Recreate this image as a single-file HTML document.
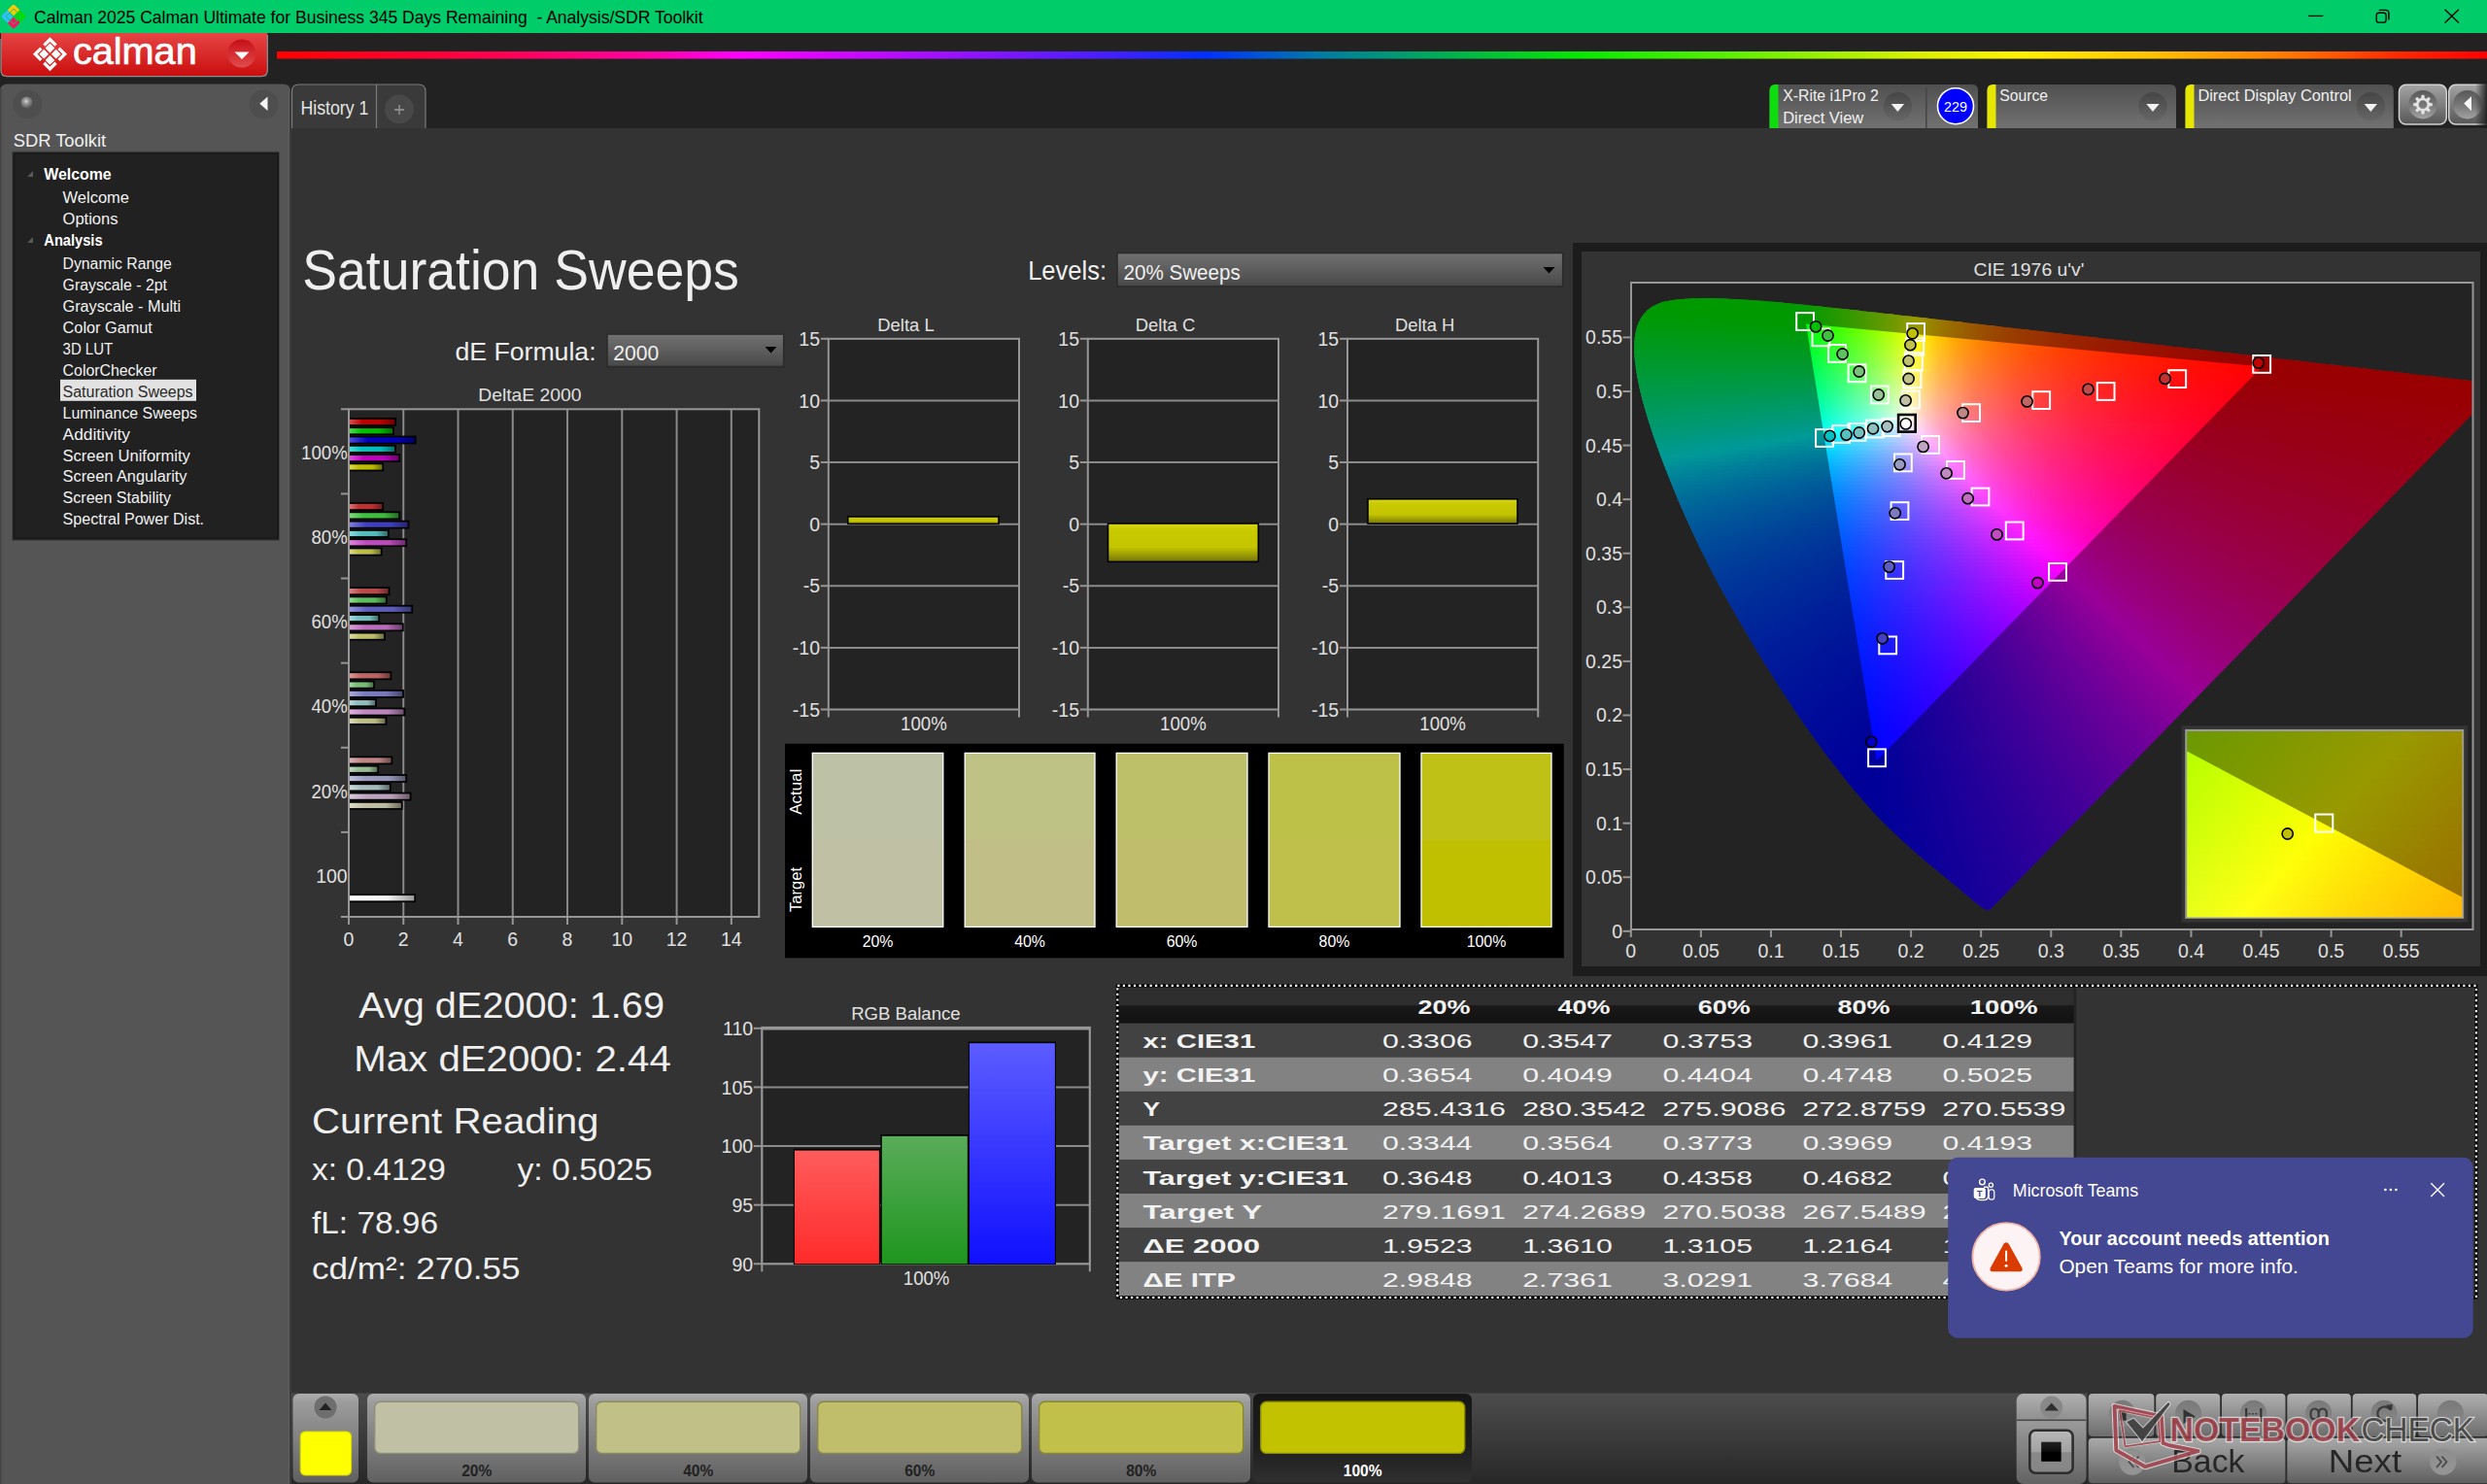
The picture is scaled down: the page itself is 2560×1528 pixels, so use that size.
<!DOCTYPE html>
<html><head><meta charset="utf-8"><title>Calman</title>
<style>html,body{margin:0;padding:0;background:#333;overflow:hidden}svg{display:block}text{font-family:"Liberation Sans",sans-serif;white-space:pre}</style>
</head><body>
<svg width="2560" height="1528" viewBox="0 0 2560 1528">
<defs><linearGradient id="spec" x1="0" y1="0" x2="1" y2="0"><stop offset="0" stop-color="#ff0000"/><stop offset="0.1" stop-color="#ff0050"/><stop offset="0.17" stop-color="#ff00a8"/><stop offset="0.21" stop-color="#ff00ff"/><stop offset="0.3" stop-color="#a010ff"/><stop offset="0.38" stop-color="#4020ff"/><stop offset="0.42" stop-color="#0030ff"/><stop offset="0.47" stop-color="#0078a8"/><stop offset="0.53" stop-color="#00b050"/><stop offset="0.59" stop-color="#08e800"/><stop offset="0.66" stop-color="#60f000"/><stop offset="0.74" stop-color="#d8f000"/><stop offset="0.79" stop-color="#fff000"/><stop offset="0.85" stop-color="#ffc000"/><stop offset="0.91" stop-color="#ff7800"/><stop offset="0.96" stop-color="#ff2800"/><stop offset="1" stop-color="#ff0000"/></linearGradient>
<linearGradient id="logo" x1="0" y1="0" x2="0" y2="1"><stop offset="0" stop-color="#e64444"/><stop offset="0.5" stop-color="#d92a2a"/><stop offset="1" stop-color="#c90d0d"/></linearGradient>
<linearGradient id="ddc" x1="0" y1="0" x2="0" y2="1"><stop offset="0" stop-color="#c60e18"/><stop offset="1" stop-color="#e24c4c"/></linearGradient>
<linearGradient id="ddcir" x1="0" y1="0" x2="0" y2="1"><stop offset="0" stop-color="#464646"/><stop offset="1" stop-color="#666666"/></linearGradient>
<linearGradient id="pan" x1="0" y1="0" x2="0" y2="1"><stop offset="0" stop-color="#505050"/><stop offset="1" stop-color="#727272"/></linearGradient>
<linearGradient id="gbtn" x1="0" y1="0" x2="0" y2="1"><stop offset="0" stop-color="#a4a4a4"/><stop offset="0.5" stop-color="#7e7e7e"/><stop offset="1" stop-color="#565656"/></linearGradient>
<linearGradient id="gcir" x1="0" y1="0" x2="0" y2="1"><stop offset="0" stop-color="#585858"/><stop offset="0.5" stop-color="#767676"/><stop offset="1" stop-color="#a2a2a2"/></linearGradient>
<linearGradient id="edge" x1="0" y1="0" x2="1" y2="0"><stop offset="0" stop-color="#222" stop-opacity="0"/><stop offset="1" stop-color="#1c1c1c" stop-opacity="0.9"/></linearGradient>
<radialGradient id="knob" cx="0.45" cy="0.4" r="0.6"><stop offset="0" stop-color="#d8d8d8"/><stop offset="0.35" stop-color="#9a9a9a"/><stop offset="1" stop-color="#585858"/></radialGradient>
<linearGradient id="dd" x1="0" y1="0" x2="0" y2="1"><stop offset="0" stop-color="#727272"/><stop offset="1" stop-color="#484848"/></linearGradient>
<linearGradient id="b0" x1="0" y1="0" x2="1" y2="0"><stop offset="0" stop-color="#dc4c4c"/><stop offset="0.28" stop-color="#c00000"/><stop offset="0.7" stop-color="#ba0000"/><stop offset="1" stop-color="#6f0000"/></linearGradient>
<linearGradient id="b1" x1="0" y1="0" x2="1" y2="0"><stop offset="0" stop-color="#4cdc4c"/><stop offset="0.28" stop-color="#00c000"/><stop offset="0.7" stop-color="#00ba00"/><stop offset="1" stop-color="#006f00"/></linearGradient>
<linearGradient id="b2" x1="0" y1="0" x2="1" y2="0"><stop offset="0" stop-color="#4c4cdc"/><stop offset="0.28" stop-color="#0000c0"/><stop offset="0.7" stop-color="#0000ba"/><stop offset="1" stop-color="#00006f"/></linearGradient>
<linearGradient id="b3" x1="0" y1="0" x2="1" y2="0"><stop offset="0" stop-color="#4cdcdc"/><stop offset="0.28" stop-color="#00c0c0"/><stop offset="0.7" stop-color="#00baba"/><stop offset="1" stop-color="#006f6f"/></linearGradient>
<linearGradient id="b4" x1="0" y1="0" x2="1" y2="0"><stop offset="0" stop-color="#dc4cdc"/><stop offset="0.28" stop-color="#c000c0"/><stop offset="0.7" stop-color="#ba00ba"/><stop offset="1" stop-color="#6f006f"/></linearGradient>
<linearGradient id="b5" x1="0" y1="0" x2="1" y2="0"><stop offset="0" stop-color="#dcdc4c"/><stop offset="0.28" stop-color="#c0c000"/><stop offset="0.7" stop-color="#baba00"/><stop offset="1" stop-color="#6f6f00"/></linearGradient>
<linearGradient id="b6" x1="0" y1="0" x2="1" y2="0"><stop offset="0" stop-color="#dc7272"/><stop offset="0.28" stop-color="#c03131"/><stop offset="0.7" stop-color="#ba3030"/><stop offset="1" stop-color="#6f1d1d"/></linearGradient>
<linearGradient id="b7" x1="0" y1="0" x2="1" y2="0"><stop offset="0" stop-color="#7ddc7d"/><stop offset="0.28" stop-color="#40c040"/><stop offset="0.7" stop-color="#3eba3e"/><stop offset="1" stop-color="#256f25"/></linearGradient>
<linearGradient id="b8" x1="0" y1="0" x2="1" y2="0"><stop offset="0" stop-color="#7d7ddc"/><stop offset="0.28" stop-color="#4040c0"/><stop offset="0.7" stop-color="#3e3eba"/><stop offset="1" stop-color="#25256f"/></linearGradient>
<linearGradient id="b9" x1="0" y1="0" x2="1" y2="0"><stop offset="0" stop-color="#8cdcdc"/><stop offset="0.28" stop-color="#55c0c0"/><stop offset="0.7" stop-color="#52baba"/><stop offset="1" stop-color="#316f6f"/></linearGradient>
<linearGradient id="b10" x1="0" y1="0" x2="1" y2="0"><stop offset="0" stop-color="#dc86dc"/><stop offset="0.28" stop-color="#c04cc0"/><stop offset="0.7" stop-color="#ba4aba"/><stop offset="1" stop-color="#6f2c6f"/></linearGradient>
<linearGradient id="b11" x1="0" y1="0" x2="1" y2="0"><stop offset="0" stop-color="#dcdc86"/><stop offset="0.28" stop-color="#c0c04c"/><stop offset="0.7" stop-color="#baba4a"/><stop offset="1" stop-color="#6f6f2c"/></linearGradient>
<linearGradient id="b12" x1="0" y1="0" x2="1" y2="0"><stop offset="0" stop-color="#dc8484"/><stop offset="0.28" stop-color="#c04a4a"/><stop offset="0.7" stop-color="#ba4848"/><stop offset="1" stop-color="#6f2b2b"/></linearGradient>
<linearGradient id="b13" x1="0" y1="0" x2="1" y2="0"><stop offset="0" stop-color="#93dc93"/><stop offset="0.28" stop-color="#5ec05e"/><stop offset="0.7" stop-color="#5bba5b"/><stop offset="1" stop-color="#366f36"/></linearGradient>
<linearGradient id="b14" x1="0" y1="0" x2="1" y2="0"><stop offset="0" stop-color="#9393dc"/><stop offset="0.28" stop-color="#5e5ec0"/><stop offset="0.7" stop-color="#5b5bba"/><stop offset="1" stop-color="#37376f"/></linearGradient>
<linearGradient id="b15" x1="0" y1="0" x2="1" y2="0"><stop offset="0" stop-color="#a5dcdc"/><stop offset="0.28" stop-color="#76c0c0"/><stop offset="0.7" stop-color="#73baba"/><stop offset="1" stop-color="#456f6f"/></linearGradient>
<linearGradient id="b16" x1="0" y1="0" x2="1" y2="0"><stop offset="0" stop-color="#dc9edc"/><stop offset="0.28" stop-color="#c06dc0"/><stop offset="0.7" stop-color="#ba6aba"/><stop offset="1" stop-color="#6f3f6f"/></linearGradient>
<linearGradient id="b17" x1="0" y1="0" x2="1" y2="0"><stop offset="0" stop-color="#dcdc9e"/><stop offset="0.28" stop-color="#c0c06d"/><stop offset="0.7" stop-color="#baba6a"/><stop offset="1" stop-color="#6f6f3f"/></linearGradient>
<linearGradient id="b18" x1="0" y1="0" x2="1" y2="0"><stop offset="0" stop-color="#dc9898"/><stop offset="0.28" stop-color="#c06565"/><stop offset="0.7" stop-color="#ba6262"/><stop offset="1" stop-color="#6f3a3a"/></linearGradient>
<linearGradient id="b19" x1="0" y1="0" x2="1" y2="0"><stop offset="0" stop-color="#a8dca8"/><stop offset="0.28" stop-color="#7ac07a"/><stop offset="0.7" stop-color="#77ba77"/><stop offset="1" stop-color="#476f47"/></linearGradient>
<linearGradient id="b20" x1="0" y1="0" x2="1" y2="0"><stop offset="0" stop-color="#a8a8dc"/><stop offset="0.28" stop-color="#7b7bc0"/><stop offset="0.7" stop-color="#7777ba"/><stop offset="1" stop-color="#47476f"/></linearGradient>
<linearGradient id="b21" x1="0" y1="0" x2="1" y2="0"><stop offset="0" stop-color="#b9dcdc"/><stop offset="0.28" stop-color="#91c0c0"/><stop offset="0.7" stop-color="#8dbaba"/><stop offset="1" stop-color="#546f6f"/></linearGradient>
<linearGradient id="b22" x1="0" y1="0" x2="1" y2="0"><stop offset="0" stop-color="#dcb3dc"/><stop offset="0.28" stop-color="#c089c0"/><stop offset="0.7" stop-color="#ba85ba"/><stop offset="1" stop-color="#6f506f"/></linearGradient>
<linearGradient id="b23" x1="0" y1="0" x2="1" y2="0"><stop offset="0" stop-color="#dcdcb3"/><stop offset="0.28" stop-color="#c0c089"/><stop offset="0.7" stop-color="#baba85"/><stop offset="1" stop-color="#6f6f4f"/></linearGradient>
<linearGradient id="b24" x1="0" y1="0" x2="1" y2="0"><stop offset="0" stop-color="#dcb2b2"/><stop offset="0.28" stop-color="#c08787"/><stop offset="0.7" stop-color="#ba8383"/><stop offset="1" stop-color="#6f4e4e"/></linearGradient>
<linearGradient id="b25" x1="0" y1="0" x2="1" y2="0"><stop offset="0" stop-color="#c0dcc0"/><stop offset="0.28" stop-color="#99c099"/><stop offset="0.7" stop-color="#95ba95"/><stop offset="1" stop-color="#596f59"/></linearGradient>
<linearGradient id="b26" x1="0" y1="0" x2="1" y2="0"><stop offset="0" stop-color="#c0c0dc"/><stop offset="0.28" stop-color="#9a9ac0"/><stop offset="0.7" stop-color="#9595ba"/><stop offset="1" stop-color="#59596f"/></linearGradient>
<linearGradient id="b27" x1="0" y1="0" x2="1" y2="0"><stop offset="0" stop-color="#ccdcdc"/><stop offset="0.28" stop-color="#a9c0c0"/><stop offset="0.7" stop-color="#a4baba"/><stop offset="1" stop-color="#626f6f"/></linearGradient>
<linearGradient id="b28" x1="0" y1="0" x2="1" y2="0"><stop offset="0" stop-color="#dcc8dc"/><stop offset="0.28" stop-color="#c0a4c0"/><stop offset="0.7" stop-color="#ba9fba"/><stop offset="1" stop-color="#6f5f6f"/></linearGradient>
<linearGradient id="b29" x1="0" y1="0" x2="1" y2="0"><stop offset="0" stop-color="#dcdcc8"/><stop offset="0.28" stop-color="#c0c0a4"/><stop offset="0.7" stop-color="#baba9f"/><stop offset="1" stop-color="#6f6f5f"/></linearGradient>
<linearGradient id="bw" x1="0" y1="0" x2="1" y2="0"><stop offset="0" stop-color="#ffffff"/><stop offset="0.6" stop-color="#f2f2f2"/><stop offset="1" stop-color="#9a9a9a"/></linearGradient>
<linearGradient id="ybar" x1="0" y1="0" x2="0" y2="1"><stop offset="0" stop-color="#d6d612"/><stop offset="0.2" stop-color="#caca02"/><stop offset="0.62" stop-color="#c4c400"/><stop offset="1" stop-color="#76760a"/></linearGradient>
<linearGradient id="rb" x1="0" y1="0" x2="0" y2="1"><stop offset="0" stop-color="#ff5c5c"/><stop offset="1" stop-color="#ff2a2a"/></linearGradient>
<linearGradient id="gb" x1="0" y1="0" x2="0" y2="1"><stop offset="0" stop-color="#5aac5a"/><stop offset="1" stop-color="#1e961e"/></linearGradient>
<linearGradient id="bb" x1="0" y1="0" x2="0" y2="1"><stop offset="0" stop-color="#5c5cff"/><stop offset="1" stop-color="#1010ff"/></linearGradient>
<linearGradient id="th" x1="0" y1="0" x2="0" y2="1"><stop offset="0" stop-color="#2e2e2e"/><stop offset="0.51" stop-color="#2d2d2d"/><stop offset="0.52" stop-color="#191919"/><stop offset="1" stop-color="#111111"/></linearGradient>
<linearGradient id="c0" gradientUnits="userSpaceOnUse" x1="1733.9" x2="1779.6" y1="0" y2="0"><stop offset="0" stop-color="#00ff00"/><stop offset="1" stop-color="#00ff00"/></linearGradient>
<linearGradient id="c1" gradientUnits="userSpaceOnUse" x1="1702.3" x2="1841.0" y1="0" y2="0"><stop offset="0" stop-color="#00ff00"/><stop offset="1" stop-color="#00ff00"/></linearGradient>
<linearGradient id="c2" gradientUnits="userSpaceOnUse" x1="1693.2" x2="1881.5" y1="0" y2="0"><stop offset="0" stop-color="#00ff00"/><stop offset=".86" stop-color="#00ff00"/><stop offset="1" stop-color="#2dff00"/></linearGradient>
<linearGradient id="c3" gradientUnits="userSpaceOnUse" x1="1687.7" x2="1918.7" y1="0" y2="0"><stop offset="0" stop-color="#00ff00"/><stop offset=".727" stop-color="#00ff00"/><stop offset=".857" stop-color="#34ff00"/><stop offset="1" stop-color="#76ff00"/></linearGradient>
<linearGradient id="c4" gradientUnits="userSpaceOnUse" x1="1684.0" x2="1954.5" y1="0" y2="0"><stop offset="0" stop-color="#00ff05"/><stop offset=".636" stop-color="#00ff00"/><stop offset=".821" stop-color="#5bff00"/><stop offset="1" stop-color="#c9ff00"/></linearGradient>
<linearGradient id="c5" gradientUnits="userSpaceOnUse" x1="1681.1" x2="1989.9" y1="0" y2="0"><stop offset="0" stop-color="#00ff0b"/><stop offset=".298" stop-color="#00ff00"/><stop offset=".57" stop-color="#00ff00"/><stop offset=".764" stop-color="#72ff00"/><stop offset=".855" stop-color="#b2ff00"/><stop offset=".946" stop-color="#fbff00"/><stop offset="1" stop-color="#ffd900"/></linearGradient>
<linearGradient id="c6" gradientUnits="userSpaceOnUse" x1="1679.5" x2="2024.8" y1="0" y2="0"><stop offset="0" stop-color="#00ff10"/><stop offset=".515" stop-color="#00ff00"/><stop offset=".597" stop-color="#31ff00"/><stop offset=".689" stop-color="#72ff00"/><stop offset=".77" stop-color="#b3ff00"/><stop offset=".851" stop-color="#fdff00"/><stop offset=".921" stop-color="#ffc800"/><stop offset="1" stop-color="#ff9b00"/></linearGradient>
<linearGradient id="c7" gradientUnits="userSpaceOnUse" x1="1679.5" x2="2059.6" y1="0" y2="0"><stop offset="0" stop-color="#00ff15"/><stop offset=".474" stop-color="#01ff00"/><stop offset=".631" stop-color="#76ff00"/><stop offset=".705" stop-color="#b8ff00"/><stop offset=".773" stop-color="#feff00"/><stop offset=".821" stop-color="#ffd300"/><stop offset=".873" stop-color="#ffae00"/><stop offset=".931" stop-color="#ff8f00"/><stop offset="1" stop-color="#ff7200"/></linearGradient>
<linearGradient id="c8" gradientUnits="userSpaceOnUse" x1="1679.5" x2="2094.4" y1="0" y2="0"><stop offset="0" stop-color="#00ff1a"/><stop offset=".434" stop-color="#00ff07"/><stop offset=".578" stop-color="#76ff00"/><stop offset=".646" stop-color="#b9ff00"/><stop offset=".709" stop-color="#ffff00"/><stop offset=".762" stop-color="#ffca00"/><stop offset=".829" stop-color="#ff9b00"/><stop offset=".906" stop-color="#ff7500"/><stop offset="1" stop-color="#ff5600"/></linearGradient>
<linearGradient id="c9" gradientUnits="userSpaceOnUse" x1="1679.5" x2="2129.4" y1="0" y2="0"><stop offset="0" stop-color="#00ff1f"/><stop offset=".4" stop-color="#00ff0e"/><stop offset=".458" stop-color="#2fff0a"/><stop offset=".529" stop-color="#71ff05"/><stop offset=".591" stop-color="#b4ff00"/><stop offset=".649" stop-color="#faff00"/><stop offset=".654" stop-color="#fffe00"/><stop offset=".685" stop-color="#ffda00"/><stop offset=".72" stop-color="#ffb900"/><stop offset=".791" stop-color="#ff8a00"/><stop offset=".885" stop-color="#ff6100"/><stop offset="1" stop-color="#ff4000"/></linearGradient>
<linearGradient id="c10" gradientUnits="userSpaceOnUse" x1="1679.5" x2="2164.3" y1="0" y2="0"><stop offset="0" stop-color="#00ff25"/><stop offset=".375" stop-color="#01ff14"/><stop offset=".495" stop-color="#76ff0c"/><stop offset=".549" stop-color="#b4ff08"/><stop offset=".602" stop-color="#fcff03"/><stop offset=".672" stop-color="#ffb400"/><stop offset=".755" stop-color="#ff7d00"/><stop offset=".862" stop-color="#ff5200"/><stop offset="1" stop-color="#ff2f00"/></linearGradient>
<linearGradient id="c11" gradientUnits="userSpaceOnUse" x1="1679.5" x2="2199.0" y1="0" y2="0"><stop offset="0" stop-color="#00ff2a"/><stop offset=".35" stop-color="#00ff1c"/><stop offset=".462" stop-color="#75ff14"/><stop offset=".512" stop-color="#b5ff11"/><stop offset=".562" stop-color="#fdff0c"/><stop offset=".601" stop-color="#ffce07"/><stop offset=".635" stop-color="#ffac03"/><stop offset=".724" stop-color="#ff7200"/><stop offset=".843" stop-color="#ff4500"/><stop offset="1" stop-color="#ff2200"/></linearGradient>
<linearGradient id="c12" gradientUnits="userSpaceOnUse" x1="1679.5" x2="2233.7" y1="0" y2="0"><stop offset="0" stop-color="#00ff2f"/><stop offset=".328" stop-color="#00ff23"/><stop offset=".379" stop-color="#34ff20"/><stop offset=".433" stop-color="#75ff1d"/><stop offset=".48" stop-color="#b5ff19"/><stop offset=".527" stop-color="#feff15"/><stop offset=".563" stop-color="#ffcd0f"/><stop offset=".599" stop-color="#ffa809"/><stop offset=".642" stop-color="#ff8605"/><stop offset=".693" stop-color="#ff6a01"/><stop offset=".823" stop-color="#ff3a00"/><stop offset="1" stop-color="#ff1700"/></linearGradient>
<linearGradient id="c13" gradientUnits="userSpaceOnUse" x1="1679.5" x2="2268.6" y1="0" y2="0"><stop offset="0" stop-color="#00ff35"/><stop offset=".312" stop-color="#01ff2a"/><stop offset=".411" stop-color="#79ff25"/><stop offset=".455" stop-color="#bbff22"/><stop offset=".496" stop-color="#ffff1f"/><stop offset=".53" stop-color="#ffcc16"/><stop offset=".567" stop-color="#ffa410"/><stop offset=".614" stop-color="#ff7e0a"/><stop offset=".669" stop-color="#ff6005"/><stop offset=".808" stop-color="#ff3000"/><stop offset="1" stop-color="#ff0e00"/></linearGradient>
<linearGradient id="c14" gradientUnits="userSpaceOnUse" x1="1679.5" x2="2303.3" y1="0" y2="0"><stop offset="0" stop-color="#00ff3a"/><stop offset=".295" stop-color="#00ff32"/><stop offset=".385" stop-color="#74ff2d"/><stop offset=".426" stop-color="#b6ff2b"/><stop offset=".468" stop-color="#fffe28"/><stop offset=".5" stop-color="#ffcb1e"/><stop offset=".542" stop-color="#ff9c15"/><stop offset=".59" stop-color="#ff770e"/><stop offset=".644" stop-color="#ff5908"/><stop offset=".712" stop-color="#ff3e03"/><stop offset=".792" stop-color="#ff2900"/><stop offset="1" stop-color="#ff0700"/></linearGradient>
<linearGradient id="c15" gradientUnits="userSpaceOnUse" x1="1679.5" x2="2338.3" y1="0" y2="0"><stop offset="0" stop-color="#00ff40"/><stop offset=".279" stop-color="#00ff39"/><stop offset=".319" stop-color="#32ff38"/><stop offset=".361" stop-color="#6fff36"/><stop offset=".443" stop-color="#fffd32"/><stop offset=".477" stop-color="#ffc525"/><stop offset=".516" stop-color="#ff981b"/><stop offset=".565" stop-color="#ff7113"/><stop offset=".622" stop-color="#ff520b"/><stop offset=".692" stop-color="#ff3806"/><stop offset=".777" stop-color="#ff2101"/><stop offset="1" stop-color="#ff0000"/></linearGradient>
<linearGradient id="c16" gradientUnits="userSpaceOnUse" x1="1679.5" x2="2373.2" y1="0" y2="0"><stop offset="0" stop-color="#00ff46"/><stop offset=".268" stop-color="#01ff41"/><stop offset=".346" stop-color="#74ff3f"/><stop offset=".421" stop-color="#fffc3c"/><stop offset=".456" stop-color="#ffc02c"/><stop offset=".496" stop-color="#ff9120"/><stop offset=".545" stop-color="#ff6b17"/><stop offset=".605" stop-color="#ff4a0e"/><stop offset=".683" stop-color="#ff2f07"/><stop offset=".781" stop-color="#ff1801"/><stop offset=".946" stop-color="#ff0000"/><stop offset="1" stop-color="#ff0000"/></linearGradient>
<linearGradient id="c17" gradientUnits="userSpaceOnUse" x1="1679.5" x2="2407.7" y1="0" y2="0"><stop offset="0" stop-color="#00ff4b"/><stop offset=".255" stop-color="#00ff49"/><stop offset=".327" stop-color="#6fff48"/><stop offset=".363" stop-color="#b1ff47"/><stop offset=".398" stop-color="#fdff47"/><stop offset=".401" stop-color="#fffb45"/><stop offset=".434" stop-color="#ffbf34"/><stop offset=".475" stop-color="#ff8d26"/><stop offset=".527" stop-color="#ff641a"/><stop offset=".59" stop-color="#ff4311"/><stop offset=".678" stop-color="#ff2609"/><stop offset=".791" stop-color="#ff0f02"/><stop offset=".895" stop-color="#ff0000"/><stop offset="1" stop-color="#ff0000"/></linearGradient>
<linearGradient id="c18" gradientUnits="userSpaceOnUse" x1="1679.5" x2="2442.3" y1="0" y2="0"><stop offset="0" stop-color="#00ff51"/><stop offset=".244" stop-color="#00ff51"/><stop offset=".278" stop-color="#33ff51"/><stop offset=".315" stop-color="#73ff51"/><stop offset=".349" stop-color="#b7ff51"/><stop offset=".38" stop-color="#feff51"/><stop offset=".414" stop-color="#ffbd3c"/><stop offset=".456" stop-color="#ff892c"/><stop offset=".509" stop-color="#ff5f1e"/><stop offset=".574" stop-color="#ff3e14"/><stop offset=".671" stop-color="#ff1f0a"/><stop offset=".8" stop-color="#ff0702"/><stop offset=".852" stop-color="#ff0000"/><stop offset="1" stop-color="#ff0000"/></linearGradient>
<linearGradient id="c19" gradientUnits="userSpaceOnUse" x1="1679.5" x2="2477.2" y1="0" y2="0"><stop offset="0" stop-color="#00ff57"/><stop offset=".236" stop-color="#01ff59"/><stop offset=".303" stop-color="#78ff5a"/><stop offset=".364" stop-color="#fffe5b"/><stop offset=".396" stop-color="#ffbc44"/><stop offset=".439" stop-color="#ff8531"/><stop offset=".491" stop-color="#ff5b22"/><stop offset=".559" stop-color="#ff3916"/><stop offset=".667" stop-color="#ff180b"/><stop offset=".807" stop-color="#ff0002"/><stop offset="1" stop-color="#ff0000"/></linearGradient>
<linearGradient id="c20" gradientUnits="userSpaceOnUse" x1="1679.5" x2="2511.8" y1="0" y2="0"><stop offset="0" stop-color="#00ff5d"/><stop offset=".226" stop-color="#00ff62"/><stop offset=".288" stop-color="#73ff64"/><stop offset=".348" stop-color="#fffd66"/><stop offset=".365" stop-color="#ffd657"/><stop offset=".382" stop-color="#ffb74b"/><stop offset=".425" stop-color="#ff7f36"/><stop offset=".478" stop-color="#ff5525"/><stop offset=".548" stop-color="#ff3318"/><stop offset=".644" stop-color="#ff160d"/><stop offset=".769" stop-color="#ff0005"/><stop offset="1" stop-color="#ff0000"/></linearGradient>
<linearGradient id="c21" gradientUnits="userSpaceOnUse" x1="1679.5" x2="2545.0" y1="0" y2="0"><stop offset="0" stop-color="#00ff63"/><stop offset=".217" stop-color="#00ff6a"/><stop offset=".245" stop-color="#31ff6c"/><stop offset=".277" stop-color="#72ff6e"/><stop offset=".335" stop-color="#fffc70"/><stop offset=".351" stop-color="#ffd460"/><stop offset=".367" stop-color="#ffb653"/><stop offset=".411" stop-color="#ff7c3b"/><stop offset=".467" stop-color="#ff5029"/><stop offset=".536" stop-color="#ff2e1b"/><stop offset=".624" stop-color="#ff1410"/><stop offset=".735" stop-color="#ff0007"/><stop offset="1" stop-color="#ff0000"/></linearGradient>
<linearGradient id="c22" gradientUnits="userSpaceOnUse" x1="1679.5" x2="2545.0" y1="0" y2="0"><stop offset="0" stop-color="#00ff69"/><stop offset=".22" stop-color="#02ff73"/><stop offset=".277" stop-color="#72ff78"/><stop offset=".305" stop-color="#b3ff7a"/><stop offset=".333" stop-color="#fdff7d"/><stop offset=".335" stop-color="#fffb7b"/><stop offset=".351" stop-color="#ffd369"/><stop offset=".367" stop-color="#ffb45b"/><stop offset=".411" stop-color="#ff7a41"/><stop offset=".467" stop-color="#ff4f2d"/><stop offset=".536" stop-color="#ff2d1e"/><stop offset=".624" stop-color="#ff1413"/><stop offset=".733" stop-color="#ff000a"/><stop offset="1" stop-color="#ff0000"/></linearGradient>
<linearGradient id="c23" gradientUnits="userSpaceOnUse" x1="1679.5" x2="2545.0" y1="0" y2="0"><stop offset="0" stop-color="#00ff6f"/><stop offset=".22" stop-color="#00ff7c"/><stop offset=".275" stop-color="#6dff81"/><stop offset=".305" stop-color="#b3ff85"/><stop offset=".333" stop-color="#feff88"/><stop offset=".335" stop-color="#fff986"/><stop offset=".351" stop-color="#ffd272"/><stop offset=".367" stop-color="#ffb363"/><stop offset=".411" stop-color="#ff7947"/><stop offset=".467" stop-color="#ff4d32"/><stop offset=".536" stop-color="#ff2c22"/><stop offset=".622" stop-color="#ff1316"/><stop offset=".728" stop-color="#ff000c"/><stop offset="1" stop-color="#ff0000"/></linearGradient>
<linearGradient id="c24" gradientUnits="userSpaceOnUse" x1="1679.6" x2="2545.0" y1="0" y2="0"><stop offset="0" stop-color="#00ff75"/><stop offset=".22" stop-color="#00ff85"/><stop offset=".25" stop-color="#37ff88"/><stop offset=".28" stop-color="#77ff8c"/><stop offset=".305" stop-color="#b4ff90"/><stop offset=".333" stop-color="#fffe94"/><stop offset=".349" stop-color="#ffd57e"/><stop offset=".365" stop-color="#ffb56e"/><stop offset=".407" stop-color="#ff7d50"/><stop offset=".462" stop-color="#ff4f38"/><stop offset=".532" stop-color="#ff2d27"/><stop offset=".617" stop-color="#ff1419"/><stop offset=".723" stop-color="#ff000f"/><stop offset="1" stop-color="#ff0001"/></linearGradient>
<linearGradient id="c25" gradientUnits="userSpaceOnUse" x1="1680.6" x2="2545.0" y1="0" y2="0"><stop offset="0" stop-color="#00ff7c"/><stop offset=".22" stop-color="#00ff8f"/><stop offset=".275" stop-color="#6fff96"/><stop offset=".303" stop-color="#b1ff9b"/><stop offset=".331" stop-color="#fdffa0"/><stop offset=".333" stop-color="#fffa9d"/><stop offset=".349" stop-color="#ffd187"/><stop offset=".366" stop-color="#ffb275"/><stop offset=".407" stop-color="#ff7a56"/><stop offset=".463" stop-color="#ff4d3d"/><stop offset=".532" stop-color="#ff2c2a"/><stop offset=".613" stop-color="#ff141d"/><stop offset=".717" stop-color="#ff0012"/><stop offset="1" stop-color="#ff0003"/></linearGradient>
<linearGradient id="c26" gradientUnits="userSpaceOnUse" x1="1681.6" x2="2545.0" y1="0" y2="0"><stop offset="0" stop-color="#00ff82"/><stop offset=".22" stop-color="#01ff98"/><stop offset=".276" stop-color="#71ffa1"/><stop offset=".331" stop-color="#fffcab"/><stop offset=".347" stop-color="#ffd392"/><stop offset=".364" stop-color="#ffb37f"/><stop offset=".405" stop-color="#ff7a5d"/><stop offset=".461" stop-color="#ff4d42"/><stop offset=".53" stop-color="#ff2b2e"/><stop offset=".612" stop-color="#ff1320"/><stop offset=".713" stop-color="#ff0014"/><stop offset="1" stop-color="#ff0004"/></linearGradient>
<linearGradient id="c27" gradientUnits="userSpaceOnUse" x1="1682.6" x2="2545.0" y1="0" y2="0"><stop offset="0" stop-color="#00ff89"/><stop offset=".22" stop-color="#01ffa2"/><stop offset=".278" stop-color="#79ffad"/><stop offset=".329" stop-color="#fffeb9"/><stop offset=".346" stop-color="#ffd49e"/><stop offset=".362" stop-color="#ffb389"/><stop offset=".404" stop-color="#ff7a65"/><stop offset=".459" stop-color="#ff4c48"/><stop offset=".529" stop-color="#ff2b32"/><stop offset=".608" stop-color="#ff1323"/><stop offset=".707" stop-color="#ff0017"/><stop offset="1" stop-color="#ff0006"/></linearGradient>
<linearGradient id="c28" gradientUnits="userSpaceOnUse" x1="1683.7" x2="2545.0" y1="0" y2="0"><stop offset="0" stop-color="#00ff90"/><stop offset=".218" stop-color="#00ffac"/><stop offset=".241" stop-color="#2affb0"/><stop offset=".272" stop-color="#6bffb7"/><stop offset=".3" stop-color="#afffbe"/><stop offset=".327" stop-color="#feffc6"/><stop offset=".33" stop-color="#fff9c2"/><stop offset=".346" stop-color="#ffd0a6"/><stop offset=".362" stop-color="#ffb090"/><stop offset=".404" stop-color="#ff776a"/><stop offset=".46" stop-color="#ff4b4c"/><stop offset=".529" stop-color="#ff2936"/><stop offset=".606" stop-color="#ff1327"/><stop offset=".704" stop-color="#ff001a"/><stop offset="1" stop-color="#ff0007"/></linearGradient>
<linearGradient id="c29" gradientUnits="userSpaceOnUse" x1="1684.8" x2="2545.0" y1="0" y2="0"><stop offset="0" stop-color="#00ff96"/><stop offset=".219" stop-color="#00ffb6"/><stop offset=".272" stop-color="#6effc2"/><stop offset=".3" stop-color="#b3ffca"/><stop offset=".325" stop-color="#fcffd3"/><stop offset=".328" stop-color="#fffbd0"/><stop offset=".344" stop-color="#ffd1b2"/><stop offset=".36" stop-color="#ffb09b"/><stop offset=".402" stop-color="#ff7772"/><stop offset=".456" stop-color="#ff4b53"/><stop offset=".525" stop-color="#ff2a3b"/><stop offset=".602" stop-color="#ff122a"/><stop offset=".697" stop-color="#ff001d"/><stop offset="1" stop-color="#ff0009"/></linearGradient>
<linearGradient id="c30" gradientUnits="userSpaceOnUse" x1="1685.9" x2="2545.0" y1="0" y2="0"><stop offset="0" stop-color="#00ff9d"/><stop offset=".219" stop-color="#00ffc0"/><stop offset=".275" stop-color="#76ffcf"/><stop offset=".326" stop-color="#fffcdf"/><stop offset=".342" stop-color="#ffd1be"/><stop offset=".359" stop-color="#ffb0a5"/><stop offset=".4" stop-color="#ff777a"/><stop offset=".454" stop-color="#ff4b59"/><stop offset=".524" stop-color="#ff293f"/><stop offset=".601" stop-color="#ff122e"/><stop offset=".694" stop-color="#ff0020"/><stop offset="1" stop-color="#ff000a"/></linearGradient>
<linearGradient id="c31" gradientUnits="userSpaceOnUse" x1="1687.1" x2="2545.0" y1="0" y2="0"><stop offset="0" stop-color="#00ffa4"/><stop offset=".219" stop-color="#01ffcb"/><stop offset=".275" stop-color="#79ffdc"/><stop offset=".324" stop-color="#fffeed"/><stop offset=".34" stop-color="#ffd2ca"/><stop offset=".357" stop-color="#ffb1b0"/><stop offset=".399" stop-color="#ff7681"/><stop offset=".452" stop-color="#ff4a5e"/><stop offset=".522" stop-color="#ff2843"/><stop offset=".597" stop-color="#ff1231"/><stop offset=".688" stop-color="#ff0023"/><stop offset="1" stop-color="#ff000c"/></linearGradient>
<linearGradient id="c32" gradientUnits="userSpaceOnUse" x1="1688.3" x2="2545.0" y1="0" y2="0"><stop offset="0" stop-color="#00ffac"/><stop offset=".119" stop-color="#00ffbf"/><stop offset=".217" stop-color="#00ffd6"/><stop offset=".24" stop-color="#2dffdd"/><stop offset=".271" stop-color="#71ffe7"/><stop offset=".296" stop-color="#b3fff1"/><stop offset=".322" stop-color="#fffffc"/><stop offset=".339" stop-color="#ffd3d7"/><stop offset=".355" stop-color="#ffb1bb"/><stop offset=".397" stop-color="#ff7689"/><stop offset=".451" stop-color="#ff4a64"/><stop offset=".521" stop-color="#ff2848"/><stop offset=".593" stop-color="#ff1235"/><stop offset=".684" stop-color="#ff0026"/><stop offset="1" stop-color="#ff000d"/></linearGradient>
<linearGradient id="c33" gradientUnits="userSpaceOnUse" x1="1689.6" x2="2544.0" y1="0" y2="0"><stop offset="0" stop-color="#00ffb3"/><stop offset=".119" stop-color="#00ffc8"/><stop offset=".218" stop-color="#00ffe1"/><stop offset=".265" stop-color="#63fff1"/><stop offset=".297" stop-color="#b7ffff"/><stop offset=".325" stop-color="#fff2ff"/><stop offset=".342" stop-color="#ffc9db"/><stop offset=".358" stop-color="#ffa9be"/><stop offset=".4" stop-color="#ff718d"/><stop offset=".454" stop-color="#ff4667"/><stop offset=".527" stop-color="#ff244a"/><stop offset=".679" stop-color="#ff002a"/><stop offset="1" stop-color="#ff000f"/></linearGradient>
<linearGradient id="c34" gradientUnits="userSpaceOnUse" x1="1690.8" x2="2540.1" y1="0" y2="0"><stop offset="0" stop-color="#00ffba"/><stop offset=".12" stop-color="#00ffd1"/><stop offset=".219" stop-color="#01ffed"/><stop offset=".268" stop-color="#6cffff"/><stop offset=".332" stop-color="#ffe0fc"/><stop offset=".349" stop-color="#ffbad9"/><stop offset=".365" stop-color="#ff9dbe"/><stop offset=".41" stop-color="#ff678c"/><stop offset=".466" stop-color="#ff3f67"/><stop offset=".537" stop-color="#ff204b"/><stop offset=".678" stop-color="#ff002d"/><stop offset="1" stop-color="#ff0011"/></linearGradient>
<linearGradient id="c35" gradientUnits="userSpaceOnUse" x1="1692.2" x2="2536.2" y1="0" y2="0"><stop offset="0" stop-color="#00ffc2"/><stop offset=".118" stop-color="#00ffda"/><stop offset=".218" stop-color="#00fff8"/><stop offset=".239" stop-color="#29feff"/><stop offset=".336" stop-color="#ffd4ff"/><stop offset=".37" stop-color="#ff95c1"/><stop offset=".415" stop-color="#ff6290"/><stop offset=".472" stop-color="#ff3b6a"/><stop offset=".543" stop-color="#ff1e4d"/><stop offset=".675" stop-color="#ff0030"/><stop offset="1" stop-color="#ff0012"/></linearGradient>
<linearGradient id="c36" gradientUnits="userSpaceOnUse" x1="1693.5" x2="2532.3" y1="0" y2="0"><stop offset="0" stop-color="#00ffca"/><stop offset=".112" stop-color="#00ffe2"/><stop offset=".205" stop-color="#00fffe"/><stop offset=".219" stop-color="#00faff"/><stop offset=".272" stop-color="#67e6ff"/><stop offset=".343" stop-color="#ffc4fc"/><stop offset=".377" stop-color="#ff8bc1"/><stop offset=".422" stop-color="#ff5b91"/><stop offset=".479" stop-color="#ff376c"/><stop offset=".553" stop-color="#ff1a4f"/><stop offset=".672" stop-color="#ff0034"/><stop offset=".813" stop-color="#ff0022"/><stop offset="1" stop-color="#ff0014"/></linearGradient>
<linearGradient id="c37" gradientUnits="userSpaceOnUse" x1="1694.9" x2="2528.4" y1="0" y2="0"><stop offset="0" stop-color="#00ffd2"/><stop offset=".175" stop-color="#00ffff"/><stop offset=".221" stop-color="#01efff"/><stop offset=".283" stop-color="#79d6ff"/><stop offset=".348" stop-color="#ffbafe"/><stop offset=".384" stop-color="#ff81c1"/><stop offset=".43" stop-color="#ff5592"/><stop offset=".487" stop-color="#ff336d"/><stop offset=".561" stop-color="#ff1850"/><stop offset=".672" stop-color="#ff0037"/><stop offset=".813" stop-color="#ff0024"/><stop offset="1" stop-color="#ff0016"/></linearGradient>
<linearGradient id="c38" gradientUnits="userSpaceOnUse" x1="1696.3" x2="2524.5" y1="0" y2="0"><stop offset="0" stop-color="#00ffda"/><stop offset=".142" stop-color="#00ffff"/><stop offset=".22" stop-color="#00e5ff"/><stop offset=".273" stop-color="#5fd1ff"/><stop offset=".353" stop-color="#feb0ff"/><stop offset=".355" stop-color="#ffacfb"/><stop offset=".391" stop-color="#ff78c1"/><stop offset=".437" stop-color="#ff4f93"/><stop offset=".497" stop-color="#ff2e6e"/><stop offset=".572" stop-color="#ff1451"/><stop offset=".669" stop-color="#ff003b"/><stop offset=".811" stop-color="#ff0027"/><stop offset="1" stop-color="#ff0018"/></linearGradient>
<linearGradient id="c39" gradientUnits="userSpaceOnUse" x1="1697.7" x2="2520.6" y1="0" y2="0"><stop offset="0" stop-color="#00ffe2"/><stop offset=".112" stop-color="#00ffff"/><stop offset=".221" stop-color="#00dbff"/><stop offset=".284" stop-color="#70c3ff"/><stop offset=".36" stop-color="#ffa3fd"/><stop offset=".394" stop-color="#ff74c6"/><stop offset=".435" stop-color="#ff509c"/><stop offset=".486" stop-color="#ff3279"/><stop offset=".549" stop-color="#ff1a5d"/><stop offset=".668" stop-color="#ff003e"/><stop offset=".812" stop-color="#ff0029"/><stop offset="1" stop-color="#ff001a"/></linearGradient>
<linearGradient id="c40" gradientUnits="userSpaceOnUse" x1="1699.2" x2="2516.7" y1="0" y2="0"><stop offset="0" stop-color="#00ffea"/><stop offset=".081" stop-color="#00ffff"/><stop offset=".223" stop-color="#02d1ff"/><stop offset=".294" stop-color="#7bb7ff"/><stop offset=".364" stop-color="#ff9bff"/><stop offset=".399" stop-color="#ff6ec9"/><stop offset=".44" stop-color="#ff4b9e"/><stop offset=".492" stop-color="#ff2f7c"/><stop offset=".555" stop-color="#ff1860"/><stop offset=".665" stop-color="#ff0042"/><stop offset=".81" stop-color="#ff002c"/><stop offset="1" stop-color="#ff001c"/></linearGradient>
<linearGradient id="c41" gradientUnits="userSpaceOnUse" x1="1700.6" x2="2512.8" y1="0" y2="0"><stop offset="0" stop-color="#00fff3"/><stop offset=".047" stop-color="#00ffff"/><stop offset=".222" stop-color="#00c9ff"/><stop offset=".286" stop-color="#68b2ff"/><stop offset=".372" stop-color="#ff8ffc"/><stop offset=".406" stop-color="#ff66c8"/><stop offset=".448" stop-color="#ff469f"/><stop offset=".5" stop-color="#ff2b7d"/><stop offset=".564" stop-color="#ff1561"/><stop offset=".662" stop-color="#ff0046"/><stop offset=".808" stop-color="#ff002f"/><stop offset="1" stop-color="#ff001e"/></linearGradient>
<linearGradient id="c42" gradientUnits="userSpaceOnUse" x1="1702.1" x2="2508.9" y1="0" y2="0"><stop offset="0" stop-color="#00fffc"/><stop offset=".062" stop-color="#00f2ff"/><stop offset=".223" stop-color="#01c0ff"/><stop offset=".295" stop-color="#73a7ff"/><stop offset=".377" stop-color="#ff87fd"/><stop offset=".411" stop-color="#ff61ca"/><stop offset=".454" stop-color="#ff42a1"/><stop offset=".506" stop-color="#ff287f"/><stop offset=".568" stop-color="#ff1464"/><stop offset=".662" stop-color="#ff004a"/><stop offset=".808" stop-color="#ff0031"/><stop offset="1" stop-color="#ff001f"/></linearGradient>
<linearGradient id="c43" gradientUnits="userSpaceOnUse" x1="1703.6" x2="2505.1" y1="0" y2="0"><stop offset="0" stop-color="#00faff"/><stop offset=".222" stop-color="#00b9ff"/><stop offset=".299" stop-color="#759fff"/><stop offset=".382" stop-color="#ff80ff"/><stop offset=".417" stop-color="#ff5bcd"/><stop offset=".459" stop-color="#ff3ea4"/><stop offset=".512" stop-color="#ff2582"/><stop offset=".574" stop-color="#ff1267"/><stop offset=".659" stop-color="#ff004e"/><stop offset=".806" stop-color="#ff0034"/><stop offset="1" stop-color="#ff0021"/></linearGradient>
<linearGradient id="c44" gradientUnits="userSpaceOnUse" x1="1705.1" x2="2501.2" y1="0" y2="0"><stop offset="0" stop-color="#00f1ff"/><stop offset=".224" stop-color="#00b1ff"/><stop offset=".296" stop-color="#6c99ff"/><stop offset=".389" stop-color="#ff76fc"/><stop offset=".425" stop-color="#ff54cc"/><stop offset=".467" stop-color="#ff39a4"/><stop offset=".52" stop-color="#ff2283"/><stop offset=".583" stop-color="#ff0f68"/><stop offset=".656" stop-color="#ff0052"/><stop offset=".751" stop-color="#ff003f"/><stop offset="1" stop-color="#ff0023"/></linearGradient>
<linearGradient id="c45" gradientUnits="userSpaceOnUse" x1="1706.7" x2="2497.3" y1="0" y2="0"><stop offset="0" stop-color="#00e9ff"/><stop offset=".223" stop-color="#00abff"/><stop offset=".299" stop-color="#6b92ff"/><stop offset=".395" stop-color="#ff6ffd"/><stop offset=".43" stop-color="#ff50ce"/><stop offset=".473" stop-color="#ff35a6"/><stop offset=".524" stop-color="#ff2086"/><stop offset=".587" stop-color="#ff0d6b"/><stop offset=".653" stop-color="#ff0057"/><stop offset=".754" stop-color="#ff0042"/><stop offset="1" stop-color="#ff0026"/></linearGradient>
<linearGradient id="c46" gradientUnits="userSpaceOnUse" x1="1708.3" x2="2493.4" y1="0" y2="0"><stop offset="0" stop-color="#00e1ff"/><stop offset=".224" stop-color="#00a4ff"/><stop offset=".313" stop-color="#7c87ff"/><stop offset=".4" stop-color="#ff69ff"/><stop offset=".436" stop-color="#ff4bd0"/><stop offset=".479" stop-color="#ff32a8"/><stop offset=".53" stop-color="#ff1d88"/><stop offset=".594" stop-color="#ff0b6d"/><stop offset=".65" stop-color="#ff005b"/><stop offset=".759" stop-color="#ff0044"/><stop offset="1" stop-color="#ff0028"/></linearGradient>
<linearGradient id="c47" gradientUnits="userSpaceOnUse" x1="1709.9" x2="2489.5" y1="0" y2="0"><stop offset="0" stop-color="#00daff"/><stop offset=".223" stop-color="#009eff"/><stop offset=".298" stop-color="#6187ff"/><stop offset=".408" stop-color="#ff60fc"/><stop offset=".444" stop-color="#ff45cf"/><stop offset=".487" stop-color="#ff2da9"/><stop offset=".539" stop-color="#ff1a89"/><stop offset=".603" stop-color="#ff096e"/><stop offset=".649" stop-color="#ff0060"/><stop offset=".767" stop-color="#ff0046"/><stop offset="1" stop-color="#ff002a"/></linearGradient>
<linearGradient id="c48" gradientUnits="userSpaceOnUse" x1="1711.5" x2="2485.6" y1="0" y2="0"><stop offset="0" stop-color="#00d3ff"/><stop offset=".225" stop-color="#0097ff"/><stop offset=".313" stop-color="#727dff"/><stop offset=".413" stop-color="#ff5bfd"/><stop offset=".45" stop-color="#ff40d1"/><stop offset=".493" stop-color="#ff2aab"/><stop offset=".545" stop-color="#ff178b"/><stop offset=".607" stop-color="#ff0771"/><stop offset=".646" stop-color="#ff0064"/><stop offset=".77" stop-color="#ff0048"/><stop offset="1" stop-color="#ff002c"/></linearGradient>
<linearGradient id="c49" gradientUnits="userSpaceOnUse" x1="1713.1" x2="2481.7" y1="0" y2="0"><stop offset="0" stop-color="#00ccff"/><stop offset=".226" stop-color="#0191ff"/><stop offset=".32" stop-color="#7876ff"/><stop offset=".419" stop-color="#ff55fe"/><stop offset=".455" stop-color="#ff3cd2"/><stop offset=".5" stop-color="#ff26ad"/><stop offset=".552" stop-color="#ff158d"/><stop offset=".611" stop-color="#ff0674"/><stop offset=".643" stop-color="#ff0069"/><stop offset=".773" stop-color="#ff004b"/><stop offset="1" stop-color="#ff002e"/></linearGradient>
<linearGradient id="c50" gradientUnits="userSpaceOnUse" x1="1714.7" x2="2477.8" y1="0" y2="0"><stop offset="0" stop-color="#00c6ff"/><stop offset=".225" stop-color="#008cff"/><stop offset=".328" stop-color="#7d6fff"/><stop offset=".425" stop-color="#ff50ff"/><stop offset=".461" stop-color="#ff38d4"/><stop offset=".506" stop-color="#ff23ae"/><stop offset=".558" stop-color="#ff128f"/><stop offset=".619" stop-color="#ff0476"/><stop offset=".778" stop-color="#ff004d"/><stop offset="1" stop-color="#ff0030"/></linearGradient>
<linearGradient id="c51" gradientUnits="userSpaceOnUse" x1="1716.4" x2="2473.9" y1="0" y2="0"><stop offset="0" stop-color="#00c0ff"/><stop offset=".227" stop-color="#0187ff"/><stop offset=".322" stop-color="#726cff"/><stop offset=".433" stop-color="#ff49fd"/><stop offset=".47" stop-color="#ff33d3"/><stop offset=".515" stop-color="#ff1fae"/><stop offset=".565" stop-color="#ff1091"/><stop offset=".626" stop-color="#ff0278"/><stop offset=".781" stop-color="#ff004f"/><stop offset="1" stop-color="#ff0032"/></linearGradient>
<linearGradient id="c52" gradientUnits="userSpaceOnUse" x1="1718.0" x2="2470.0" y1="0" y2="0"><stop offset="0" stop-color="#00baff"/><stop offset=".226" stop-color="#0082ff"/><stop offset=".327" stop-color="#7466ff"/><stop offset=".439" stop-color="#ff44fd"/><stop offset=".476" stop-color="#ff2fd4"/><stop offset=".521" stop-color="#ff1cb0"/><stop offset=".572" stop-color="#ff0d93"/><stop offset=".633" stop-color="#ff0079"/><stop offset=".787" stop-color="#ff0052"/><stop offset="1" stop-color="#ff0035"/></linearGradient>
<linearGradient id="c53" gradientUnits="userSpaceOnUse" x1="1719.7" x2="2466.1" y1="0" y2="0"><stop offset="0" stop-color="#00b4ff"/><stop offset=".228" stop-color="#017dff"/><stop offset=".335" stop-color="#7960ff"/><stop offset=".445" stop-color="#ff3ffe"/><stop offset=".482" stop-color="#ff2bd6"/><stop offset=".525" stop-color="#ff1ab4"/><stop offset=".576" stop-color="#ff0c96"/><stop offset=".638" stop-color="#ff007c"/><stop offset=".79" stop-color="#ff0054"/><stop offset="1" stop-color="#ff0037"/></linearGradient>
<linearGradient id="c54" gradientUnits="userSpaceOnUse" x1="1721.4" x2="2462.2" y1="0" y2="0"><stop offset="0" stop-color="#00aeff"/><stop offset=".227" stop-color="#0079ff"/><stop offset=".34" stop-color="#7b5bff"/><stop offset=".451" stop-color="#ff3bff"/><stop offset=".489" stop-color="#ff28d7"/><stop offset=".532" stop-color="#ff18b5"/><stop offset=".583" stop-color="#ff0a98"/><stop offset=".643" stop-color="#ff007f"/><stop offset=".794" stop-color="#ff0057"/><stop offset="1" stop-color="#ff0039"/></linearGradient>
<linearGradient id="c55" gradientUnits="userSpaceOnUse" x1="1723.1" x2="2458.3" y1="0" y2="0"><stop offset="0" stop-color="#00a9ff"/><stop offset=".226" stop-color="#0075ff"/><stop offset=".326" stop-color="#685bff"/><stop offset=".46" stop-color="#ff35fd"/><stop offset=".498" stop-color="#ff23d6"/><stop offset=".541" stop-color="#ff14b5"/><stop offset=".626" stop-color="#ff008a"/><stop offset=".65" stop-color="#ff0080"/><stop offset=".8" stop-color="#ff0059"/><stop offset="1" stop-color="#ff003c"/></linearGradient>
<linearGradient id="c56" gradientUnits="userSpaceOnUse" x1="1724.9" x2="2454.5" y1="0" y2="0"><stop offset="0" stop-color="#00a4ff"/><stop offset=".228" stop-color="#0070ff"/><stop offset=".34" stop-color="#7354ff"/><stop offset=".466" stop-color="#ff31fd"/><stop offset=".504" stop-color="#ff20d7"/><stop offset=".548" stop-color="#ff11b7"/><stop offset=".622" stop-color="#ff0090"/><stop offset=".658" stop-color="#ff0082"/><stop offset=".803" stop-color="#ff005b"/><stop offset="1" stop-color="#ff003e"/></linearGradient>
<linearGradient id="c57" gradientUnits="userSpaceOnUse" x1="1726.7" x2="2450.6" y1="0" y2="0"><stop offset="0" stop-color="#009fff"/><stop offset=".227" stop-color="#006dff"/><stop offset=".343" stop-color="#7350ff"/><stop offset=".472" stop-color="#ff2dfe"/><stop offset=".511" stop-color="#ff1cd8"/><stop offset=".555" stop-color="#ff0fb8"/><stop offset=".619" stop-color="#ff0096"/><stop offset=".663" stop-color="#ff0085"/><stop offset=".807" stop-color="#ff005e"/><stop offset="1" stop-color="#ff0041"/></linearGradient>
<linearGradient id="c58" gradientUnits="userSpaceOnUse" x1="1728.4" x2="2446.7" y1="0" y2="0"><stop offset="0" stop-color="#009aff"/><stop offset=".228" stop-color="#0169ff"/><stop offset=".356" stop-color="#7d49ff"/><stop offset=".479" stop-color="#ff29ff"/><stop offset=".515" stop-color="#ff1adc"/><stop offset=".56" stop-color="#ff0dbb"/><stop offset=".618" stop-color="#ff009c"/><stop offset=".668" stop-color="#ff0087"/><stop offset=".81" stop-color="#ff0061"/><stop offset="1" stop-color="#ff0043"/></linearGradient>
<linearGradient id="c59" gradientUnits="userSpaceOnUse" x1="1730.2" x2="2442.8" y1="0" y2="0"><stop offset="0" stop-color="#0095ff"/><stop offset=".227" stop-color="#0065ff"/><stop offset=".356" stop-color="#7946ff"/><stop offset=".486" stop-color="#ff25ff"/><stop offset=".525" stop-color="#ff16da"/><stop offset=".567" stop-color="#ff0abc"/><stop offset=".615" stop-color="#ff00a2"/><stop offset=".674" stop-color="#ff008a"/><stop offset=".814" stop-color="#ff0063"/><stop offset="1" stop-color="#ff0046"/></linearGradient>
<linearGradient id="c60" gradientUnits="userSpaceOnUse" x1="1732.1" x2="2438.9" y1="0" y2="0"><stop offset="0" stop-color="#0091ff"/><stop offset=".229" stop-color="#0161ff"/><stop offset=".354" stop-color="#7344ff"/><stop offset=".495" stop-color="#ff20fd"/><stop offset=".535" stop-color="#ff12d9"/><stop offset=".577" stop-color="#ff07bc"/><stop offset=".611" stop-color="#ff00a9"/><stop offset=".682" stop-color="#ff008b"/><stop offset=".821" stop-color="#ff0065"/><stop offset="1" stop-color="#ff0048"/></linearGradient>
<linearGradient id="c61" gradientUnits="userSpaceOnUse" x1="1733.9" x2="2435.0" y1="0" y2="0"><stop offset="0" stop-color="#008dff"/><stop offset=".228" stop-color="#005eff"/><stop offset=".359" stop-color="#7540ff"/><stop offset=".502" stop-color="#ff1dfd"/><stop offset=".582" stop-color="#ff05bf"/><stop offset=".608" stop-color="#ff00b0"/><stop offset=".687" stop-color="#ff008e"/><stop offset=".824" stop-color="#ff0068"/><stop offset="1" stop-color="#ff004b"/></linearGradient>
<linearGradient id="c62" gradientUnits="userSpaceOnUse" x1="1735.7" x2="2431.1" y1="0" y2="0"><stop offset="0" stop-color="#0088ff"/><stop offset=".23" stop-color="#015aff"/><stop offset=".365" stop-color="#773cff"/><stop offset=".509" stop-color="#ff19fe"/><stop offset=".59" stop-color="#ff03c0"/><stop offset=".693" stop-color="#ff0090"/><stop offset=".828" stop-color="#ff006a"/><stop offset="1" stop-color="#ff004d"/></linearGradient>
<linearGradient id="c63" gradientUnits="userSpaceOnUse" x1="1737.6" x2="2427.2" y1="0" y2="0"><stop offset="0" stop-color="#0084ff"/><stop offset=".229" stop-color="#0157ff"/><stop offset=".371" stop-color="#7938ff"/><stop offset=".516" stop-color="#ff16fe"/><stop offset=".597" stop-color="#ff01c1"/><stop offset=".699" stop-color="#ff0092"/><stop offset=".832" stop-color="#ff006d"/><stop offset="1" stop-color="#ff0050"/></linearGradient>
<linearGradient id="c64" gradientUnits="userSpaceOnUse" x1="1739.5" x2="2423.3" y1="0" y2="0"><stop offset="0" stop-color="#0080ff"/><stop offset=".228" stop-color="#0055ff"/><stop offset=".374" stop-color="#7935ff"/><stop offset=".524" stop-color="#ff13ff"/><stop offset=".603" stop-color="#ff00c4"/><stop offset=".705" stop-color="#ff0095"/><stop offset=".834" stop-color="#ff0070"/><stop offset="1" stop-color="#ff0053"/></linearGradient>
<linearGradient id="c65" gradientUnits="userSpaceOnUse" x1="1741.5" x2="2419.4" y1="0" y2="0"><stop offset="0" stop-color="#007dff"/><stop offset=".23" stop-color="#0151ff"/><stop offset=".384" stop-color="#7d31ff"/><stop offset=".531" stop-color="#ff10ff"/><stop offset=".611" stop-color="#ff00c5"/><stop offset=".711" stop-color="#ff0097"/><stop offset=".838" stop-color="#ff0073"/><stop offset="1" stop-color="#ff0056"/></linearGradient>
<linearGradient id="c66" gradientUnits="userSpaceOnUse" x1="1743.4" x2="2415.5" y1="0" y2="0"><stop offset="0" stop-color="#0079ff"/><stop offset=".229" stop-color="#004fff"/><stop offset=".387" stop-color="#7c2eff"/><stop offset=".539" stop-color="#ff0cff"/><stop offset=".589" stop-color="#ff00d8"/><stop offset=".619" stop-color="#ff00c6"/><stop offset=".717" stop-color="#ff0099"/><stop offset=".842" stop-color="#ff0075"/><stop offset="1" stop-color="#ff0059"/></linearGradient>
<linearGradient id="c67" gradientUnits="userSpaceOnUse" x1="1745.4" x2="2411.6" y1="0" y2="0"><stop offset="0" stop-color="#0075ff"/><stop offset=".228" stop-color="#004cff"/><stop offset=".387" stop-color="#792cff"/><stop offset=".546" stop-color="#fe0aff"/><stop offset=".588" stop-color="#ff00df"/><stop offset=".627" stop-color="#ff00c7"/><stop offset=".723" stop-color="#ff009c"/><stop offset=".847" stop-color="#ff0078"/><stop offset="1" stop-color="#ff005c"/></linearGradient>
<linearGradient id="c68" gradientUnits="userSpaceOnUse" x1="1747.4" x2="2407.7" y1="0" y2="0"><stop offset="0" stop-color="#0072ff"/><stop offset=".23" stop-color="#0149ff"/><stop offset=".385" stop-color="#742bff"/><stop offset=".557" stop-color="#ff06fd"/><stop offset=".636" stop-color="#ff00c8"/><stop offset=".733" stop-color="#ff009d"/><stop offset=".851" stop-color="#ff007b"/><stop offset="1" stop-color="#ff005e"/></linearGradient>
<linearGradient id="c69" gradientUnits="userSpaceOnUse" x1="1749.4" x2="2403.9" y1="0" y2="0"><stop offset="0" stop-color="#006eff"/><stop offset=".229" stop-color="#0047ff"/><stop offset=".391" stop-color="#7628ff"/><stop offset=".565" stop-color="#ff03fe"/><stop offset=".645" stop-color="#ff00c9"/><stop offset=".74" stop-color="#ff009f"/><stop offset=".856" stop-color="#ff007d"/><stop offset="1" stop-color="#ff0061"/></linearGradient>
<linearGradient id="c70" gradientUnits="userSpaceOnUse" x1="1751.5" x2="2400.0" y1="0" y2="0"><stop offset="0" stop-color="#006bff"/><stop offset=".228" stop-color="#0044ff"/><stop offset=".392" stop-color="#7426ff"/><stop offset=".574" stop-color="#ff01fe"/><stop offset=".651" stop-color="#ff00cb"/><stop offset=".743" stop-color="#ff00a2"/><stop offset=".857" stop-color="#ff0081"/><stop offset="1" stop-color="#ff0065"/></linearGradient>
<linearGradient id="c71" gradientUnits="userSpaceOnUse" x1="1753.6" x2="2396.1" y1="0" y2="0"><stop offset="0" stop-color="#0068ff"/><stop offset=".23" stop-color="#0141ff"/><stop offset=".402" stop-color="#7822ff"/><stop offset=".582" stop-color="#ff00fe"/><stop offset=".657" stop-color="#ff00cd"/><stop offset=".75" stop-color="#ff00a5"/><stop offset=".862" stop-color="#ff0083"/><stop offset="1" stop-color="#ff0068"/></linearGradient>
<linearGradient id="c72" gradientUnits="userSpaceOnUse" x1="1755.7" x2="2392.2" y1="0" y2="0"><stop offset="0" stop-color="#0065ff"/><stop offset=".229" stop-color="#013fff"/><stop offset=".405" stop-color="#7720ff"/><stop offset=".591" stop-color="#ff00fe"/><stop offset=".666" stop-color="#ff00ce"/><stop offset=".757" stop-color="#ff00a7"/><stop offset=".867" stop-color="#ff0086"/><stop offset="1" stop-color="#ff006b"/></linearGradient>
<linearGradient id="c73" gradientUnits="userSpaceOnUse" x1="1757.8" x2="2388.3" y1="0" y2="0"><stop offset="0" stop-color="#0062ff"/><stop offset=".228" stop-color="#003dff"/><stop offset=".4" stop-color="#711fff"/><stop offset=".561" stop-color="#e401ff"/><stop offset=".6" stop-color="#ff00fe"/><stop offset=".676" stop-color="#ff00cf"/><stop offset=".765" stop-color="#ff00a9"/><stop offset=".872" stop-color="#ff0089"/><stop offset="1" stop-color="#ff006e"/></linearGradient>
<linearGradient id="c74" gradientUnits="userSpaceOnUse" x1="1759.9" x2="2384.4" y1="0" y2="0"><stop offset="0" stop-color="#005fff"/><stop offset=".227" stop-color="#003bff"/><stop offset=".391" stop-color="#681fff"/><stop offset=".557" stop-color="#db00ff"/><stop offset=".609" stop-color="#ff00fe"/><stop offset=".682" stop-color="#ff00d1"/><stop offset=".769" stop-color="#ff00ac"/><stop offset=".874" stop-color="#ff008c"/><stop offset="1" stop-color="#ff0071"/></linearGradient>
<linearGradient id="c75" gradientUnits="userSpaceOnUse" x1="1762.1" x2="2380.5" y1="0" y2="0"><stop offset="0" stop-color="#005cff"/><stop offset=".23" stop-color="#0139ff"/><stop offset=".553" stop-color="#d200ff"/><stop offset=".618" stop-color="#ff00fe"/><stop offset=".689" stop-color="#ff00d3"/><stop offset=".776" stop-color="#ff00ae"/><stop offset=".88" stop-color="#ff008f"/><stop offset="1" stop-color="#ff0075"/></linearGradient>
<linearGradient id="c76" gradientUnits="userSpaceOnUse" x1="1764.3" x2="2376.6" y1="0" y2="0"><stop offset="0" stop-color="#0059ff"/><stop offset=".229" stop-color="#0137ff"/><stop offset=".549" stop-color="#ca00ff"/><stop offset=".627" stop-color="#ff00fe"/><stop offset=".699" stop-color="#ff00d4"/><stop offset=".784" stop-color="#ff00b0"/><stop offset=".882" stop-color="#ff0092"/><stop offset="1" stop-color="#ff0078"/></linearGradient>
<linearGradient id="c77" gradientUnits="userSpaceOnUse" x1="1766.5" x2="2372.7" y1="0" y2="0"><stop offset="0" stop-color="#0056ff"/><stop offset=".228" stop-color="#0035ff"/><stop offset=".544" stop-color="#c200ff"/><stop offset=".637" stop-color="#ff00fe"/><stop offset=".706" stop-color="#ff00d6"/><stop offset=".788" stop-color="#ff00b3"/><stop offset=".884" stop-color="#ff0096"/><stop offset="1" stop-color="#ff007c"/></linearGradient>
<linearGradient id="c78" gradientUnits="userSpaceOnUse" x1="1768.7" x2="2368.8" y1="0" y2="0"><stop offset="0" stop-color="#0053ff"/><stop offset=".227" stop-color="#0033ff"/><stop offset=".54" stop-color="#ba00ff"/><stop offset=".647" stop-color="#ff00fe"/><stop offset=".717" stop-color="#ff00d6"/><stop offset=".797" stop-color="#ff00b5"/><stop offset=".89" stop-color="#ff0098"/><stop offset="1" stop-color="#ff007f"/></linearGradient>
<linearGradient id="c79" gradientUnits="userSpaceOnUse" x1="1771.0" x2="2364.9" y1="0" y2="0"><stop offset="0" stop-color="#0051ff"/><stop offset=".229" stop-color="#0130ff"/><stop offset=".535" stop-color="#b300ff"/><stop offset=".657" stop-color="#ff00fe"/><stop offset=".724" stop-color="#ff00d8"/><stop offset=".805" stop-color="#ff00b7"/><stop offset="1" stop-color="#ff0083"/></linearGradient>
<linearGradient id="c80" gradientUnits="userSpaceOnUse" x1="1773.2" x2="2361.0" y1="0" y2="0"><stop offset="0" stop-color="#004eff"/><stop offset=".228" stop-color="#012fff"/><stop offset=".531" stop-color="#ac00ff"/><stop offset=".667" stop-color="#ff00fe"/><stop offset=".735" stop-color="#ff00d9"/><stop offset=".81" stop-color="#ff00ba"/><stop offset="1" stop-color="#ff0087"/></linearGradient>
<linearGradient id="c81" gradientUnits="userSpaceOnUse" x1="1775.5" x2="2357.1" y1="0" y2="0"><stop offset="0" stop-color="#004cff"/><stop offset=".227" stop-color="#012dff"/><stop offset=".526" stop-color="#a500ff"/><stop offset=".677" stop-color="#ff00fe"/><stop offset=".743" stop-color="#ff00db"/><stop offset=".818" stop-color="#ff00bc"/><stop offset="1" stop-color="#ff008a"/></linearGradient>
<linearGradient id="c82" gradientUnits="userSpaceOnUse" x1="1777.8" x2="2353.2" y1="0" y2="0"><stop offset="0" stop-color="#0049ff"/><stop offset=".226" stop-color="#002bff"/><stop offset=".521" stop-color="#9f00ff"/><stop offset=".688" stop-color="#ff00fe"/><stop offset=".751" stop-color="#ff00dd"/><stop offset=".824" stop-color="#ff00bf"/><stop offset="1" stop-color="#ff008e"/></linearGradient>
<linearGradient id="c83" gradientUnits="userSpaceOnUse" x1="1780.1" x2="2349.4" y1="0" y2="0"><stop offset="0" stop-color="#0047ff"/><stop offset=".225" stop-color="#002aff"/><stop offset=".516" stop-color="#9800ff"/><stop offset=".696" stop-color="#fe00ff"/><stop offset=".833" stop-color="#ff00c1"/><stop offset="1" stop-color="#ff0092"/></linearGradient>
<linearGradient id="c84" gradientUnits="userSpaceOnUse" x1="1782.4" x2="2345.5" y1="0" y2="0"><stop offset="0" stop-color="#0045ff"/><stop offset=".224" stop-color="#0028ff"/><stop offset=".511" stop-color="#9200ff"/><stop offset=".707" stop-color="#fe00ff"/><stop offset=".838" stop-color="#ff00c4"/><stop offset="1" stop-color="#ff0096"/></linearGradient>
<linearGradient id="c85" gradientUnits="userSpaceOnUse" x1="1784.7" x2="2341.6" y1="0" y2="0"><stop offset="0" stop-color="#0042ff"/><stop offset=".226" stop-color="#0126ff"/><stop offset=".506" stop-color="#8c00ff"/><stop offset=".718" stop-color="#ff00ff"/><stop offset=".844" stop-color="#ff00c7"/><stop offset="1" stop-color="#ff009a"/></linearGradient>
<linearGradient id="c86" gradientUnits="userSpaceOnUse" x1="1787.1" x2="2337.7" y1="0" y2="0"><stop offset="0" stop-color="#0040ff"/><stop offset=".225" stop-color="#0125ff"/><stop offset=".501" stop-color="#8600ff"/><stop offset=".73" stop-color="#ff00ff"/><stop offset=".85" stop-color="#ff00ca"/><stop offset="1" stop-color="#ff009e"/></linearGradient>
<linearGradient id="c87" gradientUnits="userSpaceOnUse" x1="1789.4" x2="2333.8" y1="0" y2="0"><stop offset="0" stop-color="#003eff"/><stop offset=".224" stop-color="#0123ff"/><stop offset=".496" stop-color="#8000ff"/><stop offset=".742" stop-color="#ff00ff"/><stop offset=".86" stop-color="#ff00cc"/><stop offset="1" stop-color="#ff00a3"/></linearGradient>
<linearGradient id="c88" gradientUnits="userSpaceOnUse" x1="1791.8" x2="2329.9" y1="0" y2="0"><stop offset="0" stop-color="#003cff"/><stop offset=".223" stop-color="#0022ff"/><stop offset=".491" stop-color="#7b00ff"/><stop offset=".754" stop-color="#ff00ff"/><stop offset=".866" stop-color="#ff00cf"/><stop offset="1" stop-color="#ff00a7"/></linearGradient>
<linearGradient id="c89" gradientUnits="userSpaceOnUse" x1="1794.2" x2="2326.0" y1="0" y2="0"><stop offset="0" stop-color="#003aff"/><stop offset=".222" stop-color="#0020ff"/><stop offset=".481" stop-color="#7400ff"/><stop offset=".767" stop-color="#ff00ff"/><stop offset=".872" stop-color="#ff00d2"/><stop offset="1" stop-color="#ff00ac"/></linearGradient>
<linearGradient id="c90" gradientUnits="userSpaceOnUse" x1="1796.6" x2="2322.1" y1="0" y2="0"><stop offset="0" stop-color="#0038ff"/><stop offset=".221" stop-color="#001fff"/><stop offset=".476" stop-color="#6f00ff"/><stop offset=".776" stop-color="#fe00ff"/><stop offset=".887" stop-color="#ff00d2"/><stop offset="1" stop-color="#ff00b0"/></linearGradient>
<linearGradient id="c91" gradientUnits="userSpaceOnUse" x1="1799.0" x2="2318.2" y1="0" y2="0"><stop offset="0" stop-color="#0036ff"/><stop offset=".22" stop-color="#001eff"/><stop offset=".47" stop-color="#6a00ff"/><stop offset=".79" stop-color="#fe00ff"/><stop offset=".894" stop-color="#ff00d5"/><stop offset="1" stop-color="#ff00b5"/></linearGradient>
<linearGradient id="c92" gradientUnits="userSpaceOnUse" x1="1801.4" x2="2314.3" y1="0" y2="0"><stop offset="0" stop-color="#0034ff"/><stop offset=".222" stop-color="#011cff"/><stop offset=".464" stop-color="#6500ff"/><stop offset=".803" stop-color="#fe00ff"/><stop offset=".901" stop-color="#ff00d8"/><stop offset="1" stop-color="#ff00ba"/></linearGradient>
<linearGradient id="c93" gradientUnits="userSpaceOnUse" x1="1803.8" x2="2310.4" y1="0" y2="0"><stop offset="0" stop-color="#0032ff"/><stop offset=".221" stop-color="#011aff"/><stop offset=".458" stop-color="#6000ff"/><stop offset=".817" stop-color="#fe00ff"/><stop offset="1" stop-color="#ff00be"/></linearGradient>
<linearGradient id="c94" gradientUnits="userSpaceOnUse" x1="1806.3" x2="2306.5" y1="0" y2="0"><stop offset="0" stop-color="#0030ff"/><stop offset=".22" stop-color="#0119ff"/><stop offset=".452" stop-color="#5c00ff"/><stop offset=".832" stop-color="#fe00ff"/><stop offset="1" stop-color="#ff00c3"/></linearGradient>
<linearGradient id="c95" gradientUnits="userSpaceOnUse" x1="1808.7" x2="2302.6" y1="0" y2="0"><stop offset="0" stop-color="#002eff"/><stop offset=".219" stop-color="#0118ff"/><stop offset=".441" stop-color="#5600ff"/><stop offset=".846" stop-color="#ff00ff"/><stop offset="1" stop-color="#ff00c9"/></linearGradient>
<linearGradient id="c96" gradientUnits="userSpaceOnUse" x1="1811.2" x2="2298.8" y1="0" y2="0"><stop offset="0" stop-color="#002cff"/><stop offset=".217" stop-color="#0017ff"/><stop offset=".435" stop-color="#5100ff"/><stop offset=".861" stop-color="#ff00ff"/><stop offset="1" stop-color="#ff00ce"/></linearGradient>
<linearGradient id="c97" gradientUnits="userSpaceOnUse" x1="1813.7" x2="2294.9" y1="0" y2="0"><stop offset="0" stop-color="#002aff"/><stop offset=".216" stop-color="#0016ff"/><stop offset=".428" stop-color="#4d00ff"/><stop offset=".877" stop-color="#ff00ff"/><stop offset="1" stop-color="#ff00d3"/></linearGradient>
<linearGradient id="c98" gradientUnits="userSpaceOnUse" x1="1816.2" x2="2291.0" y1="0" y2="0"><stop offset="0" stop-color="#0029ff"/><stop offset=".215" stop-color="#0014ff"/><stop offset=".421" stop-color="#4900ff"/><stop offset=".889" stop-color="#fe00ff"/><stop offset="1" stop-color="#ff00d9"/></linearGradient>
<linearGradient id="c99" gradientUnits="userSpaceOnUse" x1="1818.7" x2="2287.1" y1="0" y2="0"><stop offset="0" stop-color="#0027ff"/><stop offset=".214" stop-color="#0013ff"/><stop offset=".414" stop-color="#4500ff"/><stop offset=".905" stop-color="#fe00ff"/><stop offset="1" stop-color="#ff00de"/></linearGradient>
<linearGradient id="c100" gradientUnits="userSpaceOnUse" x1="1821.2" x2="2283.2" y1="0" y2="0"><stop offset="0" stop-color="#0025ff"/><stop offset=".212" stop-color="#0012ff"/><stop offset=".407" stop-color="#4200ff"/><stop offset=".922" stop-color="#fe00ff"/><stop offset="1" stop-color="#ff00e4"/></linearGradient>
<linearGradient id="c101" gradientUnits="userSpaceOnUse" x1="1823.8" x2="2279.3" y1="0" y2="0"><stop offset="0" stop-color="#0024ff"/><stop offset=".211" stop-color="#0011ff"/><stop offset=".395" stop-color="#3c00ff"/><stop offset=".94" stop-color="#ff00ff"/><stop offset="1" stop-color="#ff00ea"/></linearGradient>
<linearGradient id="c102" gradientUnits="userSpaceOnUse" x1="1826.4" x2="2275.4" y1="0" y2="0"><stop offset="0" stop-color="#0022ff"/><stop offset=".209" stop-color="#0010ff"/><stop offset=".387" stop-color="#3900ff"/><stop offset=".958" stop-color="#ff00ff"/><stop offset="1" stop-color="#ff00f0"/></linearGradient>
<linearGradient id="c103" gradientUnits="userSpaceOnUse" x1="1828.9" x2="2271.5" y1="0" y2="0"><stop offset="0" stop-color="#0020ff"/><stop offset=".208" stop-color="#000fff"/><stop offset=".38" stop-color="#3500ff"/><stop offset=".972" stop-color="#fe00ff"/><stop offset="1" stop-color="#ff00f6"/></linearGradient>
<linearGradient id="c104" gradientUnits="userSpaceOnUse" x1="1831.6" x2="2267.6" y1="0" y2="0"><stop offset="0" stop-color="#001fff"/><stop offset=".206" stop-color="#000eff"/><stop offset=".372" stop-color="#3200ff"/><stop offset="1" stop-color="#ff00fd"/></linearGradient>
<linearGradient id="c105" gradientUnits="userSpaceOnUse" x1="1834.2" x2="2263.7" y1="0" y2="0"><stop offset="0" stop-color="#001dff"/><stop offset=".205" stop-color="#000dff"/><stop offset=".359" stop-color="#2d00ff"/><stop offset="1" stop-color="#fb00ff"/></linearGradient>
<linearGradient id="c106" gradientUnits="userSpaceOnUse" x1="1836.8" x2="2259.8" y1="0" y2="0"><stop offset="0" stop-color="#001cff"/><stop offset=".203" stop-color="#000cff"/><stop offset=".35" stop-color="#2a00ff"/><stop offset="1" stop-color="#f500ff"/></linearGradient>
<linearGradient id="c107" gradientUnits="userSpaceOnUse" x1="1839.5" x2="2255.9" y1="0" y2="0"><stop offset="0" stop-color="#001aff"/><stop offset=".202" stop-color="#000bff"/><stop offset=".341" stop-color="#2700ff"/><stop offset="1" stop-color="#ee00ff"/></linearGradient>
<linearGradient id="c108" gradientUnits="userSpaceOnUse" x1="1842.2" x2="2252.0" y1="0" y2="0"><stop offset="0" stop-color="#0019ff"/><stop offset=".2" stop-color="#000aff"/><stop offset=".327" stop-color="#2200ff"/><stop offset="1" stop-color="#e800ff"/></linearGradient>
<linearGradient id="c109" gradientUnits="userSpaceOnUse" x1="1844.9" x2="2248.2" y1="0" y2="0"><stop offset="0" stop-color="#0017ff"/><stop offset=".198" stop-color="#0009ff"/><stop offset=".317" stop-color="#1f00ff"/><stop offset="1" stop-color="#e200ff"/></linearGradient>
<linearGradient id="c110" gradientUnits="userSpaceOnUse" x1="1847.7" x2="2244.3" y1="0" y2="0"><stop offset="0" stop-color="#0016ff"/><stop offset=".197" stop-color="#0008ff"/><stop offset=".308" stop-color="#1d00ff"/><stop offset="1" stop-color="#dd00ff"/></linearGradient>
<linearGradient id="c111" gradientUnits="userSpaceOnUse" x1="1850.5" x2="2240.4" y1="0" y2="0"><stop offset="0" stop-color="#0015ff"/><stop offset=".195" stop-color="#0007ff"/><stop offset=".298" stop-color="#1a00ff"/><stop offset="1" stop-color="#d700ff"/></linearGradient>
<linearGradient id="c112" gradientUnits="userSpaceOnUse" x1="1853.3" x2="2236.5" y1="0" y2="0"><stop offset="0" stop-color="#0013ff"/><stop offset=".193" stop-color="#0006ff"/><stop offset=".282" stop-color="#1600ff"/><stop offset="1" stop-color="#d100ff"/></linearGradient>
<linearGradient id="c113" gradientUnits="userSpaceOnUse" x1="1856.1" x2="2232.6" y1="0" y2="0"><stop offset="0" stop-color="#0012ff"/><stop offset=".191" stop-color="#0005ff"/><stop offset=".271" stop-color="#1300ff"/><stop offset="1" stop-color="#cc00ff"/></linearGradient>
<linearGradient id="c114" gradientUnits="userSpaceOnUse" x1="1859.0" x2="2228.7" y1="0" y2="0"><stop offset="0" stop-color="#0011ff"/><stop offset=".189" stop-color="#0004ff"/><stop offset="1" stop-color="#c700ff"/></linearGradient>
<linearGradient id="c115" gradientUnits="userSpaceOnUse" x1="1861.9" x2="2224.8" y1="0" y2="0"><stop offset="0" stop-color="#000fff"/><stop offset=".187" stop-color="#0103ff"/><stop offset="1" stop-color="#c200ff"/></linearGradient>
<linearGradient id="c116" gradientUnits="userSpaceOnUse" x1="1864.8" x2="2220.9" y1="0" y2="0"><stop offset="0" stop-color="#000eff"/><stop offset=".185" stop-color="#0103ff"/><stop offset="1" stop-color="#bd00ff"/></linearGradient>
<linearGradient id="c117" gradientUnits="userSpaceOnUse" x1="1867.7" x2="2217.0" y1="0" y2="0"><stop offset="0" stop-color="#000dff"/><stop offset=".183" stop-color="#0102ff"/><stop offset="1" stop-color="#b800ff"/></linearGradient>
<linearGradient id="c118" gradientUnits="userSpaceOnUse" x1="1870.7" x2="2213.1" y1="0" y2="0"><stop offset="0" stop-color="#000bff"/><stop offset=".175" stop-color="#0001ff"/><stop offset="1" stop-color="#b300ff"/></linearGradient>
<linearGradient id="c119" gradientUnits="userSpaceOnUse" x1="1873.7" x2="2209.2" y1="0" y2="0"><stop offset="0" stop-color="#000aff"/><stop offset=".173" stop-color="#0000ff"/><stop offset="1" stop-color="#ae00ff"/></linearGradient>
<linearGradient id="c120" gradientUnits="userSpaceOnUse" x1="1876.8" x2="2205.3" y1="0" y2="0"><stop offset="0" stop-color="#0009ff"/><stop offset=".17" stop-color="#0000ff"/><stop offset="1" stop-color="#a900ff"/></linearGradient>
<linearGradient id="c121" gradientUnits="userSpaceOnUse" x1="1879.9" x2="2201.4" y1="0" y2="0"><stop offset="0" stop-color="#0008ff"/><stop offset=".168" stop-color="#0100ff"/><stop offset="1" stop-color="#a500ff"/></linearGradient>
<linearGradient id="c122" gradientUnits="userSpaceOnUse" x1="1883.0" x2="2197.5" y1="0" y2="0"><stop offset="0" stop-color="#0006ff"/><stop offset=".165" stop-color="#0100ff"/><stop offset="1" stop-color="#a100ff"/></linearGradient>
<linearGradient id="c123" gradientUnits="userSpaceOnUse" x1="1886.1" x2="2193.7" y1="0" y2="0"><stop offset="0" stop-color="#0005ff"/><stop offset=".156" stop-color="#0000ff"/><stop offset="1" stop-color="#9c00ff"/></linearGradient>
<linearGradient id="c124" gradientUnits="userSpaceOnUse" x1="1889.3" x2="2189.8" y1="0" y2="0"><stop offset="0" stop-color="#0004ff"/><stop offset=".153" stop-color="#0000ff"/><stop offset="1" stop-color="#9800ff"/></linearGradient>
<linearGradient id="c125" gradientUnits="userSpaceOnUse" x1="1892.5" x2="2185.9" y1="0" y2="0"><stop offset="0" stop-color="#0003ff"/><stop offset=".15" stop-color="#0100ff"/><stop offset="1" stop-color="#9400ff"/></linearGradient>
<linearGradient id="c126" gradientUnits="userSpaceOnUse" x1="1895.7" x2="2182.0" y1="0" y2="0"><stop offset="0" stop-color="#0002ff"/><stop offset=".147" stop-color="#0100ff"/><stop offset="1" stop-color="#9000ff"/></linearGradient>
<linearGradient id="c127" gradientUnits="userSpaceOnUse" x1="1899.0" x2="2178.1" y1="0" y2="0"><stop offset="0" stop-color="#0000ff"/><stop offset=".136" stop-color="#0000ff"/><stop offset="1" stop-color="#8c00ff"/></linearGradient>
<linearGradient id="c128" gradientUnits="userSpaceOnUse" x1="1902.4" x2="2174.2" y1="0" y2="0"><stop offset="0" stop-color="#0000ff"/><stop offset=".132" stop-color="#0100ff"/><stop offset="1" stop-color="#8800ff"/></linearGradient>
<linearGradient id="c129" gradientUnits="userSpaceOnUse" x1="1905.7" x2="2170.3" y1="0" y2="0"><stop offset="0" stop-color="#0000ff"/><stop offset=".121" stop-color="#0000ff"/><stop offset="1" stop-color="#8400ff"/></linearGradient>
<linearGradient id="c130" gradientUnits="userSpaceOnUse" x1="1909.2" x2="2166.4" y1="0" y2="0"><stop offset="0" stop-color="#0000ff"/><stop offset=".117" stop-color="#0000ff"/><stop offset="1" stop-color="#8000ff"/></linearGradient>
<linearGradient id="c131" gradientUnits="userSpaceOnUse" x1="1912.7" x2="2162.5" y1="0" y2="0"><stop offset="0" stop-color="#0000ff"/><stop offset=".112" stop-color="#0100ff"/><stop offset="1" stop-color="#7c00ff"/></linearGradient>
<linearGradient id="c132" gradientUnits="userSpaceOnUse" x1="1916.2" x2="2158.6" y1="0" y2="0"><stop offset="0" stop-color="#0000ff"/><stop offset=".099" stop-color="#0000ff"/><stop offset="1" stop-color="#7900ff"/></linearGradient>
<linearGradient id="c133" gradientUnits="userSpaceOnUse" x1="1919.9" x2="2154.7" y1="0" y2="0"><stop offset="0" stop-color="#0000ff"/><stop offset=".094" stop-color="#0100ff"/><stop offset="1" stop-color="#7500ff"/></linearGradient>
<linearGradient id="c134" gradientUnits="userSpaceOnUse" x1="1923.6" x2="2150.8" y1="0" y2="0"><stop offset="0" stop-color="#0000ff"/><stop offset=".079" stop-color="#0000ff"/><stop offset="1" stop-color="#7200ff"/></linearGradient>
<linearGradient id="c135" gradientUnits="userSpaceOnUse" x1="1927.5" x2="2146.9" y1="0" y2="0"><stop offset="0" stop-color="#0000ff"/><stop offset=".073" stop-color="#0100ff"/><stop offset="1" stop-color="#6e00ff"/></linearGradient>
<linearGradient id="c136" gradientUnits="userSpaceOnUse" x1="1931.4" x2="2143.1" y1="0" y2="0"><stop offset="0" stop-color="#0000ff"/><stop offset=".057" stop-color="#0000ff"/><stop offset="1" stop-color="#6b00ff"/></linearGradient>
<linearGradient id="c137" gradientUnits="userSpaceOnUse" x1="1935.4" x2="2139.2" y1="0" y2="0"><stop offset="0" stop-color="#0000ff"/><stop offset="1" stop-color="#6700ff"/></linearGradient>
<linearGradient id="c138" gradientUnits="userSpaceOnUse" x1="1939.5" x2="2135.3" y1="0" y2="0"><stop offset="0" stop-color="#0000ff"/><stop offset="1" stop-color="#6400ff"/></linearGradient>
<linearGradient id="c139" gradientUnits="userSpaceOnUse" x1="1943.8" x2="2131.4" y1="0" y2="0"><stop offset="0" stop-color="#0000ff"/><stop offset="1" stop-color="#6100ff"/></linearGradient>
<linearGradient id="c140" gradientUnits="userSpaceOnUse" x1="1948.0" x2="2127.5" y1="0" y2="0"><stop offset="0" stop-color="#0200ff"/><stop offset="1" stop-color="#5e00ff"/></linearGradient>
<linearGradient id="c141" gradientUnits="userSpaceOnUse" x1="1952.4" x2="2123.6" y1="0" y2="0"><stop offset="0" stop-color="#0300ff"/><stop offset="1" stop-color="#5b00ff"/></linearGradient>
<linearGradient id="c142" gradientUnits="userSpaceOnUse" x1="1956.8" x2="2119.7" y1="0" y2="0"><stop offset="0" stop-color="#0500ff"/><stop offset="1" stop-color="#5800ff"/></linearGradient>
<linearGradient id="c143" gradientUnits="userSpaceOnUse" x1="1961.3" x2="2115.8" y1="0" y2="0"><stop offset="0" stop-color="#0700ff"/><stop offset="1" stop-color="#5500ff"/></linearGradient>
<linearGradient id="c144" gradientUnits="userSpaceOnUse" x1="1965.8" x2="2111.9" y1="0" y2="0"><stop offset="0" stop-color="#0900ff"/><stop offset="1" stop-color="#5200ff"/></linearGradient>
<linearGradient id="c145" gradientUnits="userSpaceOnUse" x1="1970.5" x2="2108.0" y1="0" y2="0"><stop offset="0" stop-color="#0b00ff"/><stop offset="1" stop-color="#4f00ff"/></linearGradient>
<linearGradient id="c146" gradientUnits="userSpaceOnUse" x1="1975.3" x2="2104.1" y1="0" y2="0"><stop offset="0" stop-color="#0d00ff"/><stop offset="1" stop-color="#4c00ff"/></linearGradient>
<linearGradient id="c147" gradientUnits="userSpaceOnUse" x1="1980.1" x2="2100.2" y1="0" y2="0"><stop offset="0" stop-color="#0e00ff"/><stop offset="1" stop-color="#4900ff"/></linearGradient>
<linearGradient id="c148" gradientUnits="userSpaceOnUse" x1="1984.9" x2="2096.3" y1="0" y2="0"><stop offset="0" stop-color="#1000ff"/><stop offset="1" stop-color="#4600ff"/></linearGradient>
<linearGradient id="c149" gradientUnits="userSpaceOnUse" x1="1989.8" x2="2092.5" y1="0" y2="0"><stop offset="0" stop-color="#1200ff"/><stop offset="1" stop-color="#4300ff"/></linearGradient>
<linearGradient id="c150" gradientUnits="userSpaceOnUse" x1="1994.7" x2="2088.6" y1="0" y2="0"><stop offset="0" stop-color="#1400ff"/><stop offset="1" stop-color="#4100ff"/></linearGradient>
<linearGradient id="c151" gradientUnits="userSpaceOnUse" x1="1999.5" x2="2084.7" y1="0" y2="0"><stop offset="0" stop-color="#1600ff"/><stop offset="1" stop-color="#3e00ff"/></linearGradient>
<linearGradient id="c152" gradientUnits="userSpaceOnUse" x1="2004.4" x2="2080.8" y1="0" y2="0"><stop offset="0" stop-color="#1800ff"/><stop offset="1" stop-color="#3c00ff"/></linearGradient>
<linearGradient id="c153" gradientUnits="userSpaceOnUse" x1="2009.2" x2="2076.9" y1="0" y2="0"><stop offset="0" stop-color="#1900ff"/><stop offset="1" stop-color="#3900ff"/></linearGradient>
<linearGradient id="c154" gradientUnits="userSpaceOnUse" x1="2013.9" x2="2073.0" y1="0" y2="0"><stop offset="0" stop-color="#1b00ff"/><stop offset="1" stop-color="#3600ff"/></linearGradient>
<linearGradient id="c155" gradientUnits="userSpaceOnUse" x1="2018.6" x2="2069.1" y1="0" y2="0"><stop offset="0" stop-color="#1d00ff"/><stop offset="1" stop-color="#3400ff"/></linearGradient>
<linearGradient id="c156" gradientUnits="userSpaceOnUse" x1="2023.4" x2="2065.2" y1="0" y2="0"><stop offset="0" stop-color="#1e00ff"/><stop offset="1" stop-color="#3200ff"/></linearGradient>
<linearGradient id="c157" gradientUnits="userSpaceOnUse" x1="2028.4" x2="2061.3" y1="0" y2="0"><stop offset="0" stop-color="#2000ff"/><stop offset="1" stop-color="#2f00ff"/></linearGradient>
<linearGradient id="c158" gradientUnits="userSpaceOnUse" x1="2033.8" x2="2057.3" y1="0" y2="0"><stop offset="0" stop-color="#2200ff"/><stop offset="1" stop-color="#2d00ff"/></linearGradient>
<clipPath id="cplot"><rect x="1679.7" y="291.7" width="865.1" height="664.6"/></clipPath>
<clipPath id="cloc"><path d="M2050.0 934.9 L2048.8 935.9 L2047.6 936.6 L2046.3 936.9 L2045.0 936.9 L2043.7 936.5 L2042.3 935.8 L2040.0 934.3 L2039.3 933.8 L2038.6 933.3 L2037.8 932.6 L2037.0 932.0 L2036.0 931.2 L2035.1 930.5 L2034.0 929.6 L2032.9 928.7 L2031.7 927.8 L2030.5 926.8 L2029.3 925.8 L2027.9 924.7 L2026.6 923.5 L2025.2 922.3 L2023.7 921.0 L2022.2 919.7 L2020.6 918.4 L2019.0 917.0 L2017.3 915.6 L2015.6 914.1 L2013.8 912.6 L2011.9 911.1 L2009.9 909.4 L2007.8 907.7 L2005.6 905.9 L2003.3 904.0 L2000.9 902.0 L1998.4 900.0 L1995.8 897.9 L1993.2 895.7 L1990.5 893.5 L1987.7 891.2 L1984.9 888.9 L1982.0 886.4 L1979.0 883.9 L1975.8 881.2 L1972.6 878.4 L1969.2 875.4 L1965.7 872.3 L1962.1 869.1 L1958.4 865.7 L1954.6 862.2 L1950.8 858.6 L1946.8 854.8 L1942.8 850.9 L1938.6 846.7 L1934.2 842.2 L1929.6 837.4 L1924.8 832.1 L1919.6 826.3 L1914.2 820.1 L1908.6 813.4 L1902.7 806.3 L1896.7 798.8 L1890.4 790.8 L1884.0 782.5 L1877.4 773.8 L1870.7 764.7 L1863.8 755.1 L1856.9 745.2 L1849.8 734.9 L1842.6 724.1 L1835.3 712.9 L1827.9 701.4 L1820.4 689.5 L1813.0 677.4 L1805.5 665.1 L1798.0 652.5 L1790.6 639.9 L1783.2 627.1 L1776.0 614.3 L1769.0 601.4 L1762.1 588.6 L1755.6 575.8 L1749.3 563.1 L1743.3 550.5 L1737.6 538.1 L1732.2 525.9 L1727.0 513.9 L1722.2 502.2 L1717.6 490.8 L1713.2 479.7 L1709.2 469.1 L1705.5 458.8 L1702.0 449.0 L1698.9 439.5 L1696.0 430.6 L1693.5 422.0 L1691.2 414.0 L1689.2 406.3 L1687.5 399.1 L1686.1 392.3 L1684.9 385.8 L1683.9 379.8 L1683.2 374.1 L1682.6 368.7 L1682.3 363.7 L1682.2 358.9 L1682.2 354.5 L1682.5 350.2 L1682.9 346.3 L1683.6 342.6 L1684.4 339.1 L1685.3 335.8 L1686.5 332.8 L1687.8 330.0 L1689.2 327.3 L1690.8 324.9 L1692.6 322.7 L1694.5 320.7 L1696.5 318.8 L1698.6 317.2 L1700.8 315.7 L1703.2 314.4 L1705.6 313.2 L1708.2 312.2 L1710.8 311.3 L1713.6 310.6 L1716.4 309.9 L1719.2 309.4 L1722.2 308.9 L1725.2 308.6 L1728.3 308.3 L1731.4 308.0 L1734.6 307.8 L1737.8 307.7 L1741.0 307.5 L1744.3 307.4 L1747.6 307.4 L1750.9 307.3 L1754.1 307.3 L1757.4 307.3 L1760.7 307.3 L1764.0 307.3 L1767.3 307.4 L1770.6 307.5 L1774.0 307.6 L1777.4 307.7 L1780.8 307.8 L1784.2 308.0 L1787.7 308.1 L1791.2 308.3 L1794.8 308.5 L1798.4 308.8 L1802.0 309.0 L1805.7 309.3 L1809.5 309.5 L1813.3 309.8 L1817.1 310.1 L1821.0 310.5 L1825.0 310.8 L1829.0 311.1 L1833.0 311.5 L1837.2 311.9 L1841.4 312.3 L1845.6 312.7 L1849.9 313.1 L1854.3 313.5 L1858.8 314.0 L1863.3 314.4 L1867.9 314.9 L1872.6 315.4 L1877.3 315.9 L1882.2 316.4 L1887.1 316.9 L1892.1 317.5 L1897.2 318.0 L1902.4 318.6 L1907.6 319.2 L1913.0 319.7 L1918.4 320.4 L1923.9 321.0 L1929.5 321.6 L1935.2 322.2 L1941.0 322.9 L1946.9 323.5 L1952.9 324.2 L1959.0 324.9 L1965.1 325.6 L1971.4 326.3 L1977.8 327.0 L1984.2 327.8 L1990.8 328.5 L1997.5 329.3 L2004.2 330.1 L2011.0 330.8 L2018.0 331.6 L2025.0 332.4 L2032.2 333.3 L2039.4 334.1 L2046.7 334.9 L2054.2 335.8 L2061.7 336.7 L2069.3 337.5 L2077.0 338.4 L2084.8 339.3 L2092.6 340.2 L2100.5 341.1 L2108.6 342.0 L2116.6 343.0 L2124.8 343.9 L2133.0 344.8 L2141.3 345.8 L2149.6 346.7 L2158.0 347.7 L2166.5 348.7 L2174.9 349.6 L2183.4 350.6 L2191.9 351.6 L2200.3 352.6 L2208.7 353.5 L2217.0 354.5 L2225.3 355.4 L2233.5 356.4 L2241.6 357.3 L2249.8 358.3 L2257.9 359.2 L2266.0 360.1 L2274.1 361.1 L2282.2 362.0 L2290.2 362.9 L2298.1 363.8 L2305.9 364.7 L2313.6 365.6 L2321.1 366.5 L2328.5 367.3 L2335.7 368.1 L2342.8 368.9 L2349.8 369.7 L2356.6 370.5 L2363.3 371.3 L2369.9 372.0 L2376.4 372.8 L2382.7 373.5 L2388.8 374.2 L2394.8 374.9 L2400.7 375.6 L2406.3 376.3 L2411.9 376.9 L2417.2 377.5 L2422.5 378.1 L2427.5 378.7 L2432.5 379.3 L2437.3 379.8 L2441.9 380.4 L2446.4 380.9 L2450.8 381.4 L2455.1 381.9 L2459.3 382.3 L2463.3 382.8 L2467.2 383.3 L2471.1 383.7 L2474.8 384.1 L2478.5 384.6 L2482.0 385.0 L2485.5 385.4 L2489.0 385.8 L2492.3 386.2 L2495.6 386.6 L2498.8 386.9 L2501.9 387.3 L2504.9 387.6 L2507.9 388.0 L2510.7 388.3 L2513.5 388.6 L2516.2 388.9 L2518.8 389.2 L2521.3 389.5 L2523.7 389.8 L2526.1 390.1 L2528.3 390.3 L2530.5 390.6 L2532.6 390.8 L2534.6 391.0 L2536.5 391.2 L2538.3 391.5 L2540.1 391.7 L2541.8 391.9 L2543.4 392.0 L2545.0 392.2 L2546.5 392.4 L2547.9 392.6 L2549.3 392.7 L2550.6 392.9 L2551.9 393.0 L2553.1 393.2 L2554.3 393.3 L2555.4 393.4 L2556.5 393.6 L2557.5 393.7 L2558.4 393.8 L2559.3 393.9 L2560.1 394.0 L2560.8 394.1 L2561.5 394.1 L2562.2 394.2 L2562.8 394.3 L2563.4 394.4 L2564.0 394.4 L2564.6 394.5 L2565.1 394.6 L2565.7 394.6 L2566.2 394.7 L2566.7 394.7 L2567.2 394.8 L2567.7 394.9 L2568.1 394.9 L2568.5 395.0 L2569.0 395.0 L2569.4 395.0 L2569.8 395.1 L2570.2 395.1 L2570.7 395.2 L2571.1 395.2 L2571.5 395.3 L2572.0 395.3 L2572.4 395.4 L2572.8 395.4 L2573.2 395.5 L2573.6 395.5 L2574.0 395.6 L2574.3 395.6 L2574.6 395.7 L2575.0 395.7 L2575.2 395.7 L2575.5 395.8 L2575.8 395.8 L2576.0 395.8 L2576.2 395.8 L2576.4 395.9 L2576.5 395.9 L2576.7 395.9 L2576.8 395.9 L2576.9 395.9 L2577.0 395.9 L2577.1 395.9 L2577.2 395.9 L2577.2 396.0 L2577.3 396.0 L2577.3 396.0 L2577.4 396.0 L2577.5 396.0 L2575.1 395.3Z"/></clipPath>
<filter id="vb" x="0" y="0" width="1" height="1" filterUnits="objectBoundingBox"><feGaussianBlur stdDeviation="0 1.6"/></filter>
<linearGradient id="i0"><stop offset="0" stop-color="#b3ff00"/><stop offset=".791" stop-color="#feff00"/><stop offset="1" stop-color="#ffec00"/></linearGradient>
<linearGradient id="i1"><stop offset="0" stop-color="#b5ff00"/><stop offset=".777" stop-color="#ffff00"/><stop offset="1" stop-color="#ffea00"/></linearGradient>
<linearGradient id="i2"><stop offset="0" stop-color="#b6ff00"/><stop offset=".749" stop-color="#feff00"/><stop offset="1" stop-color="#ffe800"/></linearGradient>
<linearGradient id="i3"><stop offset="0" stop-color="#b8ff00"/><stop offset=".734" stop-color="#ffff00"/><stop offset="1" stop-color="#ffe600"/></linearGradient>
<linearGradient id="i4"><stop offset="0" stop-color="#b9ff01"/><stop offset=".72" stop-color="#ffff00"/><stop offset="1" stop-color="#ffe400"/></linearGradient>
<linearGradient id="i5"><stop offset="0" stop-color="#bbff02"/><stop offset=".692" stop-color="#feff00"/><stop offset="1" stop-color="#ffe300"/></linearGradient>
<linearGradient id="i6"><stop offset="0" stop-color="#bcff03"/><stop offset=".678" stop-color="#ffff00"/><stop offset="1" stop-color="#ffe100"/></linearGradient>
<linearGradient id="i7"><stop offset="0" stop-color="#beff03"/><stop offset=".664" stop-color="#ffff00"/><stop offset="1" stop-color="#ffdf00"/></linearGradient>
<linearGradient id="i8"><stop offset="0" stop-color="#bfff04"/><stop offset=".636" stop-color="#feff00"/><stop offset="1" stop-color="#ffde00"/></linearGradient>
<linearGradient id="i9"><stop offset="0" stop-color="#c1ff05"/><stop offset=".24" stop-color="#d8ff00"/><stop offset=".621" stop-color="#ffff00"/><stop offset="1" stop-color="#ffdc00"/></linearGradient>
<linearGradient id="i10"><stop offset="0" stop-color="#c3ff06"/><stop offset=".282" stop-color="#deff00"/><stop offset=".607" stop-color="#ffff00"/><stop offset="1" stop-color="#ffda00"/></linearGradient>
<linearGradient id="i11"><stop offset="0" stop-color="#c4ff07"/><stop offset=".325" stop-color="#e4ff00"/><stop offset=".579" stop-color="#feff00"/><stop offset="1" stop-color="#ffd800"/></linearGradient>
<linearGradient id="i12"><stop offset="0" stop-color="#c6ff08"/><stop offset=".565" stop-color="#ffff00"/><stop offset="1" stop-color="#ffd700"/></linearGradient>
<linearGradient id="i13"><stop offset="0" stop-color="#c7ff09"/><stop offset=".551" stop-color="#ffff00"/><stop offset="1" stop-color="#ffd500"/></linearGradient>
<linearGradient id="i14"><stop offset="0" stop-color="#c9ff0a"/><stop offset=".523" stop-color="#feff00"/><stop offset="1" stop-color="#ffd300"/></linearGradient>
<linearGradient id="i15"><stop offset="0" stop-color="#cbff0a"/><stop offset=".508" stop-color="#ffff00"/><stop offset="1" stop-color="#ffd200"/></linearGradient>
<linearGradient id="i16"><stop offset="0" stop-color="#cdff0b"/><stop offset=".494" stop-color="#ffff01"/><stop offset="1" stop-color="#ffd000"/></linearGradient>
<linearGradient id="i17"><stop offset="0" stop-color="#ceff0c"/><stop offset=".466" stop-color="#feff02"/><stop offset="1" stop-color="#ffce00"/></linearGradient>
<linearGradient id="i18"><stop offset="0" stop-color="#d0ff0d"/><stop offset=".452" stop-color="#ffff03"/><stop offset="1" stop-color="#ffcd00"/></linearGradient>
<linearGradient id="i19"><stop offset="0" stop-color="#d2ff0e"/><stop offset=".438" stop-color="#fffe05"/><stop offset="1" stop-color="#ffcb00"/></linearGradient>
<linearGradient id="i20"><stop offset="0" stop-color="#d4ff0f"/><stop offset=".41" stop-color="#ffff06"/><stop offset=".678" stop-color="#ffe500"/><stop offset="1" stop-color="#ffca00"/></linearGradient>
<linearGradient id="i21"><stop offset="0" stop-color="#d5ff10"/><stop offset=".395" stop-color="#ffff08"/><stop offset=".72" stop-color="#ffdf00"/><stop offset="1" stop-color="#ffc800"/></linearGradient>
<linearGradient id="i22"><stop offset="0" stop-color="#d7ff11"/><stop offset=".381" stop-color="#fffe09"/><stop offset=".763" stop-color="#ffd900"/><stop offset="1" stop-color="#ffc600"/></linearGradient>
<linearGradient id="i23"><stop offset="0" stop-color="#d9ff12"/><stop offset=".353" stop-color="#ffff0a"/><stop offset=".791" stop-color="#ffd500"/><stop offset="1" stop-color="#ffc500"/></linearGradient>
<linearGradient id="i24"><stop offset="0" stop-color="#dbff13"/><stop offset=".339" stop-color="#ffff0c"/><stop offset=".65" stop-color="#ffe004"/><stop offset="1" stop-color="#ffc300"/></linearGradient>
<linearGradient id="i25"><stop offset="0" stop-color="#ddff14"/><stop offset=".325" stop-color="#fffe0d"/><stop offset=".65" stop-color="#ffde05"/><stop offset="1" stop-color="#ffc200"/></linearGradient>
<linearGradient id="i26"><stop offset="0" stop-color="#dfff15"/><stop offset=".297" stop-color="#ffff0f"/><stop offset=".636" stop-color="#ffdd06"/><stop offset="1" stop-color="#ffc000"/></linearGradient>
<linearGradient id="i27"><stop offset="0" stop-color="#e1ff16"/><stop offset=".282" stop-color="#ffff10"/><stop offset=".621" stop-color="#ffdd07"/><stop offset="1" stop-color="#ffbf00"/></linearGradient>
<linearGradient id="i28"><stop offset="0" stop-color="#e3ff17"/><stop offset=".268" stop-color="#fffe11"/><stop offset=".607" stop-color="#ffdc08"/><stop offset="1" stop-color="#ffbd00"/></linearGradient>
<linearGradient id="i29"><stop offset="0" stop-color="#e5ff18"/><stop offset=".24" stop-color="#ffff13"/><stop offset=".593" stop-color="#ffdc09"/><stop offset="1" stop-color="#ffbb01"/></linearGradient>
<linearGradient id="i30"><stop offset="0" stop-color="#e6ff19"/><stop offset=".226" stop-color="#ffff14"/><stop offset=".593" stop-color="#ffda0a"/><stop offset="1" stop-color="#ffba02"/></linearGradient>
<linearGradient id="i31"><stop offset="0" stop-color="#e8ff1a"/><stop offset=".212" stop-color="#fffe16"/><stop offset=".579" stop-color="#ffd90b"/><stop offset="1" stop-color="#ffb802"/></linearGradient>
<linearGradient id="strip" x1="0" y1="0" x2="0" y2="1"><stop offset="0" stop-color="#4c4c4c"/><stop offset="0.5" stop-color="#3a3a3a"/><stop offset="1" stop-color="#272727"/></linearGradient>
<linearGradient id="bbtn" x1="0" y1="0" x2="0" y2="1"><stop offset="0" stop-color="#adadad"/><stop offset="0.1" stop-color="#9c9c9c"/><stop offset="1" stop-color="#606060"/></linearGradient>
<linearGradient id="bsel" x1="0" y1="0" x2="0" y2="1"><stop offset="0" stop-color="#161616"/><stop offset="0.6" stop-color="#1e1e1e"/><stop offset="1" stop-color="#303030"/></linearGradient>
<linearGradient id="rb1" x1="0" y1="0" x2="0" y2="1"><stop offset="0" stop-color="#b0b0b0"/><stop offset="0.15" stop-color="#a6a6a6"/><stop offset="1" stop-color="#6c6c6c"/></linearGradient>
<linearGradient id="rb2" x1="0" y1="0" x2="0" y2="1"><stop offset="0" stop-color="#a8a8a8"/><stop offset="0.15" stop-color="#9e9e9e"/><stop offset="1" stop-color="#5e5e5e"/></linearGradient>
<linearGradient id="stp" x1="0" y1="0" x2="0" y2="1"><stop offset="0" stop-color="#b0b0b0"/><stop offset="0.3" stop-color="#8e8e8e"/><stop offset="0.31" stop-color="#9a9a9a"/><stop offset="1" stop-color="#626262"/></linearGradient>
<linearGradient id="stpb" x1="0" y1="0" x2="0" y2="1"><stop offset="0" stop-color="#b8b8b8"/><stop offset="0.5" stop-color="#a2a2a2"/><stop offset="0.52" stop-color="#8a8a8a"/><stop offset="1" stop-color="#868686"/></linearGradient>
<linearGradient id="blk" x1="0" y1="0" x2="0" y2="1"><stop offset="0" stop-color="#222"/><stop offset="0.5" stop-color="#0a0a0a"/><stop offset="0.52" stop-color="#000"/><stop offset="1" stop-color="#000"/></linearGradient>
<linearGradient id="tcir" x1="0" y1="0" x2="0" y2="1"><stop offset="0" stop-color="#6e6e6e"/><stop offset="1" stop-color="#8c8c8c"/></linearGradient>
<linearGradient id="bcir" x1="0" y1="0" x2="0" y2="1"><stop offset="0" stop-color="#8a8a8a"/><stop offset="1" stop-color="#a6a6a6"/></linearGradient>
<filter id="soft" x="-5%" y="-20%" width="110%" height="140%"><feGaussianBlur stdDeviation="0.55"/></filter></defs>
<rect x="0" y="0" width="2560" height="1528" fill="#333333"/>
<rect x="0" y="0" width="2560" height="34" fill="#00cc6a"/>
<g transform="rotate(0 14 17)">
<path d="M9.4 11L14 6.4L18.6 11" fill="none" stroke="#ffc800" stroke-width="3.2" stroke-linejoin="round" stroke-linecap="round"/>
<path d="M14 9.7L17.3 13L14 16.3L10.7 13Z" fill="#ffc800"/>
</g>
<g transform="rotate(90 14 17)">
<path d="M9.4 11L14 6.4L18.6 11" fill="none" stroke="#00dc00" stroke-width="3.2" stroke-linejoin="round" stroke-linecap="round"/>
<path d="M14 9.7L17.3 13L14 16.3L10.7 13Z" fill="#00dc00"/>
</g>
<g transform="rotate(180 14 17)">
<path d="M9.4 11L14 6.4L18.6 11" fill="none" stroke="#ff1060" stroke-width="3.2" stroke-linejoin="round" stroke-linecap="round"/>
<path d="M14 9.7L17.3 13L14 16.3L10.7 13Z" fill="#ff1060"/>
</g>
<g transform="rotate(270 14 17)">
<path d="M9.4 11L14 6.4L18.6 11" fill="none" stroke="#30c0ff" stroke-width="3.2" stroke-linejoin="round" stroke-linecap="round"/>
<path d="M14 9.7L17.3 13L14 16.3L10.7 13Z" fill="#30c0ff"/>
</g>
<text x="35" y="24" font-size="17.9" fill="#000" textLength="688.6" lengthAdjust="spacingAndGlyphs">Calman 2025 Calman Ultimate for Business 345 Days Remaining  - Analysis/SDR Toolkit</text>
<line x1="2376.1" y1="16.4" x2="2391.2" y2="16.4" stroke="#000" stroke-width="1.3"/>
<rect x="2446.2" y="13.2" width="9.9" height="9.9" fill="none" rx="2.4" stroke="#000" stroke-width="1.35"/>
<path d="M2449.3 10.3H2455.8Q2458.9 10.3 2458.9 13.4V19.9" fill="none" stroke="#000" stroke-width="1.35" stroke-linecap="round"/>
<path d="M2516.6 9.7L2530.9 23.5M2530.9 9.7L2516.6 23.5" fill="none" stroke="#000" stroke-width="1.35"/>
<rect x="0" y="34" width="2560" height="98" fill="#222222"/>
<rect x="285" y="53" width="2275" height="7.5" fill="url(#spec)"/>
<path d="M1 34H275.3V72.5Q275.3 78.6 269 78.6H7Q1 78.6 1 72.5Z" fill="url(#logo)"/>
<path d="M1 40V72.5Q1 78.6 7 78.6H269Q275.3 78.6 275.3 72.5V36" fill="none" stroke="#8c8c8c" stroke-width="1.3"/>
<path d="M51.45 40.5L66.65 55.7L51.45 70.9L36.25 55.7Z" fill="none" stroke="#fff" stroke-width="3.3" stroke-dasharray="17.3 4.2" stroke-dashoffset="8.65"/>
<path d="M51.45 44.6L56.35 49.5L51.45 54.4L46.55 49.5Z" fill="#fff"/>
<path d="M45.25 50.8L50.15 55.7L45.25 60.6L40.35 55.7Z" fill="#fff"/>
<path d="M57.65 50.8L62.55 55.7L57.65 60.6L52.75 55.7Z" fill="#fff"/>
<path d="M51.45 57L56.35 61.9L51.45 66.8L46.55 61.9Z" fill="#fff"/>
<text x="74.9" y="65.5" font-size="39" fill="#fff" textLength="127.8" lengthAdjust="spacingAndGlyphs" stroke="#fff" stroke-width="0.7">calman</text>
<circle cx="248.8" cy="55" r="14.6" fill="url(#ddc)"/>
<path d="M241.5 53.6H256.5L249 61Z" fill="#fff"/>
<path d="M300.5 132V94Q300.5 87 307.5 87H431Q438 87 438 94V132" fill="#3a3a3a" stroke="#7a7a7a" stroke-width="1.2"/>
<line x1="387.5" y1="87" x2="387.5" y2="132" stroke="#7a7a7a" stroke-width="1.2"/>
<text x="309.5" y="117.5" font-size="19.4" fill="#e4e4e4" textLength="69.8" lengthAdjust="spacingAndGlyphs">History 1</text>
<circle cx="411" cy="112.5" r="15" fill="#484848"/>
<path d="M411 108V118M406 113H416" fill="none" stroke="#9a9a9a" stroke-width="1.3"/>
<path d="M1821.5 132V93Q1821.5 87 1827.5 87H2030Q2036 87 2036 93V132Z" fill="url(#pan)"/>
<path d="M1821.5 132V93Q1821.5 87 1827.5 87H1830.5V132Z" fill="#0fdc0f"/>
<circle cx="1953.4" cy="109.7" r="14.7" fill="url(#ddcir)"/>
<path d="M1946.7 107H1960.1L1953.4 115Z" fill="#f2f2f2"/>
<text x="1835.2" y="104.3" font-size="17" fill="#f0f0f0" textLength="98.5" lengthAdjust="spacingAndGlyphs">X-Rite i1Pro 2</text>
<text x="1835.2" y="126.6" font-size="17" fill="#f0f0f0" textLength="83" lengthAdjust="spacingAndGlyphs">Direct View</text>
<line x1="1982.8" y1="90" x2="1982.8" y2="132" stroke="#444" stroke-width="1.5"/>
<circle cx="2013" cy="109.2" r="18.5" fill="#0000ff" stroke="#fff" stroke-width="1.6"/>
<text x="2013" y="114.6" font-size="14.5" fill="#fff" text-anchor="middle" textLength="24" lengthAdjust="spacingAndGlyphs">229</text>
<path d="M2045.5 132V93Q2045.5 87 2051.5 87H2234Q2240 87 2240 93V132Z" fill="url(#pan)"/>
<path d="M2045.5 132V93Q2045.5 87 2051.5 87H2054.5V132Z" fill="#e6e600"/>
<circle cx="2216" cy="109.7" r="14.7" fill="url(#ddcir)"/>
<path d="M2209.3 107H2222.7L2216 115Z" fill="#f2f2f2"/>
<text x="2058.3" y="104.3" font-size="17" fill="#f0f0f0" textLength="49.8" lengthAdjust="spacingAndGlyphs">Source</text>
<path d="M2249.5 132V93Q2249.5 87 2255.5 87H2457.8Q2463.8 87 2463.8 93V132Z" fill="url(#pan)"/>
<path d="M2249.5 132V93Q2249.5 87 2255.5 87H2258.5V132Z" fill="#e6e600"/>
<circle cx="2440.3" cy="109.7" r="14.7" fill="url(#ddcir)"/>
<path d="M2433.6 107H2447L2440.3 115Z" fill="#f2f2f2"/>
<text x="2262.4" y="104.3" font-size="17" fill="#f0f0f0" textLength="158.3" lengthAdjust="spacingAndGlyphs">Direct Display Control</text>
<rect x="2469.5" y="87.3" width="48.8" height="40.8" fill="url(#gbtn)" rx="7" stroke="#d2d2d2" stroke-width="1.5"/>
<rect x="2520.7" y="87.3" width="49" height="40.8" fill="url(#gbtn)" rx="7" stroke="#d2d2d2" stroke-width="1.5"/>
<circle cx="2494" cy="107.7" r="14.7" fill="url(#gcir)"/>
<circle cx="2539.8" cy="107.7" r="14.7" fill="url(#gcir)"/>
<path d="M2492.84 98.07L2495.16 98.07L2495.62 101.09L2497.53 101.89L2499.99 100.07L2501.63 101.71L2499.81 104.17L2500.61 106.08L2503.63 106.54L2503.63 108.86L2500.61 109.32L2499.81 111.23L2501.63 113.69L2499.99 115.33L2497.53 113.51L2495.62 114.31L2495.16 117.33L2492.84 117.33L2492.38 114.31L2490.47 113.51L2488.01 115.33L2486.37 113.69L2488.19 111.23L2487.39 109.32L2484.37 108.86L2484.37 106.54L2487.39 106.08L2488.19 104.17L2486.37 101.71L2488.01 100.07L2490.47 101.89L2492.38 101.09Z M2498.6 107.7A4.6 4.6 0 1 0 2489.4 107.7A4.6 4.6 0 1 0 2498.6 107.7Z" fill="#e4e4e4" fill-rule="evenodd" stroke="#e4e4e4" stroke-width="0.5" stroke-linejoin="round"/>
<path d="M2544 99.3V114.2L2536.2 106.6Z" fill="#fff"/>
<rect x="2548" y="84" width="12" height="48" fill="url(#edge)"/>
<path d="M0 1528V94Q0 86.5 8 86.5H291Q299 86.5 299 94V1528Z" fill="#555555"/>
<rect x="0" y="92" width="1.6" height="1436" fill="#454545"/>
<rect x="296.8" y="94" width="1.2" height="1434" fill="#5e5e5e"/>
<rect x="298" y="94" width="2" height="1434" fill="#3a3a3a"/>
<circle cx="28.5" cy="107.4" r="15" fill="#4e4e4e"/>
<circle cx="27.5" cy="105.5" r="6" fill="url(#knob)"/>
<circle cx="271.4" cy="107.4" r="15" fill="#4e4e4e"/>
<path d="M275.5 99.5V114L267.3 106.7Z" fill="#f4f4f4"/>
<text x="13.75" y="151" font-size="18.6" fill="#f0f0f0" textLength="95.3" lengthAdjust="spacingAndGlyphs">SDR Toolkit</text>
<rect x="14" y="157.5" width="272.5" height="397.5" fill="#212121"/>
<rect x="14" y="157.5" width="272.5" height="397.5" fill="none" stroke="#1a1a1a" stroke-width="3"/>
<rect x="12.7" y="156.2" width="275" height="400" fill="none" stroke="#4a4a4a" stroke-width="1"/>
<path d="M28 182L34 182L34 176Z" fill="#585858"/>
<text x="45.3" y="185" font-size="15.8" fill="#ffffff" font-weight="bold" textLength="69.4" lengthAdjust="spacingAndGlyphs">Welcome</text>
<text x="64.6" y="209" font-size="15.8" fill="#f2f2f2" textLength="68.4" lengthAdjust="spacingAndGlyphs">Welcome</text>
<text x="64.6" y="231.2" font-size="15.8" fill="#f2f2f2" textLength="56.9" lengthAdjust="spacingAndGlyphs">Options</text>
<path d="M28 250L34 250L34 244Z" fill="#585858"/>
<text x="45.3" y="253" font-size="15.8" fill="#ffffff" font-weight="bold" textLength="60.3" lengthAdjust="spacingAndGlyphs">Analysis</text>
<text x="64.6" y="277" font-size="15.8" fill="#f2f2f2" textLength="112.1" lengthAdjust="spacingAndGlyphs">Dynamic Range</text>
<text x="64.6" y="298.9" font-size="15.8" fill="#f2f2f2" textLength="107.4" lengthAdjust="spacingAndGlyphs">Grayscale - 2pt</text>
<text x="64.6" y="321" font-size="15.8" fill="#f2f2f2" textLength="121.5" lengthAdjust="spacingAndGlyphs">Grayscale - Multi</text>
<text x="64.6" y="343" font-size="15.8" fill="#f2f2f2" textLength="92.3" lengthAdjust="spacingAndGlyphs">Color Gamut</text>
<text x="64.6" y="364.8" font-size="15.8" fill="#f2f2f2" textLength="51.5" lengthAdjust="spacingAndGlyphs">3D LUT</text>
<text x="64.6" y="386.7" font-size="15.8" fill="#f2f2f2" textLength="97" lengthAdjust="spacingAndGlyphs">ColorChecker</text>
<rect x="62" y="390.8" width="140" height="22" fill="#e2e2e2"/>
<text x="64.6" y="408.6" font-size="15.8" fill="#2a2a2a" textLength="134" lengthAdjust="spacingAndGlyphs">Saturation Sweeps</text>
<text x="64.6" y="430.8" font-size="15.8" fill="#f2f2f2" textLength="138.4" lengthAdjust="spacingAndGlyphs">Luminance Sweeps</text>
<text x="64.6" y="452.7" font-size="15.8" fill="#f2f2f2" textLength="69.4" lengthAdjust="spacingAndGlyphs">Additivity</text>
<text x="64.6" y="474.6" font-size="15.8" fill="#f2f2f2" textLength="131.3" lengthAdjust="spacingAndGlyphs">Screen Uniformity</text>
<text x="64.6" y="496.2" font-size="15.8" fill="#f2f2f2" textLength="127.9" lengthAdjust="spacingAndGlyphs">Screen Angularity</text>
<text x="64.6" y="518" font-size="15.8" fill="#f2f2f2" textLength="111.4" lengthAdjust="spacingAndGlyphs">Screen Stability</text>
<text x="64.6" y="540" font-size="15.8" fill="#f2f2f2" textLength="145.5" lengthAdjust="spacingAndGlyphs">Spectral Power Dist.</text>
<text x="311.3" y="298" font-size="57.2" fill="#efefef" textLength="449.5" lengthAdjust="spacingAndGlyphs">Saturation Sweeps</text>
<text x="1058.2" y="288.2" font-size="27.6" fill="#efefef" textLength="80.8" lengthAdjust="spacingAndGlyphs">Levels:</text>
<rect x="1150" y="260.5" width="458.7" height="34.5" fill="url(#dd)" stroke="#2b2b2b" stroke-width="1.6"/>
<clipPath id="cl1"><rect x="1150" y="261" width="440" height="32.6"/></clipPath>
<text x="1156.5" y="288" font-size="22.3" fill="#efefef" textLength="120.2" lengthAdjust="spacingAndGlyphs" clip-path="url(#cl1)">20% Sweeps</text>
<path d="M1588.5 275H1600.5L1594.5 281.5Z" fill="#000"/>
<text x="468.4" y="370.7" font-size="26.6" fill="#efefef" textLength="145.2" lengthAdjust="spacingAndGlyphs">dE Formula:</text>
<rect x="625" y="344" width="181.7" height="33.5" fill="url(#dd)" stroke="#2b2b2b" stroke-width="1.6"/>
<text x="631.2" y="370.7" font-size="22.3" fill="#efefef" textLength="47" lengthAdjust="spacingAndGlyphs">2000</text>
<path d="M787.5 357H799.5L793.5 363.5Z" fill="#000"/>
<rect x="359" y="421.3" width="422.3" height="522.7" fill="#232323"/>
<line x1="415.26" y1="421.3" x2="415.26" y2="944" stroke="#8a8a8a" stroke-width="2"/>
<line x1="471.52" y1="421.3" x2="471.52" y2="944" stroke="#8a8a8a" stroke-width="2"/>
<line x1="527.78" y1="421.3" x2="527.78" y2="944" stroke="#8a8a8a" stroke-width="2"/>
<line x1="584.04" y1="421.3" x2="584.04" y2="944" stroke="#8a8a8a" stroke-width="2"/>
<line x1="640.3" y1="421.3" x2="640.3" y2="944" stroke="#8a8a8a" stroke-width="2"/>
<line x1="696.56" y1="421.3" x2="696.56" y2="944" stroke="#8a8a8a" stroke-width="2"/>
<line x1="752.82" y1="421.3" x2="752.82" y2="944" stroke="#8a8a8a" stroke-width="2"/>
<rect x="359" y="421.3" width="422.3" height="522.7" fill="none" stroke="#969696" stroke-width="2"/>
<line x1="359" y1="944" x2="359" y2="952" stroke="#969696" stroke-width="2"/>
<text x="359" y="973.5" font-size="19.5" fill="#e0e0e0" text-anchor="middle">0</text>
<line x1="415.26" y1="944" x2="415.26" y2="952" stroke="#969696" stroke-width="2"/>
<text x="415.26" y="973.5" font-size="19.5" fill="#e0e0e0" text-anchor="middle">2</text>
<line x1="471.52" y1="944" x2="471.52" y2="952" stroke="#969696" stroke-width="2"/>
<text x="471.52" y="973.5" font-size="19.5" fill="#e0e0e0" text-anchor="middle">4</text>
<line x1="527.78" y1="944" x2="527.78" y2="952" stroke="#969696" stroke-width="2"/>
<text x="527.78" y="973.5" font-size="19.5" fill="#e0e0e0" text-anchor="middle">6</text>
<line x1="584.04" y1="944" x2="584.04" y2="952" stroke="#969696" stroke-width="2"/>
<text x="584.04" y="973.5" font-size="19.5" fill="#e0e0e0" text-anchor="middle">8</text>
<line x1="640.3" y1="944" x2="640.3" y2="952" stroke="#969696" stroke-width="2"/>
<text x="640.3" y="973.5" font-size="19.5" fill="#e0e0e0" text-anchor="middle" textLength="21.69" lengthAdjust="spacingAndGlyphs">10</text>
<line x1="696.56" y1="944" x2="696.56" y2="952" stroke="#969696" stroke-width="2"/>
<text x="696.56" y="973.5" font-size="19.5" fill="#e0e0e0" text-anchor="middle" textLength="21.69" lengthAdjust="spacingAndGlyphs">12</text>
<line x1="752.82" y1="944" x2="752.82" y2="952" stroke="#969696" stroke-width="2"/>
<text x="752.82" y="973.5" font-size="19.5" fill="#e0e0e0" text-anchor="middle" textLength="21.69" lengthAdjust="spacingAndGlyphs">14</text>
<text x="545.4" y="413.4" font-size="19" fill="#e0e0e0" text-anchor="middle" textLength="106.4" lengthAdjust="spacingAndGlyphs">DeltaE 2000</text>
<line x1="351" y1="421.3" x2="359" y2="421.3" stroke="#969696" stroke-width="2"/>
<text x="357.7" y="473.06" font-size="19.5" fill="#e0e0e0" text-anchor="end" textLength="47.63" lengthAdjust="spacingAndGlyphs">100%</text>
<line x1="351" y1="508.42" x2="359" y2="508.42" stroke="#969696" stroke-width="2"/>
<text x="357.7" y="560.18" font-size="19.5" fill="#e0e0e0" text-anchor="end" textLength="37.27" lengthAdjust="spacingAndGlyphs">80%</text>
<line x1="351" y1="595.53" x2="359" y2="595.53" stroke="#969696" stroke-width="2"/>
<text x="357.7" y="647.29" font-size="19.5" fill="#e0e0e0" text-anchor="end" textLength="37.27" lengthAdjust="spacingAndGlyphs">60%</text>
<line x1="351" y1="682.65" x2="359" y2="682.65" stroke="#969696" stroke-width="2"/>
<text x="357.7" y="734.41" font-size="19.5" fill="#e0e0e0" text-anchor="end" textLength="37.27" lengthAdjust="spacingAndGlyphs">40%</text>
<line x1="351" y1="769.77" x2="359" y2="769.77" stroke="#969696" stroke-width="2"/>
<text x="357.7" y="821.53" font-size="19.5" fill="#e0e0e0" text-anchor="end" textLength="37.27" lengthAdjust="spacingAndGlyphs">20%</text>
<line x1="351" y1="856.88" x2="359" y2="856.88" stroke="#969696" stroke-width="2"/>
<text x="357.7" y="908.64" font-size="19.5" fill="#e0e0e0" text-anchor="end" textLength="32.54" lengthAdjust="spacingAndGlyphs">100</text>
<line x1="351" y1="944" x2="359" y2="944" stroke="#969696" stroke-width="2"/>
<rect x="360" y="430" width="48.1" height="8.8" fill="#000"/>
<rect x="360" y="431.8" width="46.3" height="5.3" fill="url(#b0)"/>
<rect x="360" y="439.3" width="45.8" height="8.8" fill="#000"/>
<rect x="360" y="441.1" width="44" height="5.3" fill="url(#b1)"/>
<rect x="360" y="448.6" width="68.5" height="8.8" fill="#000"/>
<rect x="360" y="450.4" width="66.7" height="5.3" fill="url(#b2)"/>
<rect x="360" y="457.9" width="47.8" height="8.8" fill="#000"/>
<rect x="360" y="459.7" width="46" height="5.3" fill="url(#b3)"/>
<rect x="360" y="467.2" width="52.1" height="8.8" fill="#000"/>
<rect x="360" y="469" width="50.3" height="5.3" fill="url(#b4)"/>
<rect x="360" y="476.5" width="35.1" height="8.8" fill="#000"/>
<rect x="360" y="478.3" width="33.3" height="5.3" fill="url(#b5)"/>
<rect x="360" y="517.12" width="35.1" height="8.8" fill="#000"/>
<rect x="360" y="518.92" width="33.3" height="5.3" fill="url(#b6)"/>
<rect x="360" y="526.42" width="52.1" height="8.8" fill="#000"/>
<rect x="360" y="528.22" width="50.3" height="5.3" fill="url(#b7)"/>
<rect x="360" y="535.72" width="61.4" height="8.8" fill="#000"/>
<rect x="360" y="537.52" width="59.6" height="5.3" fill="url(#b8)"/>
<rect x="360" y="545.02" width="40.7" height="8.8" fill="#000"/>
<rect x="360" y="546.82" width="38.9" height="5.3" fill="url(#b9)"/>
<rect x="360" y="554.32" width="59.1" height="8.8" fill="#000"/>
<rect x="360" y="556.12" width="57.3" height="5.3" fill="url(#b10)"/>
<rect x="360" y="563.62" width="33.6" height="8.8" fill="#000"/>
<rect x="360" y="565.42" width="31.8" height="5.3" fill="url(#b11)"/>
<rect x="360" y="604.23" width="41.4" height="8.8" fill="#000"/>
<rect x="360" y="606.03" width="39.6" height="5.3" fill="url(#b12)"/>
<rect x="360" y="613.53" width="38.7" height="8.8" fill="#000"/>
<rect x="360" y="615.33" width="36.9" height="5.3" fill="url(#b13)"/>
<rect x="360" y="622.83" width="65.1" height="8.8" fill="#000"/>
<rect x="360" y="624.63" width="63.3" height="5.3" fill="url(#b14)"/>
<rect x="360" y="632.13" width="31.1" height="8.8" fill="#000"/>
<rect x="360" y="633.93" width="29.3" height="5.3" fill="url(#b15)"/>
<rect x="360" y="641.43" width="55.7" height="8.8" fill="#000"/>
<rect x="360" y="643.23" width="53.9" height="5.3" fill="url(#b16)"/>
<rect x="360" y="650.73" width="36.9" height="8.8" fill="#000"/>
<rect x="360" y="652.53" width="35.1" height="5.3" fill="url(#b17)"/>
<rect x="360" y="691.35" width="43.3" height="8.8" fill="#000"/>
<rect x="360" y="693.15" width="41.5" height="5.3" fill="url(#b18)"/>
<rect x="360" y="700.65" width="26" height="8.8" fill="#000"/>
<rect x="360" y="702.45" width="24.2" height="5.3" fill="url(#b19)"/>
<rect x="360" y="709.95" width="55.9" height="8.8" fill="#000"/>
<rect x="360" y="711.75" width="54.1" height="5.3" fill="url(#b20)"/>
<rect x="360" y="719.25" width="27.9" height="8.8" fill="#000"/>
<rect x="360" y="721.05" width="26.1" height="5.3" fill="url(#b21)"/>
<rect x="360" y="728.55" width="57.3" height="8.8" fill="#000"/>
<rect x="360" y="730.35" width="55.5" height="5.3" fill="url(#b22)"/>
<rect x="360" y="737.85" width="38.3" height="8.8" fill="#000"/>
<rect x="360" y="739.65" width="36.5" height="5.3" fill="url(#b23)"/>
<rect x="360" y="778.47" width="44.3" height="8.8" fill="#000"/>
<rect x="360" y="780.27" width="42.5" height="5.3" fill="url(#b24)"/>
<rect x="360" y="787.77" width="30.1" height="8.8" fill="#000"/>
<rect x="360" y="789.57" width="28.3" height="5.3" fill="url(#b25)"/>
<rect x="360" y="797.07" width="59.1" height="8.8" fill="#000"/>
<rect x="360" y="798.87" width="57.3" height="5.3" fill="url(#b26)"/>
<rect x="360" y="806.37" width="42.7" height="8.8" fill="#000"/>
<rect x="360" y="808.17" width="40.9" height="5.3" fill="url(#b27)"/>
<rect x="360" y="815.67" width="63.5" height="8.8" fill="#000"/>
<rect x="360" y="817.47" width="61.7" height="5.3" fill="url(#b28)"/>
<rect x="360" y="824.97" width="54.6" height="8.8" fill="#000"/>
<rect x="360" y="826.77" width="52.8" height="5.3" fill="url(#b29)"/>
<rect x="360" y="920.3" width="68.1" height="8.8" fill="#000"/>
<rect x="360" y="922.1" width="66.3" height="5.3" fill="url(#bw)"/>
<rect x="852.8" y="348.8" width="196.2" height="381.7" fill="#232323"/>
<line x1="852.8" y1="412.42" x2="1049" y2="412.42" stroke="#8a8a8a" stroke-width="2"/>
<line x1="852.8" y1="476.03" x2="1049" y2="476.03" stroke="#8a8a8a" stroke-width="2"/>
<line x1="852.8" y1="539.65" x2="1049" y2="539.65" stroke="#8a8a8a" stroke-width="2"/>
<line x1="852.8" y1="603.27" x2="1049" y2="603.27" stroke="#8a8a8a" stroke-width="2"/>
<line x1="852.8" y1="666.88" x2="1049" y2="666.88" stroke="#8a8a8a" stroke-width="2"/>
<rect x="852.8" y="348.8" width="196.2" height="381.7" fill="none" stroke="#969696" stroke-width="2"/>
<line x1="844.8" y1="348.8" x2="852.8" y2="348.8" stroke="#969696" stroke-width="2"/>
<text x="844" y="356" font-size="19.5" fill="#e0e0e0" text-anchor="end" textLength="21.69" lengthAdjust="spacingAndGlyphs">15</text>
<line x1="844.8" y1="412.42" x2="852.8" y2="412.42" stroke="#969696" stroke-width="2"/>
<text x="844" y="419.62" font-size="19.5" fill="#e0e0e0" text-anchor="end" textLength="21.69" lengthAdjust="spacingAndGlyphs">10</text>
<line x1="844.8" y1="476.03" x2="852.8" y2="476.03" stroke="#969696" stroke-width="2"/>
<text x="844" y="483.23" font-size="19.5" fill="#e0e0e0" text-anchor="end">5</text>
<line x1="844.8" y1="539.65" x2="852.8" y2="539.65" stroke="#969696" stroke-width="2"/>
<text x="844" y="546.85" font-size="19.5" fill="#e0e0e0" text-anchor="end">0</text>
<line x1="844.8" y1="603.27" x2="852.8" y2="603.27" stroke="#969696" stroke-width="2"/>
<text x="844" y="610.47" font-size="19.5" fill="#e0e0e0" text-anchor="end" textLength="17.34" lengthAdjust="spacingAndGlyphs">-5</text>
<line x1="844.8" y1="666.88" x2="852.8" y2="666.88" stroke="#969696" stroke-width="2"/>
<text x="844" y="674.08" font-size="19.5" fill="#e0e0e0" text-anchor="end" textLength="28.19" lengthAdjust="spacingAndGlyphs">-10</text>
<line x1="844.8" y1="730.5" x2="852.8" y2="730.5" stroke="#969696" stroke-width="2"/>
<text x="844" y="737.7" font-size="19.5" fill="#e0e0e0" text-anchor="end" textLength="28.19" lengthAdjust="spacingAndGlyphs">-15</text>
<line x1="852.8" y1="730.5" x2="852.8" y2="738.5" stroke="#969696" stroke-width="2"/>
<line x1="1049" y1="730.5" x2="1049" y2="738.5" stroke="#969696" stroke-width="2"/>
<text x="950.9" y="751.6" font-size="19.5" fill="#e0e0e0" text-anchor="middle" textLength="47.63" lengthAdjust="spacingAndGlyphs">100%</text>
<text x="932.5" y="341.2" font-size="19" fill="#e0e0e0" text-anchor="middle" textLength="58.4" lengthAdjust="spacingAndGlyphs">Delta L</text>
<rect x="872.8" y="532" width="155.2" height="7.4" fill="url(#ybar)" stroke="#000" stroke-width="1.6"/>
<rect x="1119.8" y="348.8" width="196.2" height="381.7" fill="#232323"/>
<line x1="1119.8" y1="412.42" x2="1316" y2="412.42" stroke="#8a8a8a" stroke-width="2"/>
<line x1="1119.8" y1="476.03" x2="1316" y2="476.03" stroke="#8a8a8a" stroke-width="2"/>
<line x1="1119.8" y1="539.65" x2="1316" y2="539.65" stroke="#8a8a8a" stroke-width="2"/>
<line x1="1119.8" y1="603.27" x2="1316" y2="603.27" stroke="#8a8a8a" stroke-width="2"/>
<line x1="1119.8" y1="666.88" x2="1316" y2="666.88" stroke="#8a8a8a" stroke-width="2"/>
<rect x="1119.8" y="348.8" width="196.2" height="381.7" fill="none" stroke="#969696" stroke-width="2"/>
<line x1="1111.8" y1="348.8" x2="1119.8" y2="348.8" stroke="#969696" stroke-width="2"/>
<text x="1111" y="356" font-size="19.5" fill="#e0e0e0" text-anchor="end" textLength="21.69" lengthAdjust="spacingAndGlyphs">15</text>
<line x1="1111.8" y1="412.42" x2="1119.8" y2="412.42" stroke="#969696" stroke-width="2"/>
<text x="1111" y="419.62" font-size="19.5" fill="#e0e0e0" text-anchor="end" textLength="21.69" lengthAdjust="spacingAndGlyphs">10</text>
<line x1="1111.8" y1="476.03" x2="1119.8" y2="476.03" stroke="#969696" stroke-width="2"/>
<text x="1111" y="483.23" font-size="19.5" fill="#e0e0e0" text-anchor="end">5</text>
<line x1="1111.8" y1="539.65" x2="1119.8" y2="539.65" stroke="#969696" stroke-width="2"/>
<text x="1111" y="546.85" font-size="19.5" fill="#e0e0e0" text-anchor="end">0</text>
<line x1="1111.8" y1="603.27" x2="1119.8" y2="603.27" stroke="#969696" stroke-width="2"/>
<text x="1111" y="610.47" font-size="19.5" fill="#e0e0e0" text-anchor="end" textLength="17.34" lengthAdjust="spacingAndGlyphs">-5</text>
<line x1="1111.8" y1="666.88" x2="1119.8" y2="666.88" stroke="#969696" stroke-width="2"/>
<text x="1111" y="674.08" font-size="19.5" fill="#e0e0e0" text-anchor="end" textLength="28.19" lengthAdjust="spacingAndGlyphs">-10</text>
<line x1="1111.8" y1="730.5" x2="1119.8" y2="730.5" stroke="#969696" stroke-width="2"/>
<text x="1111" y="737.7" font-size="19.5" fill="#e0e0e0" text-anchor="end" textLength="28.19" lengthAdjust="spacingAndGlyphs">-15</text>
<line x1="1119.8" y1="730.5" x2="1119.8" y2="738.5" stroke="#969696" stroke-width="2"/>
<line x1="1316" y1="730.5" x2="1316" y2="738.5" stroke="#969696" stroke-width="2"/>
<text x="1217.9" y="751.6" font-size="19.5" fill="#e0e0e0" text-anchor="middle" textLength="47.63" lengthAdjust="spacingAndGlyphs">100%</text>
<text x="1199.5" y="341.2" font-size="19" fill="#e0e0e0" text-anchor="middle" textLength="61.46" lengthAdjust="spacingAndGlyphs">Delta C</text>
<rect x="1140.5" y="539" width="154.8" height="39.4" fill="url(#ybar)" stroke="#000" stroke-width="1.6"/>
<rect x="1387" y="348.8" width="196.2" height="381.7" fill="#232323"/>
<line x1="1387" y1="412.42" x2="1583.2" y2="412.42" stroke="#8a8a8a" stroke-width="2"/>
<line x1="1387" y1="476.03" x2="1583.2" y2="476.03" stroke="#8a8a8a" stroke-width="2"/>
<line x1="1387" y1="539.65" x2="1583.2" y2="539.65" stroke="#8a8a8a" stroke-width="2"/>
<line x1="1387" y1="603.27" x2="1583.2" y2="603.27" stroke="#8a8a8a" stroke-width="2"/>
<line x1="1387" y1="666.88" x2="1583.2" y2="666.88" stroke="#8a8a8a" stroke-width="2"/>
<rect x="1387" y="348.8" width="196.2" height="381.7" fill="none" stroke="#969696" stroke-width="2"/>
<line x1="1379" y1="348.8" x2="1387" y2="348.8" stroke="#969696" stroke-width="2"/>
<text x="1378.2" y="356" font-size="19.5" fill="#e0e0e0" text-anchor="end" textLength="21.69" lengthAdjust="spacingAndGlyphs">15</text>
<line x1="1379" y1="412.42" x2="1387" y2="412.42" stroke="#969696" stroke-width="2"/>
<text x="1378.2" y="419.62" font-size="19.5" fill="#e0e0e0" text-anchor="end" textLength="21.69" lengthAdjust="spacingAndGlyphs">10</text>
<line x1="1379" y1="476.03" x2="1387" y2="476.03" stroke="#969696" stroke-width="2"/>
<text x="1378.2" y="483.23" font-size="19.5" fill="#e0e0e0" text-anchor="end">5</text>
<line x1="1379" y1="539.65" x2="1387" y2="539.65" stroke="#969696" stroke-width="2"/>
<text x="1378.2" y="546.85" font-size="19.5" fill="#e0e0e0" text-anchor="end">0</text>
<line x1="1379" y1="603.27" x2="1387" y2="603.27" stroke="#969696" stroke-width="2"/>
<text x="1378.2" y="610.47" font-size="19.5" fill="#e0e0e0" text-anchor="end" textLength="17.34" lengthAdjust="spacingAndGlyphs">-5</text>
<line x1="1379" y1="666.88" x2="1387" y2="666.88" stroke="#969696" stroke-width="2"/>
<text x="1378.2" y="674.08" font-size="19.5" fill="#e0e0e0" text-anchor="end" textLength="28.19" lengthAdjust="spacingAndGlyphs">-10</text>
<line x1="1379" y1="730.5" x2="1387" y2="730.5" stroke="#969696" stroke-width="2"/>
<text x="1378.2" y="737.7" font-size="19.5" fill="#e0e0e0" text-anchor="end" textLength="28.19" lengthAdjust="spacingAndGlyphs">-15</text>
<line x1="1387" y1="730.5" x2="1387" y2="738.5" stroke="#969696" stroke-width="2"/>
<line x1="1583.2" y1="730.5" x2="1583.2" y2="738.5" stroke="#969696" stroke-width="2"/>
<text x="1485.1" y="751.6" font-size="19.5" fill="#e0e0e0" text-anchor="middle" textLength="47.63" lengthAdjust="spacingAndGlyphs">100%</text>
<text x="1466.7" y="341.2" font-size="19" fill="#e0e0e0" text-anchor="middle" textLength="61.46" lengthAdjust="spacingAndGlyphs">Delta H</text>
<rect x="1408" y="513.8" width="154" height="25.4" fill="url(#ybar)" stroke="#000" stroke-width="1.6"/>
<rect x="808" y="765.8" width="801.8" height="220.6" fill="#000"/>
<rect x="836.3" y="775.4" width="134.5" height="179" fill="#c0c0a5"/>
<rect x="836.3" y="775.4" width="134.5" height="89.6" fill="#bdc1a6"/>
<rect x="836.3" y="775.4" width="134.5" height="179" fill="none" stroke="#fff" stroke-width="1.3"/>
<text x="903.55" y="974.5" font-size="16.4" fill="#fff" text-anchor="middle" textLength="31.84" lengthAdjust="spacingAndGlyphs">20%</text>
<rect x="993.2" y="775.4" width="133.8" height="179" fill="#c1bf87"/>
<rect x="993.2" y="775.4" width="133.8" height="89.6" fill="#bec285"/>
<rect x="993.2" y="775.4" width="133.8" height="179" fill="none" stroke="#fff" stroke-width="1.3"/>
<text x="1060.1" y="974.5" font-size="16.4" fill="#fff" text-anchor="middle" textLength="31.84" lengthAdjust="spacingAndGlyphs">40%</text>
<rect x="1149.2" y="775.4" width="134.8" height="179" fill="#c0bd6c"/>
<rect x="1149.2" y="775.4" width="134.8" height="89.6" fill="#bec069"/>
<rect x="1149.2" y="775.4" width="134.8" height="179" fill="none" stroke="#fff" stroke-width="1.3"/>
<text x="1216.6" y="974.5" font-size="16.4" fill="#fff" text-anchor="middle" textLength="31.84" lengthAdjust="spacingAndGlyphs">60%</text>
<rect x="1306" y="775.4" width="135" height="179" fill="#bfc04b"/>
<rect x="1306" y="775.4" width="135" height="89.6" fill="#bec147"/>
<rect x="1306" y="775.4" width="135" height="179" fill="none" stroke="#fff" stroke-width="1.3"/>
<text x="1373.5" y="974.5" font-size="16.4" fill="#fff" text-anchor="middle" textLength="31.84" lengthAdjust="spacingAndGlyphs">80%</text>
<rect x="1463" y="775.4" width="134" height="179" fill="#c0c000"/>
<rect x="1463" y="775.4" width="134" height="89.6" fill="#c0c117"/>
<rect x="1463" y="775.4" width="134" height="179" fill="none" stroke="#fff" stroke-width="1.3"/>
<text x="1530" y="974.5" font-size="16.4" fill="#fff" text-anchor="middle" textLength="40.69" lengthAdjust="spacingAndGlyphs">100%</text>
<text transform="translate(825.4,838.8) rotate(-90)" font-size="16" fill="#fff" textLength="47" lengthAdjust="spacingAndGlyphs">Actual</text>
<text transform="translate(825.4,939) rotate(-90)" font-size="16" fill="#fff" textLength="46" lengthAdjust="spacingAndGlyphs">Target</text>
<text x="369.2" y="1048.1" font-size="37.7" fill="#efefef" textLength="314.8" lengthAdjust="spacingAndGlyphs">Avg dE2000: 1.69</text>
<text x="364.2" y="1103.1" font-size="37.7" fill="#efefef" textLength="326.6" lengthAdjust="spacingAndGlyphs">Max dE2000: 2.44</text>
<text x="321" y="1167.3" font-size="37.7" fill="#efefef" textLength="295.5" lengthAdjust="spacingAndGlyphs">Current Reading</text>
<text x="321" y="1215.3" font-size="31.6" fill="#efefef" textLength="137.8" lengthAdjust="spacingAndGlyphs">x: 0.4129</text>
<text x="532.4" y="1215.3" font-size="31.6" fill="#efefef" textLength="139.2" lengthAdjust="spacingAndGlyphs">y: 0.5025</text>
<text x="321" y="1270.4" font-size="31.6" fill="#efefef" textLength="130" lengthAdjust="spacingAndGlyphs">fL: 78.96</text>
<text x="321" y="1316.7" font-size="31.6" fill="#efefef" textLength="214.4" lengthAdjust="spacingAndGlyphs">cd/m²: 270.55</text>
<rect x="784.3" y="1058.8" width="337.5" height="242.5" fill="#232323"/>
<line x1="784.3" y1="1119.42" x2="1121.8" y2="1119.42" stroke="#8a8a8a" stroke-width="2"/>
<line x1="784.3" y1="1180.05" x2="1121.8" y2="1180.05" stroke="#8a8a8a" stroke-width="2"/>
<line x1="784.3" y1="1240.67" x2="1121.8" y2="1240.67" stroke="#8a8a8a" stroke-width="2"/>
<rect x="784.3" y="1058" width="337.5" height="243.3" fill="none" stroke="#969696" stroke-width="2.2"/>
<line x1="784.3" y1="1059.4" x2="1121.8" y2="1059.4" stroke="#969696" stroke-width="2"/>
<line x1="775.8" y1="1058.8" x2="784.3" y2="1058.8" stroke="#969696" stroke-width="2"/>
<text x="775.1" y="1066.1" font-size="19.5" fill="#e0e0e0" text-anchor="end" textLength="31.09" lengthAdjust="spacingAndGlyphs">110</text>
<line x1="775.8" y1="1119.42" x2="784.3" y2="1119.42" stroke="#969696" stroke-width="2"/>
<text x="775.1" y="1126.72" font-size="19.5" fill="#e0e0e0" text-anchor="end" textLength="32.54" lengthAdjust="spacingAndGlyphs">105</text>
<line x1="775.8" y1="1180.05" x2="784.3" y2="1180.05" stroke="#969696" stroke-width="2"/>
<text x="775.1" y="1187.35" font-size="19.5" fill="#e0e0e0" text-anchor="end" textLength="32.54" lengthAdjust="spacingAndGlyphs">100</text>
<line x1="775.8" y1="1240.67" x2="784.3" y2="1240.67" stroke="#969696" stroke-width="2"/>
<text x="775.1" y="1247.97" font-size="19.5" fill="#e0e0e0" text-anchor="end" textLength="21.69" lengthAdjust="spacingAndGlyphs">95</text>
<line x1="775.8" y1="1301.3" x2="784.3" y2="1301.3" stroke="#969696" stroke-width="2"/>
<text x="775.1" y="1308.6" font-size="19.5" fill="#e0e0e0" text-anchor="end" textLength="21.69" lengthAdjust="spacingAndGlyphs">90</text>
<line x1="784.3" y1="1301.3" x2="784.3" y2="1309.3" stroke="#969696" stroke-width="2"/>
<line x1="1121.8" y1="1301.3" x2="1121.8" y2="1309.3" stroke="#969696" stroke-width="2"/>
<text x="953.6" y="1323.2" font-size="19.5" fill="#e0e0e0" text-anchor="middle" textLength="47.63" lengthAdjust="spacingAndGlyphs">100%</text>
<text x="932.4" y="1050.2" font-size="18.9" fill="#e0e0e0" text-anchor="middle" textLength="112.5" lengthAdjust="spacingAndGlyphs">RGB Balance</text>
<rect x="816.8" y="1182.8" width="89" height="119.3" fill="#000"/>
<rect x="817.9" y="1184.6" width="87" height="116.7" fill="url(#rb)"/>
<rect x="906.4" y="1168" width="90.4" height="134.1" fill="#000"/>
<rect x="907.8" y="1169.8" width="88" height="131.5" fill="url(#gb)"/>
<rect x="996.8" y="1072.5" width="90.2" height="229.6" fill="#000"/>
<rect x="997.9" y="1074.2" width="88" height="227.1" fill="url(#bb)"/>
<rect x="1152" y="1016" width="983" height="318.5" fill="#424242"/>
<rect x="1152" y="1016" width="983" height="37.6" fill="url(#th)"/>
<text x="1176.5" y="1079.2" font-size="20.3" fill="#f2f2f2" font-weight="bold" textLength="115.7" lengthAdjust="spacingAndGlyphs">x: CIE31</text>
<text x="1423" y="1079.2" font-size="20.3" fill="#f2f2f2" textLength="92.6" lengthAdjust="spacingAndGlyphs">0.3306</text>
<text x="1567.2" y="1079.2" font-size="20.3" fill="#f2f2f2" textLength="92.6" lengthAdjust="spacingAndGlyphs">0.3547</text>
<text x="1711.4" y="1079.2" font-size="20.3" fill="#f2f2f2" textLength="92.6" lengthAdjust="spacingAndGlyphs">0.3753</text>
<text x="1855.6" y="1079.2" font-size="20.3" fill="#f2f2f2" textLength="92.6" lengthAdjust="spacingAndGlyphs">0.3961</text>
<text x="1999.4" y="1079.2" font-size="20.3" fill="#f2f2f2" textLength="92.6" lengthAdjust="spacingAndGlyphs">0.4129</text>
<rect x="1152" y="1088.68" width="983" height="35.08" fill="#828282"/>
<text x="1176.5" y="1114.28" font-size="20.3" fill="#f2f2f2" font-weight="bold" textLength="115.7" lengthAdjust="spacingAndGlyphs">y: CIE31</text>
<text x="1423" y="1114.28" font-size="20.3" fill="#f2f2f2" textLength="92.6" lengthAdjust="spacingAndGlyphs">0.3654</text>
<text x="1567.2" y="1114.28" font-size="20.3" fill="#f2f2f2" textLength="92.6" lengthAdjust="spacingAndGlyphs">0.4049</text>
<text x="1711.4" y="1114.28" font-size="20.3" fill="#f2f2f2" textLength="92.6" lengthAdjust="spacingAndGlyphs">0.4404</text>
<text x="1855.6" y="1114.28" font-size="20.3" fill="#f2f2f2" textLength="92.6" lengthAdjust="spacingAndGlyphs">0.4748</text>
<text x="1999.4" y="1114.28" font-size="20.3" fill="#f2f2f2" textLength="92.6" lengthAdjust="spacingAndGlyphs">0.5025</text>
<text x="1176.5" y="1149.36" font-size="20.3" fill="#f2f2f2" font-weight="bold" transform="translate(1176.5 0) scale(1.3 1) translate(-1176.5 0)">Y</text>
<text x="1423" y="1149.36" font-size="20.3" fill="#f2f2f2" textLength="127" lengthAdjust="spacingAndGlyphs">285.4316</text>
<text x="1567.2" y="1149.36" font-size="20.3" fill="#f2f2f2" textLength="127" lengthAdjust="spacingAndGlyphs">280.3542</text>
<text x="1711.4" y="1149.36" font-size="20.3" fill="#f2f2f2" textLength="127" lengthAdjust="spacingAndGlyphs">275.9086</text>
<text x="1855.6" y="1149.36" font-size="20.3" fill="#f2f2f2" textLength="127" lengthAdjust="spacingAndGlyphs">272.8759</text>
<text x="1999.4" y="1149.36" font-size="20.3" fill="#f2f2f2" textLength="127" lengthAdjust="spacingAndGlyphs">270.5539</text>
<rect x="1152" y="1158.84" width="983" height="35.08" fill="#828282"/>
<text x="1176.5" y="1184.44" font-size="20.3" fill="#f2f2f2" font-weight="bold" textLength="211.2" lengthAdjust="spacingAndGlyphs">Target x:CIE31</text>
<text x="1423" y="1184.44" font-size="20.3" fill="#f2f2f2" textLength="92.6" lengthAdjust="spacingAndGlyphs">0.3344</text>
<text x="1567.2" y="1184.44" font-size="20.3" fill="#f2f2f2" textLength="92.6" lengthAdjust="spacingAndGlyphs">0.3564</text>
<text x="1711.4" y="1184.44" font-size="20.3" fill="#f2f2f2" textLength="92.6" lengthAdjust="spacingAndGlyphs">0.3773</text>
<text x="1855.6" y="1184.44" font-size="20.3" fill="#f2f2f2" textLength="92.6" lengthAdjust="spacingAndGlyphs">0.3969</text>
<text x="1999.4" y="1184.44" font-size="20.3" fill="#f2f2f2" textLength="92.6" lengthAdjust="spacingAndGlyphs">0.4193</text>
<text x="1176.5" y="1219.52" font-size="20.3" fill="#f2f2f2" font-weight="bold" textLength="211.2" lengthAdjust="spacingAndGlyphs">Target y:CIE31</text>
<text x="1423" y="1219.52" font-size="20.3" fill="#f2f2f2" textLength="92.6" lengthAdjust="spacingAndGlyphs">0.3648</text>
<text x="1567.2" y="1219.52" font-size="20.3" fill="#f2f2f2" textLength="92.6" lengthAdjust="spacingAndGlyphs">0.4013</text>
<text x="1711.4" y="1219.52" font-size="20.3" fill="#f2f2f2" textLength="92.6" lengthAdjust="spacingAndGlyphs">0.4358</text>
<text x="1855.6" y="1219.52" font-size="20.3" fill="#f2f2f2" textLength="92.6" lengthAdjust="spacingAndGlyphs">0.4682</text>
<text x="1999.4" y="1219.52" font-size="20.3" fill="#f2f2f2" textLength="92.6" lengthAdjust="spacingAndGlyphs">0.5053</text>
<rect x="1152" y="1229" width="983" height="35.08" fill="#828282"/>
<text x="1176.5" y="1254.6" font-size="20.3" fill="#f2f2f2" font-weight="bold" textLength="122.6" lengthAdjust="spacingAndGlyphs">Target Y</text>
<text x="1423" y="1254.6" font-size="20.3" fill="#f2f2f2" textLength="127" lengthAdjust="spacingAndGlyphs">279.1691</text>
<text x="1567.2" y="1254.6" font-size="20.3" fill="#f2f2f2" textLength="127" lengthAdjust="spacingAndGlyphs">274.2689</text>
<text x="1711.4" y="1254.6" font-size="20.3" fill="#f2f2f2" textLength="127" lengthAdjust="spacingAndGlyphs">270.5038</text>
<text x="1855.6" y="1254.6" font-size="20.3" fill="#f2f2f2" textLength="127" lengthAdjust="spacingAndGlyphs">267.5489</text>
<text x="1999.4" y="1254.6" font-size="20.3" fill="#f2f2f2" textLength="127" lengthAdjust="spacingAndGlyphs">264.4563</text>
<text x="1176.5" y="1289.68" font-size="20.3" fill="#f2f2f2" font-weight="bold" textLength="120.6" lengthAdjust="spacingAndGlyphs">ΔE 2000</text>
<text x="1423" y="1289.68" font-size="20.3" fill="#f2f2f2" textLength="92.6" lengthAdjust="spacingAndGlyphs">1.9523</text>
<text x="1567.2" y="1289.68" font-size="20.3" fill="#f2f2f2" textLength="92.6" lengthAdjust="spacingAndGlyphs">1.3610</text>
<text x="1711.4" y="1289.68" font-size="20.3" fill="#f2f2f2" textLength="92.6" lengthAdjust="spacingAndGlyphs">1.3105</text>
<text x="1855.6" y="1289.68" font-size="20.3" fill="#f2f2f2" textLength="92.6" lengthAdjust="spacingAndGlyphs">1.2164</text>
<text x="1999.4" y="1289.68" font-size="20.3" fill="#f2f2f2" textLength="92.6" lengthAdjust="spacingAndGlyphs">1.2438</text>
<rect x="1152" y="1299.16" width="983" height="35.08" fill="#828282"/>
<text x="1176.5" y="1324.76" font-size="20.3" fill="#f2f2f2" font-weight="bold" textLength="95.4" lengthAdjust="spacingAndGlyphs">ΔE ITP</text>
<text x="1423" y="1324.76" font-size="20.3" fill="#f2f2f2" textLength="92.6" lengthAdjust="spacingAndGlyphs">2.9848</text>
<text x="1567.2" y="1324.76" font-size="20.3" fill="#f2f2f2" textLength="92.6" lengthAdjust="spacingAndGlyphs">2.7361</text>
<text x="1711.4" y="1324.76" font-size="20.3" fill="#f2f2f2" textLength="92.6" lengthAdjust="spacingAndGlyphs">3.0291</text>
<text x="1855.6" y="1324.76" font-size="20.3" fill="#f2f2f2" textLength="92.6" lengthAdjust="spacingAndGlyphs">3.7684</text>
<text x="1999.4" y="1324.76" font-size="20.3" fill="#f2f2f2" textLength="92.6" lengthAdjust="spacingAndGlyphs">4.2317</text>
<text x="1486.4" y="1043.8" font-size="19.8" fill="#f2f2f2" text-anchor="middle" font-weight="bold" textLength="54" lengthAdjust="spacingAndGlyphs">20%</text>
<text x="1630.6" y="1043.8" font-size="19.8" fill="#f2f2f2" text-anchor="middle" font-weight="bold" textLength="54" lengthAdjust="spacingAndGlyphs">40%</text>
<text x="1774.7" y="1043.8" font-size="19.8" fill="#f2f2f2" text-anchor="middle" font-weight="bold" textLength="54" lengthAdjust="spacingAndGlyphs">60%</text>
<text x="1918.5" y="1043.8" font-size="19.8" fill="#f2f2f2" text-anchor="middle" font-weight="bold" textLength="54" lengthAdjust="spacingAndGlyphs">80%</text>
<text x="2062.7" y="1043.8" font-size="19.8" fill="#f2f2f2" text-anchor="middle" font-weight="bold" textLength="70" lengthAdjust="spacingAndGlyphs">100%</text>
<rect x="2134.6" y="1016" width="2.6" height="318.5" fill="#242424"/>
<rect x="1150.3" y="1014.9" width="1398.6" height="321.1" fill="none" stroke="#000" stroke-width="3"/>
<rect x="1150.3" y="1014.9" width="1398.6" height="321.1" fill="none" stroke="#fff" stroke-width="2.1" stroke-dasharray="2.2 3.34"/>
<rect x="1619" y="250" width="941" height="755" fill="#1c1c1c"/>
<rect x="1628" y="259" width="925" height="736" fill="#333333"/>
<rect x="1679" y="291" width="866.5" height="666" fill="#232323"/>
<text x="2088.4" y="284" font-size="19" fill="#e0e0e0" text-anchor="middle" textLength="114" lengthAdjust="spacingAndGlyphs">CIE 1976 u'v'</text>
<g clip-path="url(#cplot)"><g clip-path="url(#cloc)"><g><rect x="1733.9" y="303.5" width="45.7" height="4.6" fill="url(#c0)"/><rect x="1702.3" y="307.5" width="138.7" height="4.6" fill="url(#c1)"/><rect x="1693.2" y="311.5" width="188.3" height="4.6" fill="url(#c2)"/><rect x="1687.7" y="315.5" width="231.0" height="4.6" fill="url(#c3)"/><rect x="1684.0" y="319.5" width="270.5" height="4.6" fill="url(#c4)"/><rect x="1681.1" y="323.5" width="308.7" height="4.6" fill="url(#c5)"/><rect x="1679.5" y="327.5" width="345.3" height="4.6" fill="url(#c6)"/><rect x="1679.5" y="331.5" width="380.1" height="4.6" fill="url(#c7)"/><rect x="1679.5" y="335.5" width="414.9" height="4.6" fill="url(#c8)"/><rect x="1679.5" y="339.5" width="449.9" height="4.6" fill="url(#c9)"/><rect x="1679.5" y="343.5" width="484.8" height="4.6" fill="url(#c10)"/><rect x="1679.5" y="347.5" width="519.5" height="4.6" fill="url(#c11)"/><rect x="1679.5" y="351.5" width="554.2" height="4.6" fill="url(#c12)"/><rect x="1679.5" y="355.5" width="589.1" height="4.6" fill="url(#c13)"/><rect x="1679.5" y="359.5" width="623.8" height="4.6" fill="url(#c14)"/><rect x="1679.5" y="363.5" width="658.8" height="4.6" fill="url(#c15)"/><rect x="1679.5" y="367.5" width="693.7" height="4.6" fill="url(#c16)"/><rect x="1679.5" y="371.5" width="728.2" height="4.6" fill="url(#c17)"/><rect x="1679.5" y="375.5" width="762.8" height="4.6" fill="url(#c18)"/><rect x="1679.5" y="379.5" width="797.7" height="4.6" fill="url(#c19)"/><rect x="1679.5" y="383.5" width="832.3" height="4.6" fill="url(#c20)"/><rect x="1679.5" y="387.5" width="865.5" height="4.6" fill="url(#c21)"/><rect x="1679.5" y="391.5" width="865.5" height="4.6" fill="url(#c22)"/><rect x="1679.5" y="395.5" width="865.5" height="4.6" fill="url(#c23)"/><rect x="1679.6" y="399.5" width="865.4" height="4.6" fill="url(#c24)"/><rect x="1680.6" y="403.5" width="864.4" height="4.6" fill="url(#c25)"/><rect x="1681.6" y="407.5" width="863.4" height="4.6" fill="url(#c26)"/><rect x="1682.6" y="411.5" width="862.4" height="4.6" fill="url(#c27)"/><rect x="1683.7" y="415.5" width="861.3" height="4.6" fill="url(#c28)"/><rect x="1684.8" y="419.5" width="860.2" height="4.6" fill="url(#c29)"/><rect x="1685.9" y="423.5" width="859.1" height="4.6" fill="url(#c30)"/><rect x="1687.1" y="427.5" width="857.9" height="4.6" fill="url(#c31)"/><rect x="1688.3" y="431.5" width="856.7" height="4.6" fill="url(#c32)"/><rect x="1689.6" y="435.5" width="854.4" height="4.6" fill="url(#c33)"/><rect x="1690.8" y="439.5" width="849.2" height="4.6" fill="url(#c34)"/><rect x="1692.2" y="443.5" width="844.0" height="4.6" fill="url(#c35)"/><rect x="1693.5" y="447.5" width="838.8" height="4.6" fill="url(#c36)"/><rect x="1694.9" y="451.5" width="833.5" height="4.6" fill="url(#c37)"/><rect x="1696.3" y="455.5" width="828.2" height="4.6" fill="url(#c38)"/><rect x="1697.7" y="459.5" width="822.9" height="4.6" fill="url(#c39)"/><rect x="1699.2" y="463.5" width="817.6" height="4.6" fill="url(#c40)"/><rect x="1700.6" y="467.5" width="812.2" height="4.6" fill="url(#c41)"/><rect x="1702.1" y="471.5" width="806.8" height="4.6" fill="url(#c42)"/><rect x="1703.6" y="475.5" width="801.4" height="4.6" fill="url(#c43)"/><rect x="1705.1" y="479.5" width="796.0" height="4.6" fill="url(#c44)"/><rect x="1706.7" y="483.5" width="790.6" height="4.6" fill="url(#c45)"/><rect x="1708.3" y="487.5" width="785.1" height="4.6" fill="url(#c46)"/><rect x="1709.9" y="491.5" width="779.6" height="4.6" fill="url(#c47)"/><rect x="1711.5" y="495.5" width="774.1" height="4.6" fill="url(#c48)"/><rect x="1713.1" y="499.5" width="768.6" height="4.6" fill="url(#c49)"/><rect x="1714.7" y="503.5" width="763.1" height="4.6" fill="url(#c50)"/><rect x="1716.4" y="507.5" width="757.5" height="4.6" fill="url(#c51)"/><rect x="1718.0" y="511.5" width="752.0" height="4.6" fill="url(#c52)"/><rect x="1719.7" y="515.5" width="746.4" height="4.6" fill="url(#c53)"/><rect x="1721.4" y="519.5" width="740.8" height="4.6" fill="url(#c54)"/><rect x="1723.1" y="523.5" width="735.2" height="4.6" fill="url(#c55)"/><rect x="1724.9" y="527.5" width="729.6" height="4.6" fill="url(#c56)"/><rect x="1726.7" y="531.5" width="723.9" height="4.6" fill="url(#c57)"/><rect x="1728.4" y="535.5" width="718.2" height="4.6" fill="url(#c58)"/><rect x="1730.2" y="539.5" width="712.6" height="4.6" fill="url(#c59)"/><rect x="1732.1" y="543.5" width="706.8" height="4.6" fill="url(#c60)"/><rect x="1733.9" y="547.5" width="701.1" height="4.6" fill="url(#c61)"/><rect x="1735.7" y="551.5" width="695.4" height="4.6" fill="url(#c62)"/><rect x="1737.6" y="555.5" width="689.6" height="4.6" fill="url(#c63)"/><rect x="1739.5" y="559.5" width="683.8" height="4.6" fill="url(#c64)"/><rect x="1741.5" y="563.5" width="678.0" height="4.6" fill="url(#c65)"/><rect x="1743.4" y="567.5" width="672.1" height="4.6" fill="url(#c66)"/><rect x="1745.4" y="571.5" width="666.2" height="4.6" fill="url(#c67)"/><rect x="1747.4" y="575.5" width="660.3" height="4.6" fill="url(#c68)"/><rect x="1749.4" y="579.5" width="654.4" height="4.6" fill="url(#c69)"/><rect x="1751.5" y="583.5" width="648.5" height="4.6" fill="url(#c70)"/><rect x="1753.6" y="587.5" width="642.5" height="4.6" fill="url(#c71)"/><rect x="1755.7" y="591.5" width="636.5" height="4.6" fill="url(#c72)"/><rect x="1757.8" y="595.5" width="630.5" height="4.6" fill="url(#c73)"/><rect x="1759.9" y="599.5" width="624.5" height="4.6" fill="url(#c74)"/><rect x="1762.1" y="603.5" width="618.4" height="4.6" fill="url(#c75)"/><rect x="1764.3" y="607.5" width="612.3" height="4.6" fill="url(#c76)"/><rect x="1766.5" y="611.5" width="606.2" height="4.6" fill="url(#c77)"/><rect x="1768.7" y="615.5" width="600.1" height="4.6" fill="url(#c78)"/><rect x="1771.0" y="619.5" width="594.0" height="4.6" fill="url(#c79)"/><rect x="1773.2" y="623.5" width="587.8" height="4.6" fill="url(#c80)"/><rect x="1775.5" y="627.5" width="581.7" height="4.6" fill="url(#c81)"/><rect x="1777.8" y="631.5" width="575.5" height="4.6" fill="url(#c82)"/><rect x="1780.1" y="635.5" width="569.3" height="4.6" fill="url(#c83)"/><rect x="1782.4" y="639.5" width="563.1" height="4.6" fill="url(#c84)"/><rect x="1784.7" y="643.5" width="556.9" height="4.6" fill="url(#c85)"/><rect x="1787.1" y="647.5" width="550.6" height="4.6" fill="url(#c86)"/><rect x="1789.4" y="651.5" width="544.4" height="4.6" fill="url(#c87)"/><rect x="1791.8" y="655.5" width="538.1" height="4.6" fill="url(#c88)"/><rect x="1794.2" y="659.5" width="531.8" height="4.6" fill="url(#c89)"/><rect x="1796.6" y="663.5" width="525.6" height="4.6" fill="url(#c90)"/><rect x="1799.0" y="667.5" width="519.3" height="4.6" fill="url(#c91)"/><rect x="1801.4" y="671.5" width="512.9" height="4.6" fill="url(#c92)"/><rect x="1803.8" y="675.5" width="506.6" height="4.6" fill="url(#c93)"/><rect x="1806.3" y="679.5" width="500.3" height="4.6" fill="url(#c94)"/><rect x="1808.7" y="683.5" width="493.9" height="4.6" fill="url(#c95)"/><rect x="1811.2" y="687.5" width="487.6" height="4.6" fill="url(#c96)"/><rect x="1813.7" y="691.5" width="481.2" height="4.6" fill="url(#c97)"/><rect x="1816.2" y="695.5" width="474.8" height="4.6" fill="url(#c98)"/><rect x="1818.7" y="699.5" width="468.4" height="4.6" fill="url(#c99)"/><rect x="1821.2" y="703.5" width="461.9" height="4.6" fill="url(#c100)"/><rect x="1823.8" y="707.5" width="455.5" height="4.6" fill="url(#c101)"/><rect x="1826.4" y="711.5" width="449.0" height="4.6" fill="url(#c102)"/><rect x="1828.9" y="715.5" width="442.6" height="4.6" fill="url(#c103)"/><rect x="1831.6" y="719.5" width="436.1" height="4.6" fill="url(#c104)"/><rect x="1834.2" y="723.5" width="429.5" height="4.6" fill="url(#c105)"/><rect x="1836.8" y="727.5" width="423.0" height="4.6" fill="url(#c106)"/><rect x="1839.5" y="731.5" width="416.4" height="4.6" fill="url(#c107)"/><rect x="1842.2" y="735.5" width="409.8" height="4.6" fill="url(#c108)"/><rect x="1844.9" y="739.5" width="403.2" height="4.6" fill="url(#c109)"/><rect x="1847.7" y="743.5" width="396.6" height="4.6" fill="url(#c110)"/><rect x="1850.5" y="747.5" width="389.9" height="4.6" fill="url(#c111)"/><rect x="1853.3" y="751.5" width="383.2" height="4.6" fill="url(#c112)"/><rect x="1856.1" y="755.5" width="376.5" height="4.6" fill="url(#c113)"/><rect x="1859.0" y="759.5" width="369.7" height="4.6" fill="url(#c114)"/><rect x="1861.9" y="763.5" width="362.9" height="4.6" fill="url(#c115)"/><rect x="1864.8" y="767.5" width="356.1" height="4.6" fill="url(#c116)"/><rect x="1867.7" y="771.5" width="349.3" height="4.6" fill="url(#c117)"/><rect x="1870.7" y="775.5" width="342.4" height="4.6" fill="url(#c118)"/><rect x="1873.7" y="779.5" width="335.5" height="4.6" fill="url(#c119)"/><rect x="1876.8" y="783.5" width="328.6" height="4.6" fill="url(#c120)"/><rect x="1879.9" y="787.5" width="321.6" height="4.6" fill="url(#c121)"/><rect x="1883.0" y="791.5" width="314.6" height="4.6" fill="url(#c122)"/><rect x="1886.1" y="795.5" width="307.5" height="4.6" fill="url(#c123)"/><rect x="1889.3" y="799.5" width="300.5" height="4.6" fill="url(#c124)"/><rect x="1892.5" y="803.5" width="293.4" height="4.6" fill="url(#c125)"/><rect x="1895.7" y="807.5" width="286.3" height="4.6" fill="url(#c126)"/><rect x="1899.0" y="811.5" width="279.1" height="4.6" fill="url(#c127)"/><rect x="1902.4" y="815.5" width="271.8" height="4.6" fill="url(#c128)"/><rect x="1905.7" y="819.5" width="264.6" height="4.6" fill="url(#c129)"/><rect x="1909.2" y="823.5" width="257.2" height="4.6" fill="url(#c130)"/><rect x="1912.7" y="827.5" width="249.8" height="4.6" fill="url(#c131)"/><rect x="1916.2" y="831.5" width="242.4" height="4.6" fill="url(#c132)"/><rect x="1919.9" y="835.5" width="234.8" height="4.6" fill="url(#c133)"/><rect x="1923.6" y="839.5" width="227.2" height="4.6" fill="url(#c134)"/><rect x="1927.5" y="843.5" width="219.5" height="4.6" fill="url(#c135)"/><rect x="1931.4" y="847.5" width="211.7" height="4.6" fill="url(#c136)"/><rect x="1935.4" y="851.5" width="203.8" height="4.6" fill="url(#c137)"/><rect x="1939.5" y="855.5" width="195.7" height="4.6" fill="url(#c138)"/><rect x="1943.8" y="859.5" width="187.6" height="4.6" fill="url(#c139)"/><rect x="1948.0" y="863.5" width="179.4" height="4.6" fill="url(#c140)"/><rect x="1952.4" y="867.5" width="171.2" height="4.6" fill="url(#c141)"/><rect x="1956.8" y="871.5" width="162.9" height="4.6" fill="url(#c142)"/><rect x="1961.3" y="875.5" width="154.5" height="4.6" fill="url(#c143)"/><rect x="1965.8" y="879.5" width="146.1" height="4.6" fill="url(#c144)"/><rect x="1970.5" y="883.5" width="137.5" height="4.6" fill="url(#c145)"/><rect x="1975.3" y="887.5" width="128.9" height="4.6" fill="url(#c146)"/><rect x="1980.1" y="891.5" width="120.2" height="4.6" fill="url(#c147)"/><rect x="1984.9" y="895.5" width="111.4" height="4.6" fill="url(#c148)"/><rect x="1989.8" y="899.5" width="102.7" height="4.6" fill="url(#c149)"/><rect x="1994.7" y="903.5" width="93.9" height="4.6" fill="url(#c150)"/><rect x="1999.5" y="907.5" width="85.1" height="4.6" fill="url(#c151)"/><rect x="2004.4" y="911.5" width="76.4" height="4.6" fill="url(#c152)"/><rect x="2009.2" y="915.5" width="67.7" height="4.6" fill="url(#c153)"/><rect x="2013.9" y="919.5" width="59.1" height="4.6" fill="url(#c154)"/><rect x="2018.6" y="923.5" width="50.5" height="4.6" fill="url(#c155)"/><rect x="2023.4" y="927.5" width="41.8" height="4.6" fill="url(#c156)"/><rect x="2028.4" y="931.5" width="32.9" height="4.6" fill="url(#c157)"/><rect x="2033.8" y="935.5" width="23.5" height="4.6" fill="url(#c158)"/></g>
<path d="M1600 250H2600V1000H1600Z M2328.5 377.6L1859.0 333.5L1931.7 783.3Z" fill="#000" fill-opacity="0.4" fill-rule="evenodd"/>
</g></g>
<rect x="1679" y="291" width="866.5" height="666" fill="none" stroke="#969696" stroke-width="2"/>
<line x1="1678.8" y1="957" x2="1678.8" y2="965" stroke="#969696" stroke-width="2"/>
<text x="1678.8" y="986.3" font-size="19.5" fill="#e0e0e0" text-anchor="middle">0</text>
<line x1="1670.5" y1="958.8" x2="1679" y2="958.8" stroke="#969696" stroke-width="2"/>
<text x="1670" y="965.8" font-size="19.5" fill="#e0e0e0" text-anchor="end">0</text>
<line x1="1750.88" y1="957" x2="1750.88" y2="965" stroke="#969696" stroke-width="2"/>
<text x="1750.88" y="986.3" font-size="19.5" fill="#e0e0e0" text-anchor="middle" textLength="37.95" lengthAdjust="spacingAndGlyphs">0.05</text>
<line x1="1670.5" y1="903.22" x2="1679" y2="903.22" stroke="#969696" stroke-width="2"/>
<text x="1670" y="910.22" font-size="19.5" fill="#e0e0e0" text-anchor="end" textLength="37.95" lengthAdjust="spacingAndGlyphs">0.05</text>
<line x1="1822.96" y1="957" x2="1822.96" y2="965" stroke="#969696" stroke-width="2"/>
<text x="1822.96" y="986.3" font-size="19.5" fill="#e0e0e0" text-anchor="middle" textLength="27.11" lengthAdjust="spacingAndGlyphs">0.1</text>
<line x1="1670.5" y1="847.64" x2="1679" y2="847.64" stroke="#969696" stroke-width="2"/>
<text x="1670" y="854.64" font-size="19.5" fill="#e0e0e0" text-anchor="end" textLength="27.11" lengthAdjust="spacingAndGlyphs">0.1</text>
<line x1="1895.04" y1="957" x2="1895.04" y2="965" stroke="#969696" stroke-width="2"/>
<text x="1895.04" y="986.3" font-size="19.5" fill="#e0e0e0" text-anchor="middle" textLength="37.95" lengthAdjust="spacingAndGlyphs">0.15</text>
<line x1="1670.5" y1="792.06" x2="1679" y2="792.06" stroke="#969696" stroke-width="2"/>
<text x="1670" y="799.06" font-size="19.5" fill="#e0e0e0" text-anchor="end" textLength="37.95" lengthAdjust="spacingAndGlyphs">0.15</text>
<line x1="1967.12" y1="957" x2="1967.12" y2="965" stroke="#969696" stroke-width="2"/>
<text x="1967.12" y="986.3" font-size="19.5" fill="#e0e0e0" text-anchor="middle" textLength="27.11" lengthAdjust="spacingAndGlyphs">0.2</text>
<line x1="1670.5" y1="736.48" x2="1679" y2="736.48" stroke="#969696" stroke-width="2"/>
<text x="1670" y="743.48" font-size="19.5" fill="#e0e0e0" text-anchor="end" textLength="27.11" lengthAdjust="spacingAndGlyphs">0.2</text>
<line x1="2039.2" y1="957" x2="2039.2" y2="965" stroke="#969696" stroke-width="2"/>
<text x="2039.2" y="986.3" font-size="19.5" fill="#e0e0e0" text-anchor="middle" textLength="37.95" lengthAdjust="spacingAndGlyphs">0.25</text>
<line x1="1670.5" y1="680.9" x2="1679" y2="680.9" stroke="#969696" stroke-width="2"/>
<text x="1670" y="687.9" font-size="19.5" fill="#e0e0e0" text-anchor="end" textLength="37.95" lengthAdjust="spacingAndGlyphs">0.25</text>
<line x1="2111.28" y1="957" x2="2111.28" y2="965" stroke="#969696" stroke-width="2"/>
<text x="2111.28" y="986.3" font-size="19.5" fill="#e0e0e0" text-anchor="middle" textLength="27.11" lengthAdjust="spacingAndGlyphs">0.3</text>
<line x1="1670.5" y1="625.32" x2="1679" y2="625.32" stroke="#969696" stroke-width="2"/>
<text x="1670" y="632.32" font-size="19.5" fill="#e0e0e0" text-anchor="end" textLength="27.11" lengthAdjust="spacingAndGlyphs">0.3</text>
<line x1="2183.36" y1="957" x2="2183.36" y2="965" stroke="#969696" stroke-width="2"/>
<text x="2183.36" y="986.3" font-size="19.5" fill="#e0e0e0" text-anchor="middle" textLength="37.95" lengthAdjust="spacingAndGlyphs">0.35</text>
<line x1="1670.5" y1="569.74" x2="1679" y2="569.74" stroke="#969696" stroke-width="2"/>
<text x="1670" y="576.74" font-size="19.5" fill="#e0e0e0" text-anchor="end" textLength="37.95" lengthAdjust="spacingAndGlyphs">0.35</text>
<line x1="2255.44" y1="957" x2="2255.44" y2="965" stroke="#969696" stroke-width="2"/>
<text x="2255.44" y="986.3" font-size="19.5" fill="#e0e0e0" text-anchor="middle" textLength="27.11" lengthAdjust="spacingAndGlyphs">0.4</text>
<line x1="1670.5" y1="514.16" x2="1679" y2="514.16" stroke="#969696" stroke-width="2"/>
<text x="1670" y="521.16" font-size="19.5" fill="#e0e0e0" text-anchor="end" textLength="27.11" lengthAdjust="spacingAndGlyphs">0.4</text>
<line x1="2327.52" y1="957" x2="2327.52" y2="965" stroke="#969696" stroke-width="2"/>
<text x="2327.52" y="986.3" font-size="19.5" fill="#e0e0e0" text-anchor="middle" textLength="37.95" lengthAdjust="spacingAndGlyphs">0.45</text>
<line x1="1670.5" y1="458.58" x2="1679" y2="458.58" stroke="#969696" stroke-width="2"/>
<text x="1670" y="465.58" font-size="19.5" fill="#e0e0e0" text-anchor="end" textLength="37.95" lengthAdjust="spacingAndGlyphs">0.45</text>
<line x1="2399.6" y1="957" x2="2399.6" y2="965" stroke="#969696" stroke-width="2"/>
<text x="2399.6" y="986.3" font-size="19.5" fill="#e0e0e0" text-anchor="middle" textLength="27.11" lengthAdjust="spacingAndGlyphs">0.5</text>
<line x1="1670.5" y1="403" x2="1679" y2="403" stroke="#969696" stroke-width="2"/>
<text x="1670" y="410" font-size="19.5" fill="#e0e0e0" text-anchor="end" textLength="27.11" lengthAdjust="spacingAndGlyphs">0.5</text>
<line x1="2471.68" y1="957" x2="2471.68" y2="965" stroke="#969696" stroke-width="2"/>
<text x="2471.68" y="986.3" font-size="19.5" fill="#e0e0e0" text-anchor="middle" textLength="37.95" lengthAdjust="spacingAndGlyphs">0.55</text>
<line x1="1670.5" y1="347.42" x2="1679" y2="347.42" stroke="#969696" stroke-width="2"/>
<text x="1670" y="354.42" font-size="19.5" fill="#e0e0e0" text-anchor="end" textLength="37.95" lengthAdjust="spacingAndGlyphs">0.55</text>
<rect x="2020.2" y="416.2" width="17.8" height="17.8" fill="none" stroke="#fff" stroke-width="2"/>
<rect x="2092.3" y="403.2" width="17.8" height="17.8" fill="none" stroke="#fff" stroke-width="2"/>
<rect x="2158.7" y="394.1" width="17.8" height="17.8" fill="none" stroke="#fff" stroke-width="2"/>
<rect x="2232.3" y="381.2" width="17.8" height="17.8" fill="none" stroke="#fff" stroke-width="2"/>
<rect x="2319.3" y="366" width="17.8" height="17.8" fill="none" stroke="#fff" stroke-width="2"/>
<rect x="1926.1" y="397.6" width="17.8" height="17.8" fill="none" stroke="#fff" stroke-width="2"/>
<rect x="1902.6" y="375.4" width="17.8" height="17.8" fill="none" stroke="#fff" stroke-width="2"/>
<rect x="1882.1" y="355" width="17.8" height="17.8" fill="none" stroke="#fff" stroke-width="2"/>
<rect x="1865.6" y="338.4" width="17.8" height="17.8" fill="none" stroke="#fff" stroke-width="2"/>
<rect x="1849.2" y="322.1" width="17.8" height="17.8" fill="none" stroke="#fff" stroke-width="2"/>
<rect x="1950" y="467.5" width="17.8" height="17.8" fill="none" stroke="#fff" stroke-width="2"/>
<rect x="1946.6" y="517.2" width="17.8" height="17.8" fill="none" stroke="#fff" stroke-width="2"/>
<rect x="1941.3" y="578.1" width="17.8" height="17.8" fill="none" stroke="#fff" stroke-width="2"/>
<rect x="1934.3" y="655.5" width="17.8" height="17.8" fill="none" stroke="#fff" stroke-width="2"/>
<rect x="1923.1" y="771.4" width="17.8" height="17.8" fill="none" stroke="#fff" stroke-width="2"/>
<rect x="1937.8" y="431.2" width="17.8" height="17.8" fill="none" stroke="#fff" stroke-width="2"/>
<rect x="1921.2" y="432.6" width="17.8" height="17.8" fill="none" stroke="#fff" stroke-width="2"/>
<rect x="1902.6" y="436" width="17.8" height="17.8" fill="none" stroke="#fff" stroke-width="2"/>
<rect x="1886.2" y="438.1" width="17.8" height="17.8" fill="none" stroke="#fff" stroke-width="2"/>
<rect x="1869.1" y="442.1" width="17.8" height="17.8" fill="none" stroke="#fff" stroke-width="2"/>
<rect x="1978.2" y="449" width="17.8" height="17.8" fill="none" stroke="#fff" stroke-width="2"/>
<rect x="2004.1" y="475" width="17.8" height="17.8" fill="none" stroke="#fff" stroke-width="2"/>
<rect x="2029.6" y="502.6" width="17.8" height="17.8" fill="none" stroke="#fff" stroke-width="2"/>
<rect x="2064.8" y="537.6" width="17.8" height="17.8" fill="none" stroke="#fff" stroke-width="2"/>
<rect x="2109.1" y="580" width="17.8" height="17.8" fill="none" stroke="#fff" stroke-width="2"/>
<rect x="1958" y="402.6" width="17.8" height="17.8" fill="none" stroke="#fff" stroke-width="2"/>
<rect x="1959.6" y="381.4" width="17.8" height="17.8" fill="none" stroke="#fff" stroke-width="2"/>
<rect x="1960.9" y="363.4" width="17.8" height="17.8" fill="none" stroke="#fff" stroke-width="2"/>
<rect x="1962.3" y="348" width="17.8" height="17.8" fill="none" stroke="#fff" stroke-width="2"/>
<rect x="1963.2" y="333.1" width="17.8" height="17.8" fill="none" stroke="#fff" stroke-width="2"/>
<rect x="1954.1" y="427" width="17.6" height="17.6" fill="none" stroke="#000" stroke-width="2.6"/>
<circle cx="2020.5" cy="425.1" r="5.6" fill="#c08787" stroke="#000" stroke-width="1.6"/>
<circle cx="2086.6" cy="413.4" r="5.6" fill="#c06565" stroke="#000" stroke-width="1.6"/>
<circle cx="2149.4" cy="400.9" r="5.6" fill="#c04a4a" stroke="#000" stroke-width="1.6"/>
<circle cx="2228.6" cy="389.9" r="5.6" fill="#c03131" stroke="#000" stroke-width="1.6"/>
<circle cx="2324.7" cy="373.6" r="5.6" fill="#c00000" stroke="#000" stroke-width="1.6"/>
<circle cx="1933.7" cy="406.5" r="5.6" fill="#99c099" stroke="#000" stroke-width="1.6"/>
<circle cx="1913.7" cy="382.5" r="5.6" fill="#7ac07a" stroke="#000" stroke-width="1.6"/>
<circle cx="1896.6" cy="364.5" r="5.6" fill="#5ec05e" stroke="#000" stroke-width="1.6"/>
<circle cx="1881.5" cy="345.5" r="5.6" fill="#40c040" stroke="#000" stroke-width="1.6"/>
<circle cx="1869.1" cy="336.4" r="5.6" fill="#00c000" stroke="#000" stroke-width="1.6"/>
<circle cx="1955.5" cy="478.3" r="5.6" fill="#9a9ac0" stroke="#000" stroke-width="1.6"/>
<circle cx="1950.7" cy="528.3" r="5.6" fill="#7b7bc0" stroke="#000" stroke-width="1.6"/>
<circle cx="1944.6" cy="583.6" r="5.6" fill="#5e5ec0" stroke="#000" stroke-width="1.6"/>
<circle cx="1937.6" cy="657.3" r="5.6" fill="#4040c0" stroke="#000" stroke-width="1.6"/>
<circle cx="1926.4" cy="763.8" r="5.6" fill="#0000c0" stroke="#000" stroke-width="1.6"/>
<circle cx="1942.6" cy="439.1" r="5.6" fill="#a9c0c0" stroke="#000" stroke-width="1.6"/>
<circle cx="1928" cy="441.3" r="5.6" fill="#91c0c0" stroke="#000" stroke-width="1.6"/>
<circle cx="1913.7" cy="445.5" r="5.6" fill="#76c0c0" stroke="#000" stroke-width="1.6"/>
<circle cx="1900.5" cy="447.6" r="5.6" fill="#55c0c0" stroke="#000" stroke-width="1.6"/>
<circle cx="1883.5" cy="448.9" r="5.6" fill="#00c0c0" stroke="#000" stroke-width="1.6"/>
<circle cx="1979.6" cy="459.9" r="5.6" fill="#c0a4c0" stroke="#000" stroke-width="1.6"/>
<circle cx="2003.6" cy="487.3" r="5.6" fill="#c089c0" stroke="#000" stroke-width="1.6"/>
<circle cx="2025.6" cy="513.2" r="5.6" fill="#c06dc0" stroke="#000" stroke-width="1.6"/>
<circle cx="2055.5" cy="550.4" r="5.6" fill="#c04cc0" stroke="#000" stroke-width="1.6"/>
<circle cx="2097.4" cy="600.1" r="5.6" fill="#c000c0" stroke="#000" stroke-width="1.6"/>
<circle cx="1961.6" cy="412.4" r="5.6" fill="#c0c0a4" stroke="#000" stroke-width="1.6"/>
<circle cx="1964.6" cy="390" r="5.6" fill="#c0c089" stroke="#000" stroke-width="1.6"/>
<circle cx="1964.6" cy="371.6" r="5.6" fill="#c0c06d" stroke="#000" stroke-width="1.6"/>
<circle cx="1966.4" cy="355.2" r="5.6" fill="#c0c04c" stroke="#000" stroke-width="1.6"/>
<circle cx="1968.6" cy="343.3" r="5.6" fill="#c0c000" stroke="#000" stroke-width="1.6"/>
<circle cx="1961.8" cy="436.4" r="5.6" fill="#fff" stroke="#000" stroke-width="1.6"/>
<rect x="2245.6" y="747.1" width="294.6" height="202.7" fill="#333"/>
<rect x="2249.2" y="750.9" width="287" height="195" fill="#9a9a9a"/>
<g><rect x="2251.2" y="753.0" width="283.2" height="6.5" fill="url(#i0)"/><rect x="2251.2" y="759.0" width="283.2" height="6.5" fill="url(#i1)"/><rect x="2251.2" y="765.0" width="283.2" height="6.5" fill="url(#i2)"/><rect x="2251.2" y="771.0" width="283.2" height="6.5" fill="url(#i3)"/><rect x="2251.2" y="777.0" width="283.2" height="6.5" fill="url(#i4)"/><rect x="2251.2" y="783.0" width="283.2" height="6.5" fill="url(#i5)"/><rect x="2251.2" y="789.0" width="283.2" height="6.5" fill="url(#i6)"/><rect x="2251.2" y="795.0" width="283.2" height="6.5" fill="url(#i7)"/><rect x="2251.2" y="801.0" width="283.2" height="6.5" fill="url(#i8)"/><rect x="2251.2" y="807.0" width="283.2" height="6.5" fill="url(#i9)"/><rect x="2251.2" y="813.0" width="283.2" height="6.5" fill="url(#i10)"/><rect x="2251.2" y="819.0" width="283.2" height="6.5" fill="url(#i11)"/><rect x="2251.2" y="825.0" width="283.2" height="6.5" fill="url(#i12)"/><rect x="2251.2" y="831.0" width="283.2" height="6.5" fill="url(#i13)"/><rect x="2251.2" y="837.0" width="283.2" height="6.5" fill="url(#i14)"/><rect x="2251.2" y="843.0" width="283.2" height="6.5" fill="url(#i15)"/><rect x="2251.2" y="849.0" width="283.2" height="6.5" fill="url(#i16)"/><rect x="2251.2" y="855.0" width="283.2" height="6.5" fill="url(#i17)"/><rect x="2251.2" y="861.0" width="283.2" height="6.5" fill="url(#i18)"/><rect x="2251.2" y="867.0" width="283.2" height="6.5" fill="url(#i19)"/><rect x="2251.2" y="873.0" width="283.2" height="6.5" fill="url(#i20)"/><rect x="2251.2" y="879.0" width="283.2" height="6.5" fill="url(#i21)"/><rect x="2251.2" y="885.0" width="283.2" height="6.5" fill="url(#i22)"/><rect x="2251.2" y="891.0" width="283.2" height="6.5" fill="url(#i23)"/><rect x="2251.2" y="897.0" width="283.2" height="6.5" fill="url(#i24)"/><rect x="2251.2" y="903.0" width="283.2" height="6.5" fill="url(#i25)"/><rect x="2251.2" y="909.0" width="283.2" height="6.5" fill="url(#i26)"/><rect x="2251.2" y="915.0" width="283.2" height="6.5" fill="url(#i27)"/><rect x="2251.2" y="921.0" width="283.2" height="6.5" fill="url(#i28)"/><rect x="2251.2" y="927.0" width="283.2" height="6.5" fill="url(#i29)"/><rect x="2251.2" y="933.0" width="283.2" height="6.5" fill="url(#i30)"/><rect x="2251.2" y="939.0" width="283.2" height="5.5" fill="url(#i31)"/></g>
<path d="M2251.2 753L2534.4 753L2534.4 923.85L2251.2 773.45Z" fill="#000" fill-opacity="0.4"/>
<rect x="2383.3" y="838.5" width="18" height="18" fill="none" stroke="#fff" stroke-width="2"/>
<circle cx="2354.7" cy="858.5" r="5.6" fill="#c0c000" stroke="#000" stroke-width="1.6"/>
<rect x="300" y="1434.5" width="2260" height="94" fill="url(#strip)"/>
<rect x="301.5" y="1435" width="67.5" height="91.5" fill="url(#bbtn)" rx="6"/>
<circle cx="335" cy="1449" r="11.5" fill="#6e6e6e"/>
<path d="M328.5 1452H341.5L335 1444.5Z" fill="#222"/>
<rect x="309.3" y="1474" width="52.2" height="45" fill="#ffff00" rx="5" stroke="#d8d800" stroke-width="1.2"/>
<rect x="378" y="1435" width="225" height="91.5" fill="url(#bbtn)" rx="6"/>
<rect x="385.7" y="1443.2" width="210" height="53.2" fill="#c0c0a5" rx="6" stroke="#8f8f78" stroke-width="1.4"/>
<text x="490.7" y="1520" font-size="16.2" fill="#222" text-anchor="middle" font-weight="bold" textLength="31.13" lengthAdjust="spacingAndGlyphs">20%</text>
<rect x="606" y="1435" width="225" height="91.5" fill="url(#bbtn)" rx="6"/>
<rect x="613.7" y="1443.2" width="210" height="53.2" fill="#c1c087" rx="6" stroke="#8c8b5c" stroke-width="1.4"/>
<text x="718.7" y="1520" font-size="16.2" fill="#222" text-anchor="middle" font-weight="bold" textLength="31.13" lengthAdjust="spacingAndGlyphs">40%</text>
<rect x="834" y="1435" width="225" height="91.5" fill="url(#bbtn)" rx="6"/>
<rect x="841.7" y="1443.2" width="210" height="53.2" fill="#c0be6b" rx="6" stroke="#8a8845" stroke-width="1.4"/>
<text x="946.7" y="1520" font-size="16.2" fill="#222" text-anchor="middle" font-weight="bold" textLength="31.13" lengthAdjust="spacingAndGlyphs">60%</text>
<rect x="1062" y="1435" width="225" height="91.5" fill="url(#bbtn)" rx="6"/>
<rect x="1069.7" y="1443.2" width="210" height="53.2" fill="#c0c04b" rx="6" stroke="#8a8a2c" stroke-width="1.4"/>
<text x="1174.7" y="1520" font-size="16.2" fill="#222" text-anchor="middle" font-weight="bold" textLength="31.13" lengthAdjust="spacingAndGlyphs">80%</text>
<rect x="1290" y="1435" width="225" height="91.5" fill="url(#bsel)" rx="6"/>
<rect x="1297.7" y="1443.2" width="210" height="53.2" fill="#c3c200" rx="6" stroke="#8a8a00" stroke-width="1.4"/>
<text x="1402.7" y="1520" font-size="16.2" fill="#fff" text-anchor="middle" font-weight="bold" textLength="39.78" lengthAdjust="spacingAndGlyphs">100%</text>
<rect x="2075.7" y="1435" width="71.8" height="93" fill="url(#stp)" rx="7"/>
<line x1="2076" y1="1462.3" x2="2147.3" y2="1462.3" stroke="#4a4a4a" stroke-width="1.6"/>
<circle cx="2111.7" cy="1449.1" r="11.5" fill="#888888"/>
<path d="M2104.5 1452.5H2119L2111.7 1444.5Z" fill="#2e2e2e"/>
<rect x="2089.3" y="1472.8" width="44.3" height="44" fill="url(#stpb)" rx="6" stroke="#2e2e2e" stroke-width="2.6"/>
<rect x="2101.2" y="1484.7" width="20.5" height="20.1" fill="url(#blk)"/>
<rect x="2148.5" y="1434.5" width="411.5" height="94" fill="#2c2c2c"/>
<rect x="2149.8" y="1435" width="67.6" height="44" fill="url(#rb1)" rx="4"/>
<circle cx="2184.6" cy="1455.3" r="13.6" fill="url(#tcir)" fill-opacity="0.8"/>
<rect x="2219.2" y="1435" width="66" height="44" fill="url(#rb1)" rx="4"/>
<circle cx="2252.6" cy="1455.3" r="13.6" fill="url(#tcir)" fill-opacity="0.8"/>
<rect x="2287" y="1435" width="65.5" height="44" fill="url(#rb1)" rx="4"/>
<circle cx="2319.6" cy="1455.3" r="13.6" fill="url(#tcir)" fill-opacity="0.8"/>
<rect x="2354.3" y="1435" width="65.6" height="44" fill="url(#rb1)" rx="4"/>
<circle cx="2386.7" cy="1455.3" r="13.6" fill="url(#tcir)" fill-opacity="0.8"/>
<rect x="2421.7" y="1435" width="65.5" height="44" fill="url(#rb1)" rx="4"/>
<circle cx="2454" cy="1455.3" r="13.6" fill="url(#tcir)" fill-opacity="0.8"/>
<rect x="2489" y="1435" width="72" height="44" fill="url(#rb1)" rx="4"/>
<circle cx="2522.4" cy="1455.3" r="13.6" fill="url(#tcir)" fill-opacity="0.8"/>
<rect x="2149.8" y="1480.8" width="202.6" height="46.5" fill="url(#rb2)" rx="4"/>
<rect x="2354.3" y="1480.8" width="210" height="46.5" fill="url(#rb2)" rx="4"/>
<circle cx="2194.8" cy="1505.2" r="13.6" fill="url(#bcir)" fill-opacity="0.7"/>
<circle cx="2514.8" cy="1505.2" r="13.6" fill="url(#bcir)" fill-opacity="0.7"/>
<path d="M2181.7 1452.8H2188.6V1462.6H2181.7Z" fill="#262626" fill-opacity="0.9"/>
<path d="M2247.5 1451V1466L2260 1458.5Z" fill="#262626" fill-opacity="0.85"/>
<path d="M2312.2 1450V1464M2327.3 1450V1464" fill="none" stroke="#262626" stroke-width="2.2" stroke-opacity="0.85"/>
<path d="M2314.5 1455.8H2325" fill="none" stroke="#262626" stroke-width="1.6" stroke-opacity="0.8" stroke-dasharray="1.8 1.6"/>
<path d="M2378.5 1456Q2378.5 1450.5 2382.7 1450.5Q2386.7 1450.5 2386.7 1456Q2386.7 1461.5 2390.8 1461.5Q2395 1461.5 2395 1456Q2395 1450.5 2390.8 1450.5Q2386.7 1450.5 2386.7 1456Q2386.7 1461.5 2382.7 1461.5Q2378.5 1461.5 2378.5 1456Z" fill="none" stroke="#262626" stroke-width="2.2" stroke-opacity="0.75"/>
<path d="M2460.5 1451.5A7.2 7.2 0 1 0 2461.2 1458.5" fill="none" stroke="#262626" stroke-width="2.4" stroke-opacity="0.75"/>
<path d="M2456 1446.5L2463 1446L2462 1453Z" fill="#262626" fill-opacity="0.75"/>
<text x="2235.3" y="1515.7" font-size="32.4" fill="#262626" textLength="75.2" lengthAdjust="spacingAndGlyphs" filter="url(#soft)">Back</text>
<text x="2396.8" y="1515.7" font-size="32.4" fill="#262626" textLength="75.3" lengthAdjust="spacingAndGlyphs" filter="url(#soft)">Next</text>
<path d="M2196.5 1499.5L2191.5 1505.2L2196.5 1511M2201.5 1499.5L2196.5 1505.2L2201.5 1511" fill="none" stroke="#3a3a3a" stroke-width="1.8" stroke-opacity="0.8"/>
<path d="M2508 1499.5L2513 1505.2L2508 1511M2513.5 1499.5L2518.5 1505.2L2513.5 1511" fill="none" stroke="#3a3a3a" stroke-width="1.8" stroke-opacity="0.8"/>
<path d="M2176.6 1447.91L2224.75 1458.29L2226.44 1485.91L2233.19 1488.28L2262.75 1494.19L2208.28 1510.24L2178.29 1493.18Z" fill="none" stroke="#ffffff" stroke-width="6.2" stroke-opacity="0.6" stroke-linejoin="round"/>
<path d="M2176.6 1447.91L2224.75 1458.29L2226.44 1485.91L2233.19 1488.28L2262.75 1494.19L2208.28 1510.24L2178.29 1493.18Z" fill="none" stroke="#98303a" stroke-width="3.9" stroke-opacity="0.82" stroke-linejoin="round"/>
<path d="M2181.93 1452.13L2221.79 1460.41L2223.31 1484.05L2187.58 1489.29Z" fill="none" stroke="#ffffff" stroke-width="3.2" stroke-opacity="0.5" stroke-linejoin="round"/>
<path d="M2181.93 1452.13L2221.79 1460.41L2223.31 1484.05L2187.58 1489.29Z" fill="none" stroke="#98303a" stroke-width="1.8" stroke-opacity="0.8" stroke-linejoin="round"/>
<path d="M2189.02 1463.95L2196.28 1460.57L2205.91 1470.54L2232.09 1443.68L2233.78 1445.71L2205.07 1484.22Z" fill="#3e3e3e" stroke="#ffffff" stroke-width="1.8" fill-opacity="0.9" stroke-opacity="0.65" stroke-linejoin="round" paint-order="stroke"/>
<text x="2233.61" y="1484.05" font-size="34.8" font-weight="bold" fill="#9a343e" fill-opacity="0.82" stroke="#fff" stroke-opacity="0.62" stroke-width="2.6" paint-order="stroke" textLength="195.5" lengthAdjust="spacingAndGlyphs">NOTEBOOK</text>
<text x="2430.5" y="1484.05" font-size="34.8" fill="#3c3c3c" fill-opacity="0.9" stroke="#fff" stroke-opacity="0.62" stroke-width="2.6" paint-order="stroke" textLength="116.5" lengthAdjust="spacingAndGlyphs">CHECK</text>
<rect x="2005.2" y="1191.8" width="540.5" height="186" fill="#444791" rx="10"/>
<circle cx="2040.4" cy="1216.9" r="2.8" fill="none" stroke="#fff" stroke-width="1.4"/>
<circle cx="2049.4" cy="1220.3" r="2.1" fill="none" stroke="#fff" stroke-width="1.3"/>
<path d="M2042 1222.3H2045.2Q2046.6 1222.3 2046.6 1223.7V1231Q2046.6 1235.6 2042 1235.6H2038.5Q2035.8 1235.6 2034.4 1233.8" fill="none" stroke="#fff" stroke-width="1.4"/>
<rect x="2047.2" y="1224.9" width="5.6" height="10.2" fill="none" rx="2.6" stroke="#fff" stroke-width="1.3" stroke-opacity="0.92"/>
<rect x="2031.7" y="1223.1" width="12.1" height="10.8" fill="#fff" rx="2"/>
<text x="2037.7" y="1232.2" font-size="9.6" fill="#444791" text-anchor="middle" font-weight="bold">T</text>
<text x="2071.8" y="1231.9" font-size="18.2" fill="#fff" textLength="129.3" lengthAdjust="spacingAndGlyphs">Microsoft Teams</text>
<circle cx="2455.4" cy="1225" r="1.35" fill="#fff"/>
<circle cx="2460.9" cy="1225" r="1.35" fill="#fff"/>
<circle cx="2466.4" cy="1225" r="1.35" fill="#fff"/>
<path d="M2502.3 1218.2L2516 1231.9M2516 1218.2L2502.3 1231.9" fill="none" stroke="#fff" stroke-width="1.4"/>
<circle cx="2065.1" cy="1293.9" r="34.7" fill="#fdf3f4" stroke="#f1b3a4" stroke-width="1.8"/>
<path d="M2065.1 1279.2Q2066.8 1279.2 2067.8 1281L2081.4 1305.5Q2082.8 1309 2079 1309.3H2051.2Q2047.4 1309 2048.8 1305.5L2062.4 1281Q2063.4 1279.2 2065.1 1279.2Z" fill="#da3b01"/>
<rect x="2064.1" y="1287.5" width="2" height="11.5" fill="#fff" rx="1"/>
<circle cx="2065.1" cy="1303.3" r="1.5" fill="#fff"/>
<text x="2119.4" y="1281.5" font-size="20.3" fill="#fff" font-weight="bold" textLength="278.5" lengthAdjust="spacingAndGlyphs">Your account needs attention</text>
<text x="2119.4" y="1311.3" font-size="20.3" fill="#fff" textLength="246.5" lengthAdjust="spacingAndGlyphs">Open Teams for more info.</text>
</svg>
</body></html>
